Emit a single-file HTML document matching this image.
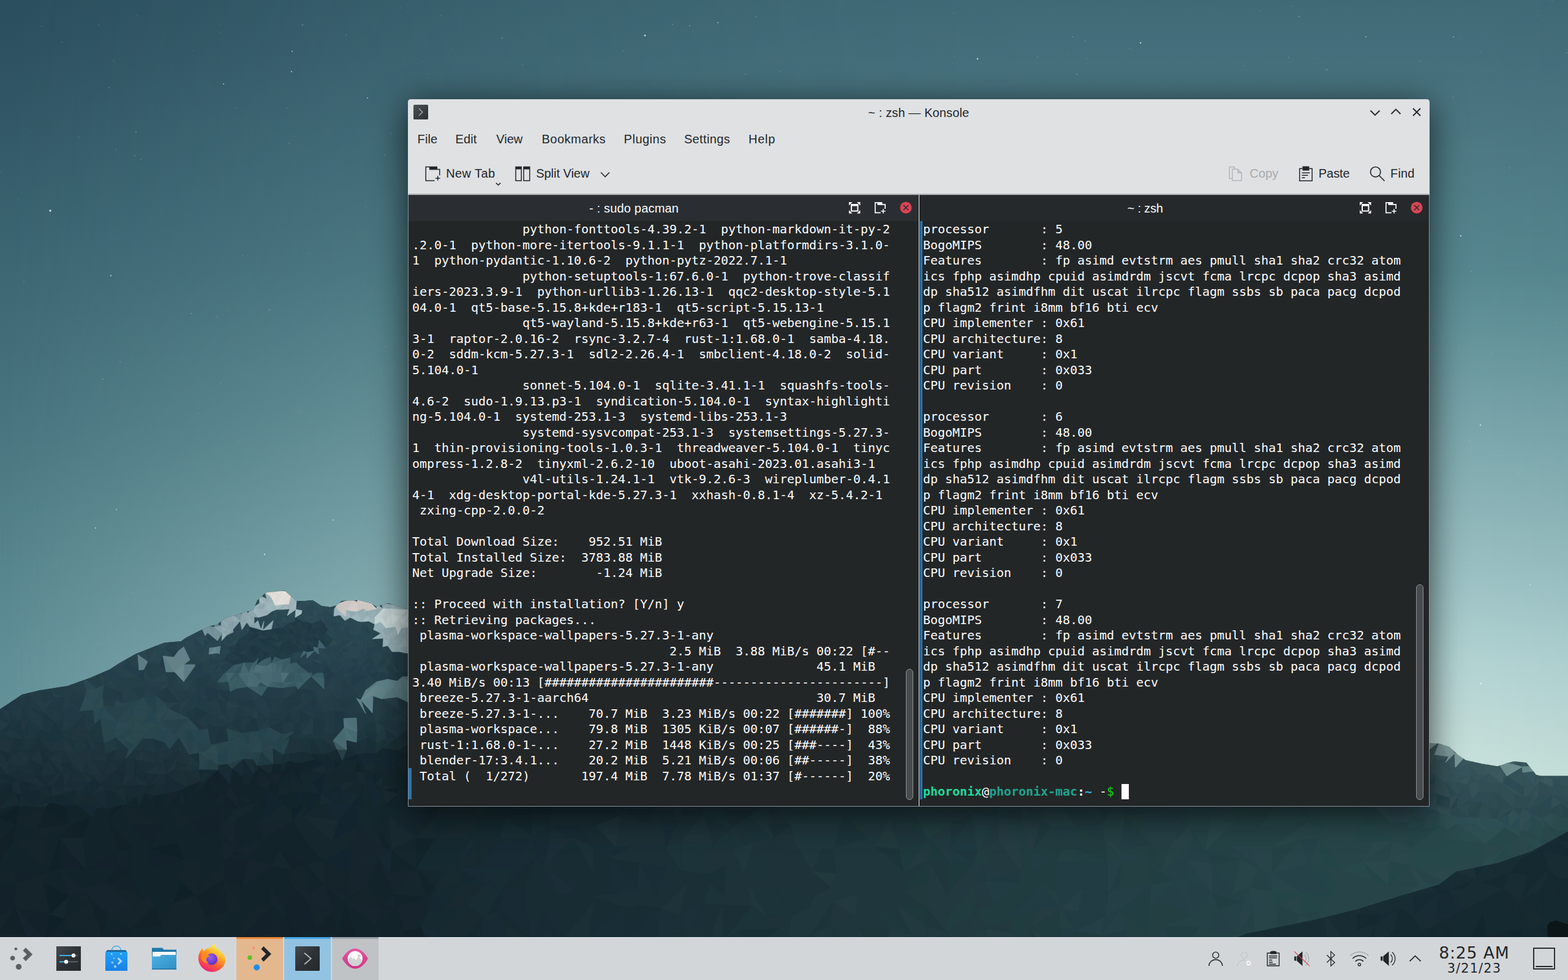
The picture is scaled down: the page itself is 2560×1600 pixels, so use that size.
<!DOCTYPE html>
<html lang="en"><head><meta charset="utf-8"><title>~ : zsh — Konsole</title>
<style>
html,body{margin:0;padding:0}
body{width:2560px;height:1600px;overflow:hidden;position:relative;background:#2f5563;font-family:"Liberation Sans","DejaVu Sans",sans-serif;color:#232629}
.abs{position:absolute}
.t{position:absolute;font-size:20px;line-height:24px;white-space:pre;color:#232629}
#wall{position:absolute;left:0;top:0}
#win{position:absolute;left:666px;top:162px;width:1668px;height:1155px;box-sizing:border-box;background:#dfe1e3;border-radius:4.500px 4.500px 0 0;box-shadow:0 10px 56px rgba(0,0,0,.7)}
#term{position:absolute;left:666px;top:318px;width:1668px;height:999px;box-sizing:border-box;background:#232627;border:1px solid #87949a;border-top:0}
.hdr{position:absolute;top:318px;height:43px}
pre.tt{position:absolute;margin:0;top:362px;font-family:"DejaVu Sans Mono","Liberation Mono",monospace;font-size:20px;line-height:25.5px;letter-spacing:-0.04px;color:#fcfcfc;white-space:pre}
pre.tt b{font-weight:bold}
.g1{color:#1cdc9a}.g2{color:#1ea48f}.bl{color:#3daee9}.g3{color:#11d116}
.pt{color:#fcfcfc}.dis{color:#a7aaad}
.clk{font:26.600px/30px 'DejaVu Sans','Liberation Sans',sans-serif}
.dat{font:20.800px/22px 'DejaVu Sans','Liberation Sans',sans-serif}
</style></head><body>
<svg id="wall" width="2560" height="1600" viewBox="0 0 2560 1600">
<defs>
<linearGradient id="skyv" x1="0" y1="0" x2="0" y2="1300" gradientUnits="userSpaceOnUse">
<stop offset="0" stop-color="#2a4e5d"/><stop offset=".0615" stop-color="#2d5160"/><stop offset=".338" stop-color="#3d6773"/><stop offset=".538" stop-color="#48757f"/><stop offset=".708" stop-color="#57858d"/><stop offset=".831" stop-color="#608e96"/><stop offset="1" stop-color="#68969d"/></linearGradient>
<linearGradient id="skyo" x1="0" y1="0" x2="0" y2="1300" gradientUnits="userSpaceOnUse">
<stop offset="0" stop-color="#aaeeec" stop-opacity=".18"/><stop offset=".0615" stop-color="#aaeeec" stop-opacity=".19"/><stop offset=".338" stop-color="#aceeec" stop-opacity=".23"/><stop offset=".538" stop-color="#c5eeec" stop-opacity=".40"/><stop offset=".708" stop-color="#d0eeec" stop-opacity=".54"/><stop offset=".831" stop-color="#d2eeea" stop-opacity=".71"/><stop offset=".923" stop-color="#d8eee7" stop-opacity=".80"/><stop offset="1" stop-color="#def0e8" stop-opacity=".86"/></linearGradient>
<linearGradient id="mk" x1="0" y1="0" x2="2560" y2="0" gradientUnits="userSpaceOnUse">
<stop offset="0" stop-color="#fff" stop-opacity="0"/><stop offset=".117" stop-color="#fff" stop-opacity=".27"/><stop offset=".215" stop-color="#fff" stop-opacity=".5"/><stop offset=".35" stop-color="#fff" stop-opacity=".72"/><stop offset=".5" stop-color="#fff" stop-opacity=".9"/><stop offset=".664" stop-color="#fff" stop-opacity="1"/><stop offset=".945" stop-color="#fff" stop-opacity="1"/><stop offset="1" stop-color="#fff" stop-opacity=".95"/></linearGradient>
<mask id="skym" maskUnits="userSpaceOnUse" x="0" y="0" width="2560" height="1600"><rect width="2560" height="1600" fill="url(#mk)"/></mask>
<clipPath id="cl"><path d="M0.0 1158.0 L36.0 1134.0 L65.0 1127.0 L110.0 1120.0 L149.0 1106.0 L180.0 1092.6 L192.4 1084.3 L221.3 1067.8 L252.3 1055.4 L268.8 1049.2 L295.7 1047.1 L304.0 1040.9 L324.6 1030.6 L343.2 1022.3 L355.6 1019.2 L366.0 1009.9 L386.6 1003.7 L403.1 998.6 L413.5 996.5 L419.7 981.0 L434.1 967.6 L465.1 964.5 L477.5 975.8 L483.7 981.0 L498.2 981.0 L510.6 980.0 L525.0 989.3 L539.5 991.3 L549.8 988.2 L558.1 981.0 L585.0 980.0 L605.6 985.1 L613.9 990.3 L634.5 985.1 L665.5 994.4 L700.0 1000.0 L700 1600 L0 1600z"/></clipPath>
<clipPath id="c3"><path d="M1990.0 1545.0 L2023.0 1529.0 L2036.0 1524.0 L2091.0 1513.0 L2145.0 1502.0 L2214.0 1485.0 L2282.0 1464.0 L2350.0 1444.0 L2377.0 1423.0 L2445.0 1409.0 L2500.0 1390.0 L2570.0 1352.0 L2570 1600 L1990 1600z"/></clipPath>
<clipPath id="cr"><path d="M2300.0 1205.0 L2333.0 1213.0 L2350.0 1214.0 L2366.0 1219.0 L2380.0 1232.0 L2393.0 1241.0 L2420.0 1247.0 L2445.0 1251.0 L2460.0 1246.0 L2472.0 1243.0 L2492.0 1245.0 L2500.0 1255.0 L2508.0 1265.0 L2535.0 1272.0 L2560.0 1275.0 L2560 1600 L2300 1600z"/></clipPath>
</defs>
<rect width="2560" height="1600" fill="url(#skyv)"/>
<rect width="2560" height="1600" fill="url(#skyo)" mask="url(#skym)"/>
<g fill="#e4f3f0">
<circle cx="82" cy="344" r="1.7" opacity="0.85"/>
<circle cx="1053" cy="58" r="1.4" opacity="0.80"/>
<circle cx="365" cy="137" r="1.1" opacity="0.60"/>
<circle cx="477" cy="84" r="1.1" opacity="0.60"/>
<circle cx="181" cy="450" r="1.2" opacity="0.60"/>
<circle cx="1862" cy="70" r="1.3" opacity="0.70"/>
<circle cx="2385" cy="385" r="1.3" opacity="0.70"/>
<circle cx="2417" cy="694" r="1.2" opacity="0.70"/>
<circle cx="2418" cy="1116" r="1.4" opacity="0.80"/>
<circle cx="2498" cy="954" r="1.1" opacity="0.60"/>
<circle cx="432" cy="905" r="1.2" opacity="0.70"/>
<circle cx="156" cy="862" r="1.1" opacity="0.60"/>
<circle cx="544" cy="849" r="1.1" opacity="0.60"/>
<circle cx="190" cy="832" r="1.0" opacity="0.60"/>
<circle cx="1172" cy="37" r="1.0" opacity="0.60"/>
<circle cx="1596" cy="96" r="1.3" opacity="0.80"/>
<circle cx="2230" cy="60" r="1.0" opacity="0.50"/>
<circle cx="476" cy="117" r="1.1" opacity="0.70"/>
<circle cx="600" cy="160" r="1.0" opacity="0.60"/>
<circle cx="2365" cy="535" r="0.7" opacity="0.17"/>
<circle cx="2030" cy="108" r="0.8" opacity="0.23"/>
<circle cx="161" cy="41" r="0.7" opacity="0.37"/>
<circle cx="598" cy="338" r="0.6" opacity="0.31"/>
<circle cx="2553" cy="1145" r="0.6" opacity="0.12"/>
<circle cx="739" cy="80" r="0.6" opacity="0.30"/>
<circle cx="2452" cy="974" r="0.6" opacity="0.10"/>
<circle cx="2373" cy="60" r="0.9" opacity="0.48"/>
<circle cx="1017" cy="83" r="0.7" opacity="0.41"/>
<circle cx="690" cy="100" r="0.8" opacity="0.19"/>
<circle cx="344" cy="813" r="0.6" opacity="0.11"/>
<circle cx="488" cy="841" r="0.7" opacity="0.15"/>
<circle cx="2534" cy="0" r="0.8" opacity="0.50"/>
<circle cx="50" cy="215" r="0.6" opacity="0.18"/>
<circle cx="374" cy="507" r="0.6" opacity="0.29"/>
<circle cx="187" cy="103" r="0.7" opacity="0.19"/>
<circle cx="325" cy="675" r="0.7" opacity="0.27"/>
<circle cx="468" cy="177" r="0.7" opacity="0.40"/>
<circle cx="638" cy="218" r="0.7" opacity="0.35"/>
<circle cx="200" cy="54" r="0.6" opacity="0.20"/>
<circle cx="2464" cy="274" r="0.9" opacity="0.23"/>
<circle cx="1844" cy="79" r="0.7" opacity="0.33"/>
<circle cx="189" cy="244" r="0.7" opacity="0.36"/>
<circle cx="177" cy="473" r="0.7" opacity="0.15"/>
<circle cx="451" cy="424" r="0.7" opacity="0.17"/>
<circle cx="354" cy="517" r="0.8" opacity="0.27"/>
<circle cx="359" cy="40" r="0.6" opacity="0.33"/>
<circle cx="85" cy="688" r="0.6" opacity="0.20"/>
<circle cx="2558" cy="86" r="0.8" opacity="0.40"/>
<circle cx="1558" cy="92" r="0.6" opacity="0.47"/>
<circle cx="2146" cy="96" r="0.6" opacity="0.28"/>
<circle cx="224" cy="25" r="0.6" opacity="0.34"/>
<circle cx="654" cy="13" r="0.8" opacity="0.24"/>
<circle cx="2381" cy="573" r="0.7" opacity="0.19"/>
<circle cx="2432" cy="318" r="0.7" opacity="0.19"/>
<circle cx="486" cy="884" r="0.8" opacity="0.12"/>
<circle cx="360" cy="53" r="0.6" opacity="0.32"/>
<circle cx="27" cy="543" r="0.6" opacity="0.17"/>
<circle cx="2319" cy="100" r="0.9" opacity="0.22"/>
<circle cx="524" cy="830" r="0.6" opacity="0.13"/>
<circle cx="2502" cy="617" r="0.8" opacity="0.17"/>
<circle cx="1838" cy="17" r="0.6" opacity="0.21"/>
<circle cx="1098" cy="40" r="0.8" opacity="0.40"/>
<circle cx="2559" cy="1035" r="0.9" opacity="0.17"/>
<circle cx="220" cy="254" r="0.8" opacity="0.38"/>
<circle cx="2444" cy="1000" r="0.7" opacity="0.11"/>
<circle cx="361" cy="626" r="0.8" opacity="0.23"/>
<circle cx="514" cy="616" r="0.6" opacity="0.23"/>
<circle cx="168" cy="619" r="0.9" opacity="0.29"/>
<circle cx="630" cy="566" r="0.8" opacity="0.21"/>
<circle cx="490" cy="710" r="0.8" opacity="0.13"/>
<circle cx="1994" cy="26" r="0.7" opacity="0.24"/>
<circle cx="30" cy="326" r="0.8" opacity="0.22"/>
<circle cx="59" cy="727" r="0.7" opacity="0.20"/>
<circle cx="558" cy="248" r="0.7" opacity="0.23"/>
<circle cx="612" cy="835" r="0.8" opacity="0.15"/>
<circle cx="513" cy="722" r="0.6" opacity="0.13"/>
<circle cx="1234" cy="27" r="0.9" opacity="0.24"/>
<circle cx="472" cy="234" r="0.7" opacity="0.42"/>
<circle cx="2372" cy="109" r="0.6" opacity="0.22"/>
<circle cx="1743" cy="89" r="0.6" opacity="0.28"/>
<circle cx="33" cy="806" r="0.7" opacity="0.13"/>
<circle cx="422" cy="589" r="0.6" opacity="0.19"/>
<circle cx="217" cy="968" r="0.9" opacity="0.15"/>
<circle cx="488" cy="672" r="0.8" opacity="0.26"/>
<circle cx="1849" cy="81" r="0.8" opacity="0.28"/>
<circle cx="258" cy="1021" r="0.6" opacity="0.10"/>
<circle cx="2418" cy="766" r="0.8" opacity="0.14"/>
<circle cx="196" cy="591" r="0.9" opacity="0.25"/>
<circle cx="2509" cy="26" r="0.6" opacity="0.41"/>
<circle cx="129" cy="224" r="0.9" opacity="0.17"/>
<circle cx="2166" cy="114" r="0.9" opacity="0.41"/>
<circle cx="195" cy="687" r="0.6" opacity="0.18"/>
<circle cx="2402" cy="443" r="0.7" opacity="0.33"/>
<circle cx="2379" cy="763" r="0.8" opacity="0.11"/>
<circle cx="1751" cy="60" r="0.8" opacity="0.41"/>
<circle cx="2417" cy="84" r="0.7" opacity="0.31"/>
<circle cx="623" cy="601" r="0.9" opacity="0.15"/>
<circle cx="2457" cy="281" r="0.6" opacity="0.18"/>
<circle cx="1067" cy="135" r="0.6" opacity="0.28"/>
<circle cx="396" cy="417" r="0.7" opacity="0.30"/>
<circle cx="2553" cy="1095" r="0.7" opacity="0.09"/>
<circle cx="291" cy="1026" r="0.8" opacity="0.10"/>
<circle cx="2436" cy="577" r="0.7" opacity="0.30"/>
<circle cx="101" cy="69" r="0.8" opacity="0.27"/>
<circle cx="68" cy="43" r="0.7" opacity="0.35"/>
<circle cx="185" cy="99" r="0.7" opacity="0.34"/>
<circle cx="2146" cy="85" r="0.6" opacity="0.32"/>
<circle cx="385" cy="176" r="0.8" opacity="0.26"/>
<circle cx="470" cy="751" r="0.6" opacity="0.18"/>
<circle cx="2108" cy="10" r="0.8" opacity="0.26"/>
<circle cx="1694" cy="93" r="0.8" opacity="0.33"/>
<circle cx="2540" cy="527" r="0.7" opacity="0.21"/>
<circle cx="2392" cy="1028" r="0.7" opacity="0.08"/>
<circle cx="2121" cy="27" r="0.9" opacity="0.37"/>
<circle cx="396" cy="679" r="0.7" opacity="0.15"/>
<circle cx="720" cy="25" r="0.6" opacity="0.36"/>
<circle cx="163" cy="628" r="0.6" opacity="0.18"/>
<circle cx="700" cy="121" r="0.8" opacity="0.21"/>
<circle cx="628" cy="253" r="0.8" opacity="0.36"/>
<circle cx="2478" cy="773" r="0.9" opacity="0.18"/>
<circle cx="2060" cy="83" r="0.6" opacity="0.31"/>
<circle cx="2451" cy="736" r="0.8" opacity="0.22"/>
<circle cx="523" cy="488" r="0.8" opacity="0.20"/>
<circle cx="43" cy="553" r="0.6" opacity="0.19"/>
<circle cx="505" cy="413" r="0.7" opacity="0.28"/>
<circle cx="2399" cy="720" r="0.9" opacity="0.25"/>
<circle cx="2446" cy="759" r="0.6" opacity="0.18"/>
<circle cx="565" cy="57" r="0.7" opacity="0.42"/>
<circle cx="2535" cy="756" r="0.7" opacity="0.25"/>
<circle cx="1320" cy="60" r="0.7" opacity="0.19"/>
<circle cx="2104" cy="94" r="0.8" opacity="0.36"/>
<circle cx="1775" cy="95" r="0.8" opacity="0.19"/>
<circle cx="480" cy="222" r="0.6" opacity="0.37"/>
<circle cx="1126" cy="42" r="0.9" opacity="0.35"/>
<circle cx="403" cy="956" r="0.8" opacity="0.12"/>
<circle cx="2553" cy="767" r="0.6" opacity="0.16"/>
<circle cx="1758" cy="121" r="0.9" opacity="0.37"/>
<circle cx="312" cy="512" r="0.9" opacity="0.28"/>
<circle cx="290" cy="887" r="0.7" opacity="0.21"/>
<circle cx="389" cy="721" r="0.8" opacity="0.27"/>
<circle cx="222" cy="216" r="0.9" opacity="0.36"/>
<circle cx="236" cy="161" r="0.6" opacity="0.22"/>
<circle cx="494" cy="41" r="0.9" opacity="0.37"/>
<circle cx="230" cy="260" r="0.7" opacity="0.42"/>
<circle cx="2372" cy="159" r="0.7" opacity="0.39"/>
<circle cx="39" cy="460" r="0.8" opacity="0.35"/>
<circle cx="1558" cy="21" r="0.8" opacity="0.25"/>
<circle cx="262" cy="820" r="0.8" opacity="0.21"/>
<circle cx="362" cy="820" r="0.7" opacity="0.18"/>
<circle cx="68" cy="758" r="0.6" opacity="0.13"/>
<circle cx="853" cy="105" r="0.8" opacity="0.26"/>
<circle cx="162" cy="1052" r="0.7" opacity="0.16"/>
<circle cx="2539" cy="940" r="0.7" opacity="0.10"/>
<circle cx="475" cy="630" r="0.6" opacity="0.20"/>
<circle cx="2380" cy="1148" r="0.7" opacity="0.08"/>
<circle cx="2057" cy="18" r="0.7" opacity="0.32"/>
<circle cx="84" cy="607" r="0.6" opacity="0.23"/>
<circle cx="444" cy="597" r="0.8" opacity="0.17"/>
<circle cx="2385" cy="61" r="0.6" opacity="0.40"/>
<circle cx="1273" cy="117" r="0.8" opacity="0.30"/>
<circle cx="820" cy="62" r="0.9" opacity="0.40"/>
<circle cx="178" cy="143" r="0.9" opacity="0.25"/>
<circle cx="1217" cy="121" r="0.7" opacity="0.34"/>
<circle cx="314" cy="82" r="0.7" opacity="0.22"/>
<circle cx="1" cy="280" r="0.8" opacity="0.17"/>
<circle cx="440" cy="506" r="0.9" opacity="0.30"/>
<circle cx="1498" cy="52" r="0.6" opacity="0.33"/>
<circle cx="366" cy="893" r="0.9" opacity="0.20"/>
<circle cx="1772" cy="67" r="0.8" opacity="0.43"/>
</g>
<rect x="680" y="1000" width="1640" height="600" fill="#20383f"/>
<rect x="0" y="1290" width="2560" height="310" fill="#1a2f36"/>
<g stroke-width=".8" stroke-linejoin="round">
<path fill="#0f2127" stroke="#0f2127" d="M31 1315L27 1347L-3 1335zM73 1318L98 1293L114 1346zM97 1369L99 1417L79 1424zM69 1439L113 1463L82 1493zM82 1493L104 1499L75 1535zM114 1346L150 1333L135 1368zM190 1309L202 1314L176 1339zM247 1385L290 1376L300 1403zM296 1439L320 1461L282 1475zM552 1527L577 1514L576 1561z"/>
<path fill="#0f212a" stroke="#0f212a" d="M472 1307L505 1303L478 1340z"/>
<path fill="#122127" stroke="#122127" d="M27 1347L23 1370L-3 1374zM-3 1374L23 1370L-3 1411zM24 1480L42 1528L-3 1523zM-3 1523L47 1561L-3 1561zM73 1318L114 1346L61 1354zM114 1346L135 1368L97 1369zM149 1473L177 1491L166 1530zM176 1339L218 1384L192 1388zM191 1416L214 1427L170 1441zM252 1480L264 1511L213 1516zM320 1461L365 1438L336 1500zM544 1488L552 1527L515 1518zM564 1473L577 1514L552 1527zM552 1527L576 1561L536 1561zM661 1519L688 1513L653 1561zM688 1513L690 1561L653 1561z"/>
<path fill="#12212a" stroke="#12212a" d="M-3 1446L26 1443L24 1480zM-3 1446L24 1480L-3 1497zM24 1422L79 1424L26 1443zM24 1480L82 1493L75 1535zM104 1499L106 1519L75 1535zM97 1369L140 1420L99 1417zM106 1519L142 1530L101 1561zM192 1388L191 1416L140 1420zM142 1530L188 1561L146 1561zM218 1384L214 1427L191 1416zM214 1427L228 1462L170 1441zM166 1530L213 1516L227 1561zM214 1347L265 1347L247 1385zM295 1267L278 1313L260 1315zM247 1385L300 1403L245 1417zM298 1520L322 1524L294 1561zM322 1524L332 1561L294 1561zM359 1316L357 1354L313 1342zM313 1342L357 1354L330 1370zM365 1438L373 1487L336 1500zM367 1404L407 1401L395 1449zM367 1404L395 1449L365 1438zM393 1267L441 1296L389 1315zM443 1478L443 1525L392 1534zM467 1495L481 1534L443 1525zM481 1534L459 1561L445 1561zM457 1389L498 1410L476 1419zM475 1443L506 1477L467 1495zM467 1495L506 1477L481 1534zM506 1477L515 1518L481 1534zM552 1527L536 1561L517 1561zM577 1514L610 1561L576 1561z"/>
<path fill="#12242a" stroke="#12242a" d="M-3 1314L31 1315L-3 1335zM-3 1335L27 1347L-3 1374zM23 1370L24 1422L-3 1411zM-3 1411L26 1443L-3 1446zM31 1315L73 1318L27 1347zM27 1347L61 1354L23 1370zM61 1354L70 1370L23 1370zM23 1370L79 1424L24 1422zM42 1528L75 1535L59 1561zM114 1346L97 1369L70 1370zM70 1370L97 1369L79 1424zM79 1424L99 1417L113 1463zM79 1424L113 1463L69 1439zM75 1535L106 1519L101 1561zM75 1535L101 1561L59 1561zM98 1293L150 1333L114 1346zM99 1417L140 1420L132 1451zM113 1463L149 1473L104 1499zM104 1499L142 1530L106 1519zM157 1320L190 1309L150 1333zM190 1309L176 1339L150 1333zM150 1333L176 1339L135 1368zM176 1339L192 1388L135 1368zM135 1368L192 1388L140 1420zM140 1420L191 1416L170 1441zM140 1420L170 1441L132 1451zM132 1451L177 1491L149 1473zM202 1314L214 1347L176 1339zM176 1339L214 1347L218 1384zM192 1388L218 1384L191 1416zM177 1491L213 1516L166 1530zM166 1530L227 1561L188 1561zM202 1314L260 1315L265 1347zM214 1347L247 1385L218 1384zM218 1384L247 1385L214 1427zM247 1385L245 1417L214 1427zM214 1427L245 1417L228 1462zM245 1417L243 1460L228 1462zM228 1462L243 1460L219 1481zM213 1516L264 1511L227 1561zM264 1511L264 1561L227 1561zM260 1315L278 1313L290 1353zM260 1315L290 1353L265 1347zM265 1347L290 1353L290 1376zM265 1347L290 1376L247 1385zM245 1417L300 1403L243 1460zM300 1403L296 1439L243 1460zM243 1460L296 1439L282 1475zM243 1460L282 1475L252 1480zM252 1480L282 1475L264 1511zM264 1511L294 1561L264 1561zM295 1267L317 1267L330 1310zM278 1313L330 1310L313 1342zM290 1353L313 1342L330 1370zM290 1353L330 1370L290 1376zM290 1376L330 1370L300 1403zM330 1370L328 1408L300 1403zM330 1310L359 1316L313 1342zM357 1354L359 1368L330 1370zM330 1370L359 1368L367 1404zM330 1370L367 1404L328 1408zM328 1408L367 1404L320 1461zM336 1500L367 1512L322 1524zM322 1524L367 1512L332 1561zM367 1267L393 1267L359 1316zM393 1267L389 1315L359 1316zM359 1316L389 1315L357 1354zM357 1354L385 1388L359 1368zM385 1388L407 1401L367 1404zM365 1438L395 1449L402 1492zM373 1487L402 1492L367 1512zM402 1492L392 1534L367 1512zM367 1512L392 1534L364 1561zM393 1267L422 1267L441 1296zM441 1296L423 1342L383 1341zM383 1341L423 1342L385 1388zM423 1342L428 1369L385 1388zM428 1369L444 1413L407 1401zM444 1413L440 1443L395 1449zM395 1449L440 1443L402 1492zM440 1443L443 1478L402 1492zM392 1534L445 1561L387 1561zM422 1267L475 1267L472 1307zM422 1267L472 1307L441 1296zM478 1340L457 1389L428 1369zM428 1369L457 1389L444 1413zM444 1413L476 1419L440 1443zM476 1419L475 1443L440 1443zM440 1443L475 1443L467 1495zM443 1478L467 1495L443 1525zM443 1525L481 1534L445 1561zM475 1267L509 1267L472 1307zM478 1340L503 1378L457 1389zM457 1389L503 1378L498 1410zM481 1534L515 1518L517 1561zM503 1378L527 1406L498 1410zM498 1410L530 1444L505 1457zM515 1518L552 1527L517 1561zM530 1444L564 1473L544 1488zM544 1488L564 1473L552 1527zM569 1463L600 1448L564 1473zM564 1473L614 1509L577 1514zM577 1514L614 1509L610 1561zM617 1354L639 1387L625 1383zM618 1400L642 1460L600 1448zM600 1448L642 1460L625 1481zM648 1481L661 1519L614 1509zM614 1509L661 1519L653 1561zM639 1387L680 1418L637 1426zM642 1460L696 1464L648 1481zM678 1368L711 1368L680 1418zM680 1418L711 1450L696 1464zM688 1513L707 1561L690 1561z"/>
<path fill="#12242d" stroke="#12242d" d="M441 1296L472 1307L423 1342zM505 1303L530 1308L495 1332zM580 1307L586 1347L553 1339zM553 1339L586 1347L541 1373zM572 1381L571 1427L527 1406zM588 1267L621 1311L580 1307z"/>
<path fill="#12272d" stroke="#12272d" d="M621 1311L650 1315L617 1354z"/>
<path fill="#15242a" stroke="#15242a" d="M-3 1411L24 1422L26 1443zM-3 1497L24 1480L-3 1523zM-3 1523L42 1528L47 1561zM73 1318L61 1354L27 1347zM23 1370L70 1370L79 1424zM79 1424L69 1439L26 1443zM26 1443L69 1439L24 1480zM69 1439L82 1493L24 1480zM42 1528L59 1561L47 1561zM61 1354L114 1346L70 1370zM113 1463L132 1451L149 1473zM104 1499L149 1473L142 1530zM142 1530L146 1561L101 1561zM149 1473L166 1530L142 1530zM170 1441L228 1462L219 1481zM177 1491L219 1481L213 1516zM202 1314L265 1347L214 1347zM219 1481L252 1480L213 1516zM282 1475L298 1520L264 1511zM264 1511L298 1520L294 1561zM278 1313L313 1342L290 1353zM300 1403L328 1408L296 1439zM328 1408L320 1461L296 1439zM320 1461L336 1500L282 1475zM282 1475L336 1500L322 1524zM282 1475L322 1524L298 1520zM367 1404L365 1438L320 1461zM336 1500L373 1487L367 1512zM367 1512L364 1561L332 1561zM365 1438L402 1492L373 1487zM392 1534L387 1561L364 1561zM402 1492L443 1478L392 1534zM392 1534L443 1525L445 1561zM476 1419L498 1410L475 1443zM498 1410L505 1457L475 1443zM506 1477L544 1488L515 1518zM527 1406L571 1427L530 1444zM571 1427L569 1463L530 1444zM600 1448L625 1481L564 1473zM625 1481L648 1481L614 1509zM614 1509L653 1561L610 1561z"/>
<path fill="#15242d" stroke="#15242d" d="M24 1480L75 1535L42 1528zM99 1417L132 1451L113 1463zM132 1451L170 1441L177 1491zM170 1441L219 1481L177 1491zM243 1460L252 1480L219 1481zM295 1267L330 1310L278 1313zM317 1267L367 1267L330 1310zM367 1267L359 1316L330 1310zM357 1354L383 1341L385 1388zM359 1368L385 1388L367 1404zM385 1388L428 1369L407 1401zM407 1401L444 1413L395 1449zM423 1342L478 1340L428 1369zM440 1443L467 1495L443 1478zM509 1267L505 1303L472 1307zM475 1443L505 1457L506 1477zM505 1457L530 1444L506 1477zM530 1444L544 1488L506 1477zM530 1444L569 1463L564 1473zM586 1347L625 1383L572 1381zM572 1381L625 1383L571 1427zM571 1427L618 1400L569 1463zM618 1400L600 1448L569 1463zM564 1473L625 1481L614 1509zM625 1383L639 1387L618 1400zM618 1400L637 1426L642 1460zM642 1460L648 1481L625 1481zM637 1426L680 1418L642 1460zM696 1464L698 1489L648 1481zM648 1481L698 1489L688 1513zM648 1481L688 1513L661 1519z"/>
<path fill="#15272d" stroke="#15272d" d="M113 1463L104 1499L82 1493zM97 1369L135 1368L140 1420zM142 1530L166 1530L188 1561zM389 1315L383 1341L357 1354zM389 1315L441 1296L383 1341zM472 1307L478 1340L423 1342zM457 1389L476 1419L444 1413zM505 1303L495 1332L478 1340zM478 1340L495 1332L503 1378zM481 1534L517 1561L459 1561zM509 1267L553 1267L505 1303zM553 1267L530 1308L505 1303zM530 1308L553 1339L495 1332zM495 1332L541 1373L503 1378zM503 1378L541 1373L527 1406zM498 1410L527 1406L530 1444zM553 1267L588 1267L580 1307zM553 1267L580 1307L530 1308zM586 1347L572 1381L541 1373zM541 1373L572 1381L527 1406zM580 1307L621 1311L586 1347zM621 1311L617 1354L586 1347zM586 1347L617 1354L625 1383zM625 1383L618 1400L571 1427zM602 1267L650 1315L621 1311zM617 1354L635 1334L639 1387zM650 1315L673 1349L635 1334zM639 1387L678 1368L680 1418zM680 1418L696 1464L642 1460zM673 1349L713 1332L678 1368zM680 1418L722 1422L711 1450zM696 1464L711 1450L698 1489z"/>
<path fill="#152730" stroke="#152730" d="M30 1267L31 1315L-3 1314zM98 1293L157 1320L150 1333zM530 1308L580 1307L553 1339zM588 1267L602 1267L621 1311zM602 1267L659 1267L650 1315zM650 1315L635 1334L617 1354zM639 1387L637 1426L618 1400zM650 1315L693 1319L673 1349zM635 1334L673 1349L678 1368zM693 1319L716 1317L713 1332zM693 1319L713 1332L673 1349zM711 1450L722 1488L698 1489zM761 1531L785 1513L755 1561z"/>
<path fill="#152a30" stroke="#152a30" d="M-3 1267L30 1267L-3 1314zM30 1267L73 1318L31 1315zM216 1267L260 1315L202 1314zM659 1267L693 1319L650 1315zM672 1267L721 1267L693 1319zM711 1368L722 1422L680 1418zM698 1489L722 1488L688 1513zM722 1488L718 1523L688 1513zM713 1332L763 1335L711 1368zM711 1368L765 1371L745 1413zM711 1368L745 1413L722 1422zM722 1422L745 1413L711 1450zM711 1450L753 1445L722 1488zM722 1488L763 1478L718 1523zM718 1523L761 1531L707 1561zM744 1267L792 1267L754 1299zM783 1330L781 1373L765 1371zM745 1413L790 1445L753 1445zM792 1498L785 1513L761 1531zM804 1309L839 1312L826 1333zM804 1309L826 1333L783 1330zM783 1330L826 1333L816 1368zM783 1330L816 1368L781 1373zM819 1453L816 1486L792 1498zM864 1297L869 1340L826 1333zM826 1333L869 1340L868 1367zM864 1297L905 1298L897 1347zM936 1267L967 1294L944 1300z"/>
<path fill="#182a30" stroke="#182a30" d="M495 1332L553 1339L541 1373zM659 1267L672 1267L693 1319zM635 1334L678 1368L639 1387zM721 1267L716 1317L693 1319zM713 1332L711 1368L678 1368zM721 1267L744 1267L754 1299zM721 1267L754 1299L716 1317zM716 1317L754 1299L713 1332zM763 1335L765 1371L711 1368zM745 1413L753 1445L711 1450zM753 1445L763 1478L722 1488zM763 1478L761 1531L718 1523zM761 1531L755 1561L707 1561zM754 1299L783 1330L763 1335zM763 1335L783 1330L765 1371zM781 1373L781 1418L745 1413zM753 1445L790 1445L763 1478zM763 1478L792 1498L761 1531zM785 1513L787 1561L755 1561zM781 1373L816 1368L781 1418zM875 1400L856 1447L819 1453zM816 1486L869 1536L823 1511z"/>
<path fill="#182a33" stroke="#182a33" d="M30 1267L84 1267L73 1318zM137 1267L157 1320L98 1293zM216 1267L202 1314L190 1309zM260 1267L295 1267L260 1315zM688 1513L718 1523L707 1561zM754 1299L763 1335L713 1332zM792 1267L804 1309L754 1299zM765 1371L781 1373L745 1413zM745 1413L781 1418L790 1445zM792 1267L823 1267L804 1309zM823 1267L839 1312L804 1309zM816 1368L838 1418L781 1418zM781 1418L819 1453L790 1445zM816 1486L823 1511L785 1513zM785 1513L823 1511L835 1561zM785 1513L835 1561L787 1561zM816 1368L868 1367L838 1418zM838 1418L875 1400L819 1453zM819 1453L856 1447L856 1475zM819 1453L856 1475L816 1486zM816 1486L856 1475L869 1536zM870 1267L894 1267L864 1297zM894 1267L905 1298L864 1297zM864 1297L897 1347L869 1340zM897 1347L898 1369L868 1367zM868 1367L898 1369L888 1415zM868 1367L888 1415L875 1400zM889 1486L900 1514L869 1536zM894 1267L936 1267L944 1300zM894 1267L944 1300L905 1298zM897 1347L948 1351L935 1368zM900 1514L924 1528L905 1561zM948 1351L968 1383L935 1368z"/>
<path fill="#182d33" stroke="#182d33" d="M179 1267L216 1267L190 1309zM754 1299L804 1309L783 1330zM790 1445L792 1498L763 1478zM781 1418L838 1418L819 1453zM790 1445L819 1453L792 1498zM792 1498L816 1486L785 1513zM823 1267L870 1267L839 1312zM839 1312L864 1297L826 1333zM826 1333L868 1367L816 1368zM868 1367L875 1400L838 1418zM823 1511L869 1536L859 1561zM823 1511L859 1561L835 1561zM869 1340L897 1347L868 1367zM875 1400L888 1415L913 1461zM875 1400L913 1461L856 1447zM856 1447L913 1461L889 1486zM856 1447L889 1486L856 1475zM856 1475L889 1486L869 1536zM869 1536L900 1514L905 1561zM869 1536L905 1561L859 1561zM905 1298L944 1300L897 1347zM944 1300L948 1351L897 1347zM897 1347L935 1368L898 1369zM935 1368L936 1404L888 1415zM888 1415L936 1404L941 1455zM913 1461L941 1455L938 1499zM913 1461L938 1499L889 1486zM889 1486L938 1499L900 1514zM938 1499L924 1528L900 1514zM924 1528L944 1561L905 1561zM944 1300L967 1294L974 1348zM944 1300L974 1348L948 1351zM948 1351L974 1348L968 1383zM935 1368L968 1420L936 1404zM936 1404L968 1420L966 1463zM936 1404L966 1463L941 1455zM941 1455L966 1463L938 1499zM966 1463L970 1472L938 1499zM938 1499L970 1472L924 1528zM924 1528L961 1528L944 1561zM961 1267L1012 1267L967 1294zM967 1294L999 1316L974 1348zM999 1316L1014 1331L974 1348zM974 1348L1005 1383L968 1383zM968 1383L994 1401L968 1420zM968 1420L994 1401L1004 1460zM968 1420L1004 1460L966 1463zM966 1463L1022 1481L970 1472zM970 1472L1022 1481L961 1528zM961 1528L1019 1530L1018 1561zM1005 1383L1036 1379L994 1401zM994 1401L1044 1410L1041 1450zM1022 1481L1046 1478L1019 1530zM1046 1478L1038 1522L1019 1530zM1057 1310L1084 1297L1056 1344zM1046 1478L1080 1483L1038 1522z"/>
<path fill="#182d36" stroke="#182d36" d="M1012 1267L999 1316L967 1294zM968 1383L1005 1383L994 1401zM1022 1481L1019 1530L961 1528zM961 1528L1018 1561L982 1561zM999 1316L1057 1310L1056 1344zM994 1401L1041 1450L1004 1460zM1019 1530L1038 1522L1018 1561zM1044 1410L1088 1414L1073 1462zM1080 1483L1074 1519L1038 1522zM1038 1522L1074 1519L1044 1561zM1074 1519L1086 1561L1044 1561zM1081 1336L1108 1341L1087 1384z"/>
<path fill="#183036" stroke="#183036" d="M1046 1267L1078 1267L1084 1297zM1078 1267L1116 1312L1084 1297zM1088 1414L1112 1421L1122 1442zM1157 1427L1160 1443L1122 1442zM1157 1427L1186 1412L1160 1443zM1211 1519L1271 1515L1221 1561z"/>
<path fill="#1b2d33" stroke="#1b2d33" d="M137 1267L190 1309L157 1320zM870 1267L864 1297L839 1312z"/>
<path fill="#1b2d36" stroke="#1b2d36" d="M137 1267L179 1267L190 1309zM216 1267L260 1267L260 1315zM898 1369L935 1368L888 1415zM888 1415L941 1455L913 1461z"/>
<path fill="#1b3036" stroke="#1b3036" d="M84 1267L96 1267L98 1293zM84 1267L98 1293L73 1318zM96 1267L137 1267L98 1293zM936 1267L961 1267L967 1294zM935 1368L968 1383L968 1420zM970 1472L961 1528L924 1528zM961 1528L982 1561L944 1561zM966 1463L1004 1460L1022 1481zM1012 1267L1046 1267L1057 1310zM1012 1267L1057 1310L999 1316zM999 1316L1056 1344L1014 1331zM1014 1331L1056 1344L1005 1383zM1056 1344L1036 1379L1005 1383zM1036 1379L1044 1410L994 1401zM1004 1460L1041 1450L1046 1478zM1004 1460L1046 1478L1022 1481zM1038 1522L1044 1561L1018 1561zM1046 1267L1084 1297L1057 1310zM1084 1297L1081 1336L1056 1344zM1056 1344L1081 1336L1036 1379zM1081 1336L1087 1384L1036 1379zM1036 1379L1087 1384L1088 1414zM1036 1379L1088 1414L1044 1410zM1044 1410L1073 1462L1041 1450zM1041 1450L1073 1462L1080 1483zM1041 1450L1080 1483L1046 1478zM1078 1267L1125 1267L1116 1312zM1084 1297L1108 1341L1081 1336zM1108 1341L1112 1373L1087 1384zM1087 1384L1112 1421L1088 1414zM1088 1414L1122 1442L1073 1462zM1073 1462L1122 1442L1080 1483zM1080 1483L1109 1494L1074 1519zM1109 1494L1120 1527L1074 1519zM1074 1519L1120 1527L1120 1561zM1074 1519L1120 1561L1086 1561zM1125 1267L1157 1267L1146 1294zM1116 1312L1146 1294L1108 1341zM1146 1294L1148 1329L1108 1341zM1108 1341L1148 1329L1112 1373zM1112 1421L1157 1427L1122 1442zM1122 1442L1160 1443L1148 1475zM1122 1442L1148 1475L1109 1494zM1148 1475L1160 1528L1120 1527zM1120 1527L1152 1561L1120 1561zM1157 1267L1182 1306L1146 1294zM1148 1329L1194 1353L1165 1379zM1186 1412L1183 1463L1160 1443zM1148 1475L1179 1477L1160 1528zM1219 1267L1234 1317L1182 1306zM1182 1306L1234 1317L1194 1353zM1234 1317L1222 1334L1194 1353zM1179 1477L1227 1479L1182 1534zM1219 1267L1256 1313L1234 1317zM1255 1347L1291 1346L1263 1369z"/>
<path fill="#1b3039" stroke="#1b3039" d="M1109 1494L1148 1475L1120 1527zM1160 1528L1182 1534L1198 1561zM1182 1534L1211 1519L1198 1561z"/>
<path fill="#1b3339" stroke="#1b3339" d="M1087 1384L1112 1373L1112 1421zM1125 1267L1146 1294L1116 1312zM1112 1373L1165 1379L1112 1421zM1165 1379L1157 1427L1112 1421zM1120 1527L1160 1528L1152 1561zM1146 1294L1182 1306L1194 1353zM1146 1294L1194 1353L1148 1329zM1194 1353L1198 1388L1165 1379zM1160 1443L1183 1463L1179 1477zM1160 1443L1179 1477L1148 1475zM1179 1477L1182 1534L1160 1528zM1184 1267L1219 1267L1182 1306zM1222 1334L1231 1375L1198 1388zM1186 1412L1214 1425L1183 1463zM1227 1479L1211 1519L1182 1534zM1211 1519L1221 1561L1198 1561zM1219 1267L1247 1267L1256 1313zM1234 1317L1256 1313L1222 1334zM1222 1334L1263 1369L1231 1375zM1263 1369L1247 1419L1214 1425zM1214 1425L1247 1419L1263 1444zM1222 1447L1263 1444L1252 1496zM1227 1479L1271 1515L1211 1519zM1271 1515L1262 1561L1221 1561zM1298 1267L1291 1293L1256 1313zM1263 1444L1291 1448L1292 1497zM1263 1444L1292 1497L1252 1496zM1292 1497L1285 1535L1271 1515zM1285 1535L1289 1561L1262 1561zM1291 1448L1331 1463L1292 1497zM1285 1535L1325 1525L1340 1561zM1377 1267L1369 1303L1325 1308zM1340 1386L1361 1385L1366 1427zM1340 1386L1366 1427L1326 1422zM1360 1472L1357 1511L1325 1525zM1376 1331L1417 1369L1361 1385zM1429 1382L1469 1386L1475 1423z"/>
<path fill="#1e3339" stroke="#1e3339" d="M974 1348L1014 1331L1005 1383zM1084 1297L1116 1312L1108 1341zM1122 1442L1109 1494L1080 1483zM1148 1329L1165 1379L1112 1373zM1157 1267L1184 1267L1182 1306zM1165 1379L1198 1388L1157 1427zM1198 1388L1186 1412L1157 1427zM1160 1528L1198 1561L1152 1561zM1194 1353L1222 1334L1198 1388zM1198 1388L1214 1425L1186 1412zM1214 1425L1222 1447L1183 1463zM1183 1463L1222 1447L1227 1479zM1183 1463L1227 1479L1179 1477zM1231 1375L1263 1369L1214 1425zM1214 1425L1263 1444L1222 1447zM1227 1479L1252 1496L1271 1515zM1256 1313L1291 1346L1255 1347zM1291 1346L1299 1378L1263 1369zM1263 1369L1299 1378L1286 1406zM1263 1369L1286 1406L1247 1419zM1247 1419L1286 1406L1291 1448zM1247 1419L1291 1448L1263 1444zM1252 1496L1292 1497L1271 1515zM1271 1515L1285 1535L1262 1561zM1342 1267L1325 1308L1291 1293zM1299 1378L1326 1422L1286 1406zM1286 1406L1326 1422L1331 1463zM1286 1406L1331 1463L1291 1448zM1331 1463L1320 1483L1292 1497zM1326 1422L1357 1449L1331 1463z"/>
<path fill="#1e3639" stroke="#1e3639" d="M1247 1267L1298 1267L1256 1313zM1291 1293L1325 1308L1291 1346zM1325 1308L1329 1329L1291 1346zM1285 1535L1340 1561L1289 1561zM1376 1331L1410 1342L1417 1369zM1357 1511L1407 1561L1364 1561zM1400 1517L1453 1518L1437 1561z"/>
<path fill="#1e363c" stroke="#1e363c" d="M1198 1388L1231 1375L1214 1425zM1256 1313L1255 1347L1222 1334zM1222 1334L1255 1347L1263 1369zM1222 1447L1252 1496L1227 1479zM1256 1313L1291 1293L1291 1346zM1298 1267L1342 1267L1291 1293zM1291 1346L1329 1329L1340 1386zM1291 1346L1340 1386L1299 1378zM1299 1378L1340 1386L1326 1422zM1292 1497L1320 1483L1285 1535zM1320 1483L1325 1525L1285 1535zM1342 1267L1377 1267L1325 1308zM1325 1308L1369 1303L1376 1331zM1325 1308L1376 1331L1329 1329zM1329 1329L1376 1331L1361 1385zM1329 1329L1361 1385L1340 1386zM1331 1463L1357 1449L1320 1483zM1357 1449L1360 1472L1320 1483zM1320 1483L1360 1472L1325 1525zM1325 1525L1357 1511L1340 1561zM1357 1511L1364 1561L1340 1561zM1377 1267L1402 1267L1404 1300zM1377 1267L1404 1300L1369 1303zM1369 1303L1404 1300L1410 1342zM1369 1303L1410 1342L1376 1331zM1361 1385L1417 1369L1404 1414zM1361 1385L1404 1414L1366 1427zM1366 1427L1404 1414L1400 1460zM1366 1427L1400 1460L1357 1449zM1357 1449L1400 1460L1360 1472zM1396 1496L1400 1517L1357 1511zM1357 1511L1400 1517L1407 1561zM1402 1267L1442 1267L1434 1295zM1402 1267L1434 1295L1404 1300zM1404 1300L1434 1295L1452 1338zM1404 1300L1452 1338L1410 1342zM1410 1342L1452 1338L1429 1382zM1410 1342L1429 1382L1417 1369zM1417 1369L1429 1382L1404 1414zM1429 1382L1441 1409L1404 1414zM1404 1414L1441 1409L1400 1460zM1441 1409L1435 1459L1400 1460zM1400 1460L1435 1459L1436 1484zM1400 1460L1436 1484L1396 1496zM1396 1496L1436 1484L1400 1517zM1436 1484L1453 1518L1400 1517zM1442 1267L1467 1267L1434 1295zM1467 1267L1480 1311L1434 1295zM1434 1295L1480 1311L1452 1338zM1480 1311L1475 1339L1452 1338zM1452 1338L1475 1339L1469 1386zM1429 1382L1475 1423L1441 1409zM1441 1409L1475 1423L1435 1459zM1475 1423L1473 1456L1435 1459zM1435 1459L1473 1456L1436 1484zM1473 1456L1463 1478L1436 1484zM1436 1484L1463 1478L1489 1527zM1467 1267L1512 1267L1480 1311zM1480 1311L1503 1346L1475 1339zM1475 1339L1517 1371L1469 1386zM1475 1423L1516 1404L1473 1456zM1473 1456L1512 1481L1463 1478zM1489 1527L1512 1561L1481 1561zM1516 1404L1550 1406L1546 1459zM1512 1481L1544 1521L1513 1512zM1553 1343L1587 1329L1551 1386zM1551 1386L1596 1391L1590 1408z"/>
<path fill="#1e393c" stroke="#1e393c" d="M1436 1484L1489 1527L1453 1518zM1489 1527L1481 1561L1437 1561zM1475 1339L1503 1346L1517 1371zM1469 1386L1517 1371L1475 1423zM1516 1404L1515 1441L1473 1456zM1463 1478L1512 1481L1513 1512zM1512 1267L1538 1301L1511 1298zM1517 1371L1550 1406L1516 1404zM1550 1406L1590 1408L1546 1459z"/>
<path fill="#1e393f" stroke="#1e393f" d="M1587 1329L1596 1391L1551 1386zM1551 1386L1590 1408L1550 1406zM1588 1295L1625 1307L1630 1334zM1607 1410L1608 1438L1593 1441zM1571 1533L1614 1561L1582 1561zM1668 1423L1662 1443L1608 1438zM1700 1341L1715 1349L1684 1390z"/>
<path fill="#21363c" stroke="#21363c" d="M1360 1472L1396 1496L1357 1511z"/>
<path fill="#21393c" stroke="#21393c" d="M1326 1422L1366 1427L1357 1449zM1452 1338L1469 1386L1429 1382zM1473 1456L1515 1441L1512 1481z"/>
<path fill="#21393f" stroke="#21393f" d="M1400 1460L1396 1496L1360 1472zM1400 1517L1437 1561L1407 1561zM1453 1518L1489 1527L1437 1561zM1512 1267L1511 1298L1480 1311zM1480 1311L1511 1298L1503 1346zM1517 1371L1516 1404L1475 1423zM1463 1478L1513 1512L1489 1527zM1489 1527L1513 1512L1512 1561zM1512 1267L1551 1267L1538 1301zM1511 1298L1538 1301L1503 1346zM1538 1301L1553 1343L1503 1346zM1553 1343L1551 1386L1517 1371zM1517 1371L1551 1386L1550 1406zM1516 1404L1546 1459L1515 1441zM1515 1441L1546 1459L1550 1493zM1515 1441L1550 1493L1512 1481zM1512 1481L1550 1493L1544 1521zM1513 1512L1544 1521L1561 1561zM1513 1512L1561 1561L1512 1561zM1551 1267L1593 1267L1538 1301zM1538 1301L1587 1329L1553 1343zM1590 1408L1593 1441L1546 1459zM1546 1459L1593 1441L1550 1493zM1593 1487L1571 1533L1544 1521zM1544 1521L1582 1561L1561 1561zM1588 1295L1630 1334L1587 1329zM1630 1334L1631 1374L1596 1391zM1590 1408L1607 1410L1593 1441zM1593 1441L1608 1438L1593 1487zM1608 1438L1623 1476L1593 1487zM1593 1487L1611 1516L1571 1533zM1667 1316L1669 1340L1630 1334zM1631 1374L1668 1423L1607 1410zM1607 1410L1668 1423L1608 1438zM1645 1498L1657 1525L1611 1516zM1684 1514L1704 1561L1666 1561z"/>
<path fill="#213c3f" stroke="#213c3f" d="M1503 1346L1553 1343L1517 1371zM1593 1267L1588 1295L1538 1301zM1538 1301L1588 1295L1587 1329zM1593 1441L1593 1487L1550 1493zM1550 1493L1593 1487L1544 1521zM1544 1521L1571 1533L1582 1561zM1593 1267L1629 1267L1588 1295zM1596 1391L1631 1374L1590 1408zM1631 1374L1607 1410L1590 1408zM1593 1487L1623 1476L1611 1516zM1571 1533L1611 1516L1614 1561zM1629 1267L1667 1267L1667 1316zM1629 1267L1667 1316L1625 1307zM1662 1443L1645 1498L1623 1476zM1623 1476L1645 1498L1611 1516zM1667 1267L1682 1267L1697 1305zM1667 1267L1697 1305L1667 1316zM1669 1340L1684 1390L1664 1372zM1664 1372L1684 1390L1668 1423zM1684 1390L1686 1421L1668 1423zM1668 1423L1686 1421L1701 1443zM1668 1423L1701 1443L1662 1443zM1662 1443L1701 1443L1645 1498zM1645 1498L1697 1483L1657 1525zM1697 1483L1684 1514L1657 1525zM1657 1525L1684 1514L1666 1561zM1724 1267L1728 1306L1697 1305zM1715 1349L1735 1388L1684 1390zM1684 1390L1735 1388L1724 1406zM1686 1421L1724 1406L1701 1443zM1724 1406L1724 1456L1701 1443zM1732 1483L1729 1513L1684 1514zM1684 1514L1729 1513L1739 1561zM1763 1267L1764 1314L1728 1306zM1715 1349L1760 1387L1735 1388zM1763 1267L1808 1267L1764 1314zM1756 1348L1803 1368L1760 1387zM1760 1387L1803 1368L1808 1408zM1756 1520L1798 1527L1750 1561z"/>
<path fill="#213c42" stroke="#213c42" d="M1629 1267L1625 1307L1588 1295zM1587 1329L1630 1334L1596 1391zM1625 1307L1667 1316L1630 1334zM1630 1334L1669 1340L1664 1372zM1608 1438L1662 1443L1623 1476zM1697 1305L1700 1341L1669 1340zM1701 1443L1697 1483L1645 1498zM1684 1390L1724 1406L1686 1421zM1701 1443L1732 1483L1697 1483zM1724 1267L1763 1267L1728 1306zM1728 1306L1764 1314L1756 1348zM1715 1349L1756 1348L1760 1387zM1724 1406L1753 1408L1724 1456zM1753 1408L1768 1450L1724 1456zM1724 1456L1768 1450L1732 1483zM1732 1483L1761 1488L1756 1520zM1729 1513L1756 1520L1750 1561zM1729 1513L1750 1561L1739 1561zM1764 1314L1801 1345L1756 1348zM1756 1348L1801 1345L1803 1368zM1753 1408L1808 1408L1810 1458zM1753 1408L1810 1458L1768 1450zM1768 1450L1810 1458L1761 1488zM1810 1458L1805 1495L1761 1488zM1761 1488L1805 1495L1756 1520zM1798 1527L1812 1561L1750 1561zM1808 1267L1825 1304L1793 1315zM1793 1315L1825 1304L1801 1345zM1833 1404L1827 1452L1810 1458zM1798 1527L1837 1520L1836 1561zM1798 1527L1836 1561L1812 1561zM1825 1304L1864 1329L1836 1332zM1836 1332L1879 1380L1828 1388zM1907 1267L1937 1267L1896 1310z"/>
<path fill="#213f42" stroke="#213f42" d="M1764 1314L1793 1315L1801 1345zM1760 1387L1808 1408L1753 1408zM1808 1267L1827 1267L1825 1304zM1805 1495L1828 1485L1798 1527zM1827 1267L1859 1318L1825 1304zM1880 1445L1878 1479L1828 1485zM1828 1485L1878 1479L1874 1526zM1881 1267L1907 1267L1896 1310zM1859 1318L1896 1310L1864 1329zM1879 1380L1897 1423L1873 1406zM1873 1406L1918 1438L1880 1445zM1896 1310L1940 1350L1913 1333zM1901 1511L1958 1514L1908 1561zM1937 1267L1978 1318L1939 1305zM1940 1350L1968 1390L1950 1367zM1968 1390L2026 1403L1980 1412zM1978 1457L2029 1473L1989 1485z"/>
<path fill="#213f45" stroke="#213f45" d="M2051 1267L2082 1267L2096 1301z"/>
<path fill="#243c42" stroke="#243c42" d="M1630 1334L1664 1372L1631 1374zM1631 1374L1664 1372L1668 1423zM1611 1516L1657 1525L1666 1561zM1611 1516L1666 1561L1614 1561zM1667 1316L1697 1305L1669 1340zM1669 1340L1700 1341L1684 1390zM1697 1305L1715 1349L1700 1341zM1697 1483L1732 1483L1684 1514z"/>
<path fill="#243f42" stroke="#243f42" d="M1682 1267L1724 1267L1697 1305zM1697 1305L1728 1306L1715 1349zM1701 1443L1724 1456L1732 1483zM1684 1514L1739 1561L1704 1561zM1728 1306L1756 1348L1715 1349zM1735 1388L1760 1387L1724 1406zM1760 1387L1753 1408L1724 1406zM1732 1483L1756 1520L1729 1513zM1808 1267L1793 1315L1764 1314zM1825 1304L1836 1332L1801 1345zM1801 1345L1836 1332L1803 1368zM1836 1332L1828 1388L1803 1368zM1803 1368L1833 1404L1808 1408zM1827 1267L1881 1267L1859 1318zM1836 1332L1864 1329L1879 1380zM1828 1388L1879 1380L1873 1406zM1833 1404L1873 1406L1827 1452zM1873 1406L1880 1445L1827 1452zM1828 1485L1874 1526L1837 1520zM1837 1520L1874 1526L1836 1561zM1874 1526L1868 1561L1836 1561zM1896 1310L1913 1333L1864 1329zM1879 1380L1909 1384L1897 1423zM1878 1479L1901 1475L1901 1511zM1878 1479L1901 1511L1874 1526zM1874 1526L1901 1511L1868 1561zM1901 1475L1949 1494L1901 1511zM1958 1514L1931 1561L1908 1561z"/>
<path fill="#243f45" stroke="#243f45" d="M1768 1450L1761 1488L1732 1483zM1805 1495L1798 1527L1756 1520zM1808 1408L1833 1404L1810 1458zM1810 1458L1827 1452L1805 1495zM1827 1452L1828 1485L1805 1495zM1828 1485L1837 1520L1798 1527zM1825 1304L1859 1318L1864 1329zM1828 1388L1873 1406L1833 1404zM1827 1452L1880 1445L1828 1485zM1864 1329L1913 1333L1909 1384zM1864 1329L1909 1384L1879 1380zM1918 1438L1901 1475L1878 1479zM1901 1511L1908 1561L1868 1561zM1937 1267L1939 1305L1896 1310zM1896 1310L1939 1305L1940 1350zM1913 1333L1940 1350L1909 1384zM1897 1423L1936 1401L1918 1438zM1936 1401L1939 1439L1918 1438zM1918 1438L1949 1494L1901 1475zM1950 1367L1980 1412L1936 1401zM1939 1439L1978 1457L1949 1494zM1987 1267L2013 1267L2020 1308zM1980 1412L2012 1460L1978 1457zM1989 1485L2019 1526L1971 1519z"/>
<path fill="#244245" stroke="#244245" d="M1881 1267L1896 1310L1859 1318zM1880 1445L1918 1438L1878 1479zM1950 1367L1936 1401L1897 1423zM1918 1438L1939 1439L1949 1494zM1949 1494L1958 1514L1901 1511zM1939 1305L1978 1318L1977 1337zM1939 1305L1977 1337L1940 1350zM1940 1350L1977 1337L1968 1390zM1950 1367L1968 1390L1980 1412zM1936 1401L1978 1457L1939 1439zM1978 1457L1989 1485L1949 1494zM1949 1494L1989 1485L1971 1519zM1949 1494L1971 1519L1958 1514zM1958 1514L1971 1519L1931 1561zM1971 1519L1991 1561L1931 1561zM1987 1267L2020 1308L1978 1318zM2015 1344L2009 1380L1968 1390zM1968 1390L2009 1380L2026 1403zM1980 1412L2026 1403L2012 1460zM1978 1457L2012 1460L2029 1473zM1989 1485L2029 1473L2019 1526zM1971 1519L2019 1526L2025 1561zM1971 1519L2025 1561L1991 1561zM2013 1267L2051 1267L2042 1301zM2020 1308L2042 1301L2058 1348zM2020 1308L2058 1348L2015 1344zM2015 1344L2058 1348L2009 1380zM2058 1348L2044 1382L2009 1380zM2009 1380L2056 1418L2026 1403zM2012 1460L2039 1448L2029 1473zM2047 1489L2048 1512L2019 1526zM2019 1526L2048 1512L2025 1561zM2048 1512L2057 1561L2025 1561zM2042 1301L2096 1301L2058 1348zM2058 1348L2089 1350L2044 1382zM2089 1350L2077 1384L2044 1382zM2056 1418L2075 1456L2039 1448zM2096 1301L2125 1301L2137 1339zM2089 1350L2137 1339L2077 1384zM2077 1384L2122 1371L2076 1426zM2084 1477L2121 1493L2118 1511zM2084 1477L2118 1511L2085 1522zM2121 1493L2153 1488L2158 1509zM2158 1509L2158 1561L2111 1561zM2239 1475L2244 1519L2183 1512z"/>
<path fill="#244248" stroke="#244248" d="M2056 1418L2076 1426L2075 1456zM2076 1426L2137 1409L2128 1459zM2085 1522L2118 1511L2086 1561zM2118 1511L2111 1561L2086 1561zM2122 1371L2154 1368L2137 1409zM2137 1409L2172 1461L2128 1459z"/>
<path fill="#244548" stroke="#244548" d="M2075 1456L2128 1459L2084 1477zM2114 1267L2159 1267L2125 1301zM2159 1267L2170 1298L2125 1301zM2125 1301L2158 1349L2137 1339zM2137 1339L2158 1349L2154 1368zM2137 1409L2161 1412L2172 1461zM2128 1459L2172 1461L2121 1493zM2172 1461L2153 1488L2121 1493zM2118 1511L2158 1509L2111 1561zM2154 1368L2191 1420L2161 1412zM2161 1412L2183 1447L2172 1461zM2158 1509L2183 1512L2188 1561zM2158 1509L2188 1561L2158 1561zM2221 1267L2221 1298L2191 1308zM2191 1308L2221 1298L2232 1332zM2232 1332L2241 1376L2208 1367zM2232 1332L2274 1372L2241 1376zM2225 1407L2266 1444L2241 1438zM2268 1405L2301 1412L2266 1444zM2293 1342L2354 1346L2304 1384z"/>
<path fill="#274245" stroke="#274245" d="M1803 1368L1828 1388L1833 1404zM1873 1406L1897 1423L1918 1438zM1909 1384L1950 1367L1897 1423zM1937 1267L1987 1267L1978 1318zM1978 1318L2020 1308L2015 1344z"/>
<path fill="#274248" stroke="#274248" d="M1940 1350L1950 1367L1909 1384zM1936 1401L1980 1412L1978 1457zM1978 1318L2015 1344L1977 1337zM2009 1380L2044 1382L2056 1418zM2039 1448L2047 1489L2029 1473zM2029 1473L2047 1489L2019 1526z"/>
<path fill="#274548" stroke="#274548" d="M1977 1337L2015 1344L1968 1390zM2013 1267L2042 1301L2020 1308zM2026 1403L2056 1418L2039 1448zM2026 1403L2039 1448L2012 1460zM2051 1267L2096 1301L2042 1301zM2096 1301L2089 1350L2058 1348zM2044 1382L2077 1384L2056 1418zM2077 1384L2076 1426L2056 1418zM2039 1448L2075 1456L2084 1477zM2039 1448L2084 1477L2047 1489zM2047 1489L2084 1477L2085 1522zM2047 1489L2085 1522L2048 1512zM2048 1512L2085 1522L2057 1561zM2085 1522L2086 1561L2057 1561zM2082 1267L2114 1267L2096 1301zM2114 1267L2125 1301L2096 1301zM2096 1301L2137 1339L2089 1350zM2137 1339L2122 1371L2077 1384zM2122 1371L2137 1409L2076 1426zM2076 1426L2128 1459L2075 1456zM2128 1459L2121 1493L2084 1477zM2125 1301L2170 1298L2158 1349zM2137 1339L2154 1368L2122 1371zM2154 1368L2161 1412L2137 1409zM2121 1493L2158 1509L2118 1511zM2159 1267L2207 1267L2191 1308zM2159 1267L2191 1308L2170 1298zM2170 1298L2191 1308L2158 1349zM2191 1308L2202 1330L2158 1349zM2158 1349L2202 1330L2208 1367zM2158 1349L2208 1367L2154 1368zM2154 1368L2208 1367L2191 1420zM2161 1412L2191 1420L2183 1447zM2172 1461L2183 1447L2186 1485zM2172 1461L2186 1485L2153 1488zM2153 1488L2186 1485L2158 1509zM2186 1485L2183 1512L2158 1509zM2207 1267L2221 1267L2191 1308zM2191 1308L2232 1332L2202 1330zM2202 1330L2232 1332L2208 1367zM2208 1367L2241 1376L2191 1420zM2241 1376L2225 1407L2191 1420zM2191 1420L2241 1438L2183 1447zM2183 1447L2241 1438L2239 1475zM2183 1447L2239 1475L2186 1485zM2186 1485L2239 1475L2183 1512zM2183 1512L2244 1519L2235 1561zM2183 1512L2235 1561L2188 1561zM2221 1267L2278 1267L2221 1298zM2221 1298L2273 1344L2232 1332zM2232 1332L2273 1344L2274 1372zM2274 1372L2268 1405L2225 1407zM2241 1438L2266 1444L2239 1475zM2266 1444L2270 1481L2239 1475zM2244 1519L2257 1561L2235 1561zM2273 1344L2293 1342L2304 1384zM2273 1344L2304 1384L2274 1372zM2301 1412L2315 1444L2266 1444zM2266 1444L2315 1444L2270 1481zM2270 1481L2317 1497L2262 1526zM2301 1412L2328 1424L2331 1443zM2339 1528L2329 1561L2297 1561zM2328 1424L2374 1447L2331 1443z"/>
<path fill="#27454b" stroke="#27454b" d="M2317 1534L2339 1528L2297 1561zM2380 1519L2378 1561L2329 1561zM2374 1447L2424 1495L2381 1493zM2479 1316L2479 1336L2456 1351z"/>
<path fill="#27454e" stroke="#27454e" d="M2479 1316L2509 1312L2479 1336z"/>
<path fill="#27484b" stroke="#27484b" d="M2191 1420L2225 1407L2241 1438zM2244 1519L2262 1526L2257 1561zM2262 1526L2317 1534L2297 1561zM2354 1346L2348 1380L2304 1384zM2304 1384L2348 1380L2301 1412zM2348 1380L2328 1424L2301 1412zM2315 1444L2331 1443L2317 1497zM2317 1497L2343 1478L2339 1528zM2317 1497L2339 1528L2317 1534zM2354 1346L2363 1370L2348 1380zM2348 1380L2363 1370L2328 1424zM2363 1370L2389 1411L2328 1424zM2331 1443L2374 1447L2343 1478zM2339 1528L2380 1519L2329 1561zM2363 1370L2425 1377L2389 1411zM2425 1377L2421 1407L2389 1411zM2421 1407L2419 1456L2374 1447zM2374 1447L2419 1456L2424 1495zM2424 1495L2422 1516L2380 1519zM2380 1519L2422 1516L2378 1561zM2422 1516L2420 1561L2378 1561zM2456 1351L2457 1383L2425 1377zM2422 1516L2439 1528L2440 1561zM2422 1516L2440 1561L2420 1561zM2456 1351L2481 1365L2457 1383zM2457 1383L2482 1411L2439 1405zM2450 1442L2481 1472L2444 1475zM2444 1475L2481 1472L2497 1515zM2439 1528L2497 1515L2477 1561zM2439 1528L2477 1561L2440 1561zM2522 1342L2547 1343L2550 1375zM2513 1372L2550 1375L2548 1420zM2510 1496L2568 1531L2507 1528zM2568 1531L2558 1561L2528 1561zM2547 1343L2595 1374L2550 1375z"/>
<path fill="#2a454e" stroke="#2a454e" d="M2365 1305L2380 1347L2354 1346zM2509 1312L2557 1315L2522 1342z"/>
<path fill="#2a484b" stroke="#2a484b" d="M2241 1376L2274 1372L2225 1407zM2225 1407L2268 1405L2266 1444zM2239 1475L2270 1481L2244 1519zM2270 1481L2262 1526L2244 1519zM2274 1372L2304 1384L2268 1405zM2304 1384L2301 1412L2268 1405zM2315 1444L2317 1497L2270 1481zM2317 1497L2317 1534L2262 1526zM2262 1526L2297 1561L2257 1561zM2301 1412L2331 1443L2315 1444zM2331 1443L2343 1478L2317 1497zM2354 1346L2380 1347L2363 1370zM2328 1424L2389 1411L2374 1447zM2374 1447L2381 1493L2343 1478zM2343 1478L2381 1493L2380 1519zM2389 1411L2421 1407L2374 1447zM2425 1377L2457 1383L2421 1407zM2439 1405L2450 1442L2419 1456zM2419 1456L2450 1442L2444 1475zM2424 1495L2444 1475L2422 1516zM2457 1383L2481 1365L2482 1411zM2439 1405L2482 1411L2450 1442zM2479 1336L2513 1372L2481 1365zM2481 1365L2533 1411L2482 1411zM2533 1411L2533 1461L2471 1460zM2497 1515L2507 1528L2528 1561zM2522 1342L2550 1375L2513 1372zM2533 1411L2548 1420L2558 1458zM2533 1461L2558 1458L2510 1496zM2558 1458L2560 1489L2510 1496zM2510 1496L2560 1489L2568 1531zM2548 1420L2595 1445L2558 1458z"/>
<path fill="#2a484e" stroke="#2a484e" d="M2365 1305L2425 1350L2380 1347zM2443 1302L2479 1316L2456 1351z"/>
<path fill="#2a4851" stroke="#2a4851" d="M2507 1267L2557 1315L2509 1312z"/>
<path fill="#2a4b4b" stroke="#2a4b4b" d="M2381 1493L2424 1495L2380 1519z"/>
<path fill="#2a4b4e" stroke="#2a4b4e" d="M2343 1478L2380 1519L2339 1528zM2380 1347L2425 1377L2363 1370zM2457 1383L2439 1405L2421 1407zM2421 1407L2439 1405L2419 1456zM2419 1456L2444 1475L2424 1495zM2444 1475L2439 1528L2422 1516zM2444 1475L2497 1515L2439 1528zM2479 1336L2522 1342L2513 1372zM2481 1365L2513 1372L2533 1411zM2482 1411L2533 1411L2471 1460zM2471 1460L2533 1461L2481 1472zM2533 1461L2510 1496L2481 1472zM2481 1472L2510 1496L2497 1515zM2510 1496L2507 1528L2497 1515zM2497 1515L2528 1561L2477 1561zM2513 1372L2548 1420L2533 1411zM2533 1411L2558 1458L2533 1461zM2507 1528L2568 1531L2528 1561zM2550 1375L2595 1374L2548 1420z"/>
<path fill="#2d4851" stroke="#2d4851" d="M2257 1294L2304 1299L2273 1344zM2304 1299L2293 1342L2273 1344zM2365 1305L2403 1318L2425 1350zM2403 1318L2443 1302L2456 1351zM2557 1315L2547 1343L2522 1342zM2595 1301L2595 1354L2547 1343z"/>
<path fill="#2d4b4e" stroke="#2d4b4e" d="M2482 1411L2471 1460L2450 1442zM2450 1442L2471 1460L2481 1472z"/>
<path fill="#2d4b51" stroke="#2d4b51" d="M2221 1298L2257 1294L2273 1344zM2304 1299L2354 1346L2293 1342zM2380 1267L2403 1318L2365 1305zM2507 1267L2509 1312L2479 1316zM2509 1312L2522 1342L2479 1336z"/>
<path fill="#2d4e51" stroke="#2d4e51" d="M2380 1347L2425 1350L2425 1377zM2425 1350L2456 1351L2425 1377zM2456 1351L2479 1336L2481 1365z"/>
<path fill="#2d4e54" stroke="#2d4e54" d="M2403 1318L2456 1351L2425 1350zM2548 1420L2595 1403L2595 1445zM2558 1458L2595 1445L2595 1492zM2558 1458L2595 1492L2560 1489zM2560 1489L2595 1492L2595 1534zM2568 1531L2595 1534L2558 1561zM2595 1534L2595 1561L2558 1561z"/>
<path fill="#304b54" stroke="#304b54" d="M2380 1267L2412 1267L2403 1318zM2557 1315L2595 1301L2547 1343z"/>
<path fill="#304e54" stroke="#304e54" d="M2312 1267L2304 1299L2257 1294zM2312 1267L2349 1267L2304 1299zM2349 1267L2343 1298L2304 1299zM2304 1299L2343 1298L2354 1346zM2343 1298L2365 1305L2354 1346zM2447 1267L2443 1302L2403 1318zM2494 1267L2479 1316L2443 1302z"/>
<path fill="#304e57" stroke="#304e57" d="M2278 1267L2257 1294L2221 1298zM2278 1267L2312 1267L2257 1294zM2561 1267L2595 1267L2557 1315zM2595 1267L2595 1301L2557 1315z"/>
<path fill="#305154" stroke="#305154" d="M2560 1489L2595 1534L2568 1531z"/>
<path fill="#305157" stroke="#305157" d="M2547 1343L2595 1354L2595 1374zM2595 1374L2595 1403L2548 1420z"/>
<path fill="#335157" stroke="#335157" d="M2349 1267L2365 1305L2343 1298zM2494 1267L2507 1267L2479 1316zM2507 1267L2561 1267L2557 1315z"/>
<path fill="#36515a" stroke="#36515a" d="M2349 1267L2380 1267L2365 1305zM2412 1267L2447 1267L2403 1318zM2447 1267L2494 1267L2443 1302z"/>
<g clip-path="url(#cr)">
<path fill="#274548" stroke="#274548" d="M2308 1334L2325 1333L2326 1355z"/>
<path fill="#27454b" stroke="#27454b" d="M2381 1298L2379 1318L2367 1321zM2471 1319L2463 1330L2444 1337zM2549 1311L2571 1330L2554 1336z"/>
<path fill="#27454e" stroke="#27454e" d="M2344 1295L2368 1302L2346 1315zM2449 1321L2444 1337L2437 1337z"/>
<path fill="#27484b" stroke="#27484b" d="M2293 1329L2308 1334L2293 1355zM2308 1334L2316 1349L2293 1355zM2308 1334L2326 1355L2316 1349zM2350 1326L2350 1348L2326 1355z"/>
<path fill="#2a454e" stroke="#2a454e" d="M2334 1319L2350 1326L2325 1333zM2368 1302L2367 1321L2346 1315zM2421 1309L2412 1335L2397 1334z"/>
<path fill="#2a484e" stroke="#2a484e" d="M2308 1311L2308 1334L2293 1329zM2308 1311L2325 1333L2308 1334zM2325 1333L2350 1326L2326 1355zM2404 1304L2400 1310L2379 1318zM2379 1318L2397 1334L2381 1336zM2400 1310L2421 1309L2397 1334zM2429 1318L2449 1321L2437 1337zM2471 1319L2486 1319L2480 1334zM2513 1315L2516 1336L2501 1331zM2513 1315L2533 1320L2516 1336zM2533 1320L2536 1328L2516 1336zM2516 1336L2532 1350L2523 1350zM2533 1320L2549 1311L2554 1336zM2533 1320L2554 1336L2536 1328z"/>
<path fill="#2a4851" stroke="#2a4851" d="M2308 1311L2334 1319L2325 1333zM2494 1320L2513 1315L2501 1331zM2534 1298L2533 1320L2513 1315z"/>
<path fill="#2a4b4e" stroke="#2a4b4e" d="M2350 1326L2362 1355L2350 1348zM2501 1331L2523 1350L2498 1356zM2536 1328L2554 1336L2547 1357zM2554 1336L2571 1330L2547 1357zM2571 1330L2571 1355L2547 1357z"/>
<path fill="#2a4b51" stroke="#2a4b51" d="M2444 1337L2463 1330L2464 1350zM2480 1334L2481 1356L2464 1350z"/>
<path fill="#2d4851" stroke="#2d4851" d="M2367 1321L2379 1318L2381 1336zM2367 1321L2381 1336L2368 1330zM2438 1293L2446 1295L2449 1321zM2446 1295L2471 1319L2449 1321zM2486 1319L2494 1320L2501 1331z"/>
<path fill="#2d4b4e" stroke="#2d4b4e" d="M2536 1328L2547 1357L2532 1350z"/>
<path fill="#2d4b51" stroke="#2d4b51" d="M2379 1318L2400 1310L2397 1334zM2414 1293L2438 1293L2429 1318zM2421 1309L2429 1318L2437 1337zM2421 1309L2437 1337L2412 1335zM2438 1293L2449 1321L2429 1318zM2449 1321L2471 1319L2444 1337zM2472 1296L2489 1301L2486 1319zM2472 1296L2486 1319L2471 1319zM2489 1301L2502 1300L2486 1319zM2502 1300L2494 1320L2486 1319zM2501 1331L2498 1356L2481 1356zM2511 1301L2513 1315L2494 1320zM2511 1301L2534 1298L2513 1315zM2534 1298L2555 1302L2549 1311zM2555 1302L2571 1312L2549 1311zM2549 1311L2571 1312L2571 1330z"/>
<path fill="#2d4b54" stroke="#2d4b54" d="M2343 1265L2342 1283L2332 1280zM2333 1295L2344 1295L2334 1319zM2360 1277L2381 1298L2368 1302zM2414 1293L2421 1309L2400 1310zM2460 1267L2467 1286L2453 1279zM2460 1267L2488 1285L2467 1286zM2467 1286L2488 1285L2489 1301z"/>
<path fill="#2d4e51" stroke="#2d4e51" d="M2350 1326L2368 1330L2362 1355zM2368 1330L2381 1336L2362 1355zM2501 1331L2516 1336L2523 1350zM2516 1336L2536 1328L2532 1350z"/>
<path fill="#2d4e54" stroke="#2d4e54" d="M2381 1336L2376 1346L2362 1355zM2381 1336L2397 1334L2376 1346zM2397 1334L2395 1346L2376 1346zM2397 1334L2412 1335L2410 1347zM2397 1334L2410 1347L2395 1346zM2412 1335L2437 1337L2432 1358zM2437 1337L2447 1348L2432 1358zM2444 1337L2464 1350L2447 1348z"/>
<path fill="#304b54" stroke="#304b54" d="M2293 1292L2310 1292L2293 1312zM2293 1312L2308 1311L2293 1329zM2334 1319L2346 1315L2350 1326zM2396 1280L2404 1304L2381 1298zM2381 1298L2404 1304L2379 1318zM2404 1304L2414 1293L2400 1310zM2414 1293L2429 1318L2421 1309zM2513 1275L2534 1298L2511 1301z"/>
<path fill="#304e54" stroke="#304e54" d="M2293 1260L2312 1281L2293 1284zM2333 1295L2334 1319L2308 1311zM2344 1295L2346 1315L2334 1319zM2346 1315L2367 1321L2368 1330zM2377 1276L2396 1280L2381 1298zM2401 1267L2414 1276L2396 1280zM2414 1276L2438 1293L2414 1293zM2427 1278L2453 1279L2446 1295zM2427 1278L2446 1295L2438 1293zM2453 1279L2472 1296L2446 1295zM2446 1295L2472 1296L2471 1319zM2471 1319L2480 1334L2463 1330zM2506 1284L2502 1300L2489 1301zM2486 1319L2501 1331L2480 1334zM2480 1334L2501 1331L2481 1356zM2506 1284L2513 1275L2502 1300zM2513 1275L2535 1285L2534 1298zM2535 1285L2546 1281L2555 1302zM2546 1281L2571 1287L2571 1294zM2546 1281L2571 1294L2555 1302zM2555 1302L2571 1294L2571 1312z"/>
<path fill="#304e57" stroke="#304e57" d="M2431 1262L2427 1278L2414 1276zM2504 1251L2511 1268L2505 1259zM2502 1300L2511 1301L2494 1320zM2535 1259L2554 1263L2546 1281zM2535 1259L2546 1281L2535 1285zM2535 1285L2555 1302L2534 1298z"/>
<path fill="#305154" stroke="#305154" d="M2412 1335L2432 1358L2410 1347zM2437 1337L2444 1337L2447 1348zM2463 1330L2480 1334L2464 1350z"/>
<path fill="#334e57" stroke="#334e57" d="M2312 1281L2310 1292L2293 1292zM2310 1292L2308 1311L2293 1312zM2324 1260L2332 1280L2312 1281zM2310 1292L2333 1295L2308 1311zM2342 1283L2344 1295L2333 1295zM2368 1302L2381 1298L2367 1321zM2414 1276L2427 1278L2438 1293zM2534 1298L2549 1311L2533 1320z"/>
<path fill="#335157" stroke="#335157" d="M2293 1260L2313 1262L2312 1281zM2312 1281L2332 1280L2333 1295zM2324 1260L2343 1265L2332 1280zM2332 1280L2342 1283L2333 1295zM2342 1283L2360 1277L2368 1302zM2346 1315L2368 1330L2350 1326zM2360 1277L2377 1276L2381 1298zM2396 1247L2418 1267L2401 1267zM2401 1267L2418 1267L2414 1276zM2396 1280L2414 1276L2414 1293zM2396 1280L2414 1293L2404 1304zM2418 1267L2431 1262L2414 1276zM2431 1262L2453 1279L2427 1278zM2455 1259L2460 1267L2453 1279zM2453 1279L2467 1286L2472 1296zM2488 1229L2485 1252L2471 1248zM2460 1267L2486 1261L2488 1285zM2467 1286L2489 1301L2472 1296zM2486 1261L2506 1284L2488 1285zM2488 1285L2506 1284L2489 1301zM2505 1259L2511 1268L2506 1284zM2513 1275L2511 1301L2502 1300zM2571 1267L2571 1287L2546 1281z"/>
<path fill="#33515a" stroke="#33515a" d="M2308 1245L2313 1262L2293 1260zM2343 1265L2360 1277L2342 1283zM2386 1264L2401 1267L2377 1276zM2444 1243L2460 1267L2455 1259zM2485 1252L2486 1261L2460 1267zM2511 1268L2535 1259L2513 1275z"/>
<path fill="#36515a" stroke="#36515a" d="M2312 1281L2333 1295L2310 1292zM2342 1283L2368 1302L2344 1295zM2554 1263L2571 1267L2546 1281z"/>
<path fill="#36545a" stroke="#36545a" d="M2293 1241L2308 1245L2293 1260zM2313 1262L2324 1260L2312 1281zM2365 1235L2360 1245L2348 1242zM2348 1242L2360 1245L2366 1261zM2360 1245L2376 1253L2366 1261zM2366 1261L2386 1264L2377 1276zM2366 1261L2377 1276L2360 1277zM2401 1267L2396 1280L2377 1276zM2396 1247L2412 1241L2418 1267zM2412 1241L2431 1262L2418 1267zM2428 1250L2444 1243L2455 1259zM2504 1228L2504 1251L2485 1252z"/>
<path fill="#36545d" stroke="#36545d" d="M2376 1253L2386 1264L2366 1261zM2376 1253L2396 1247L2386 1264zM2396 1247L2401 1267L2386 1264zM2486 1261L2505 1259L2506 1284z"/>
<path fill="#39575a" stroke="#39575a" d="M2342 1232L2348 1242L2336 1248zM2436 1226L2428 1250L2412 1241zM2436 1226L2444 1243L2428 1250z"/>
<path fill="#39575d" stroke="#39575d" d="M2293 1284L2312 1281L2293 1292zM2308 1245L2336 1248L2313 1262zM2336 1248L2324 1260L2313 1262zM2336 1248L2348 1242L2324 1260zM2348 1242L2343 1265L2324 1260zM2348 1242L2366 1261L2343 1265zM2343 1265L2366 1261L2360 1277zM2375 1230L2376 1253L2360 1245zM2400 1226L2396 1247L2376 1253zM2415 1232L2412 1241L2396 1247zM2412 1241L2428 1250L2431 1262zM2428 1250L2455 1259L2431 1262zM2504 1251L2512 1245L2511 1268zM2511 1268L2513 1275L2506 1284zM2532 1252L2535 1259L2511 1268zM2535 1259L2535 1285L2513 1275z"/>
<path fill="#395760" stroke="#395760" d="M2512 1245L2532 1252L2511 1268z"/>
<path fill="#3c5760" stroke="#3c5760" d="M2431 1262L2455 1259L2453 1279z"/>
<path fill="#3c5a5d" stroke="#3c5a5d" d="M2319 1236L2330 1226L2308 1245zM2351 1210L2342 1232L2330 1226zM2400 1226L2415 1232L2396 1247zM2488 1229L2504 1228L2485 1252z"/>
<path fill="#3c5a60" stroke="#3c5a60" d="M2465 1234L2471 1248L2444 1243z"/>
<path fill="#3f5d5d" stroke="#3f5d5d" d="M2382 1208L2400 1226L2375 1230z"/>
<path fill="#3f5d60" stroke="#3f5d60" d="M2293 1224L2319 1236L2293 1241zM2319 1236L2308 1245L2293 1241zM2333 1211L2330 1226L2319 1236zM2330 1226L2336 1248L2308 1245zM2330 1226L2342 1232L2336 1248zM2342 1232L2365 1235L2348 1242zM2465 1234L2488 1229L2471 1248z"/>
<path fill="#426060" stroke="#426060" d="M2293 1193L2319 1193L2307 1208zM2293 1210L2307 1208L2293 1224zM2307 1208L2319 1236L2293 1224zM2307 1208L2333 1211L2319 1236zM2361 1193L2366 1215L2351 1210zM2366 1215L2382 1208L2375 1230z"/>
<path fill="#426063" stroke="#426063" d="M2452 1233L2465 1234L2444 1243z"/>
<path fill="#486663" stroke="#486663" d="M2319 1193L2334 1193L2333 1211z"/>
<path fill="#486666" stroke="#486666" d="M2293 1193L2307 1208L2293 1210zM2319 1193L2333 1211L2307 1208z"/>
<path fill="#638484" stroke="#638484" d="M2485 1252L2504 1251L2486 1261z"/>
<path fill="#668787" stroke="#668787" d="M2504 1251L2505 1259L2486 1261z"/>
<path fill="#698a8a" stroke="#698a8a" d="M2444 1243L2471 1248L2460 1267z"/>
<path fill="#6c8d8d" stroke="#6c8d8d" d="M2471 1248L2485 1252L2460 1267z"/>
<path fill="#789699" stroke="#789699" d="M2375 1230L2400 1226L2376 1253z"/>
<path fill="#7b9699" stroke="#7b9699" d="M2351 1210L2365 1235L2342 1232z"/>
<path fill="#7b9999" stroke="#7b9999" d="M2365 1235L2375 1230L2360 1245z"/>
<path fill="#7e999c" stroke="#7e999c" d="M2333 1211L2351 1210L2330 1226zM2366 1215L2375 1230L2365 1235z"/>
<path fill="#819f9f" stroke="#819f9f" d="M2351 1210L2366 1215L2365 1235z"/>
</g>
<g clip-path="url(#cl)">
<rect x="0" y="950" width="704" height="330" fill="#25414b" stroke="none"/>
<path fill="#12212a" stroke="#12212a" d="M295 1290L312 1294L303 1314zM356 1257L351 1279L336 1275zM336 1275L359 1300L341 1297zM341 1297L359 1300L336 1309zM356 1257L375 1281L351 1279zM375 1281L394 1282L387 1301zM368 1299L391 1321L369 1316zM430 1299L436 1313L424 1312zM475 1255L488 1265L496 1282z"/>
<path fill="#12242a" stroke="#12242a" d="M223 1300L227 1316L207 1312zM237 1294L238 1313L227 1316zM237 1294L252 1320L238 1313zM249 1299L275 1295L268 1321zM249 1299L268 1321L252 1320zM295 1290L295 1311L268 1321zM306 1284L312 1294L295 1290zM306 1284L327 1275L312 1294zM312 1294L324 1293L303 1314zM324 1293L326 1311L303 1314zM336 1275L341 1297L324 1293zM324 1293L341 1297L336 1309zM324 1293L336 1309L326 1311zM336 1275L351 1279L359 1300zM359 1300L352 1317L336 1309zM351 1279L375 1281L368 1299zM351 1279L368 1299L359 1300zM368 1299L369 1316L352 1317zM379 1255L396 1267L394 1282zM379 1255L394 1282L375 1281zM394 1282L407 1282L405 1301zM394 1282L405 1301L387 1301zM387 1301L409 1313L391 1321zM414 1263L422 1256L407 1282zM422 1256L420 1280L407 1282zM407 1282L420 1280L430 1299zM407 1282L430 1299L405 1301zM405 1301L430 1299L424 1312zM405 1301L424 1312L409 1313zM420 1250L442 1264L422 1256zM422 1256L442 1264L441 1274zM420 1280L437 1292L430 1299zM430 1299L437 1292L436 1313zM446 1247L458 1247L442 1264zM458 1247L460 1259L442 1264zM441 1274L455 1280L454 1300zM441 1274L454 1300L437 1292zM460 1259L475 1255L455 1280zM454 1300L479 1293L474 1321zM472 1242L488 1246L488 1265zM472 1242L488 1265L475 1255zM479 1293L492 1314L474 1321zM488 1246L514 1240L488 1265zM495 1293L506 1293L492 1314zM506 1293L506 1321L492 1314zM546 1243L559 1241L547 1256zM583 1231L582 1240L559 1241zM582 1240L593 1261L580 1261z"/>
<path fill="#12242d" stroke="#12242d" d="M22 1293L34 1296L31 1309zM437 1292L454 1309L436 1313zM472 1242L475 1255L460 1259zM475 1255L473 1275L455 1280zM454 1300L474 1321L454 1309zM479 1293L495 1293L492 1314zM514 1240L506 1258L488 1265zM514 1240L531 1247L506 1258zM532 1263L529 1277L508 1278zM508 1278L529 1277L525 1297zM506 1293L525 1297L506 1321zM555 1281L558 1292L538 1292zM583 1231L593 1249L582 1240zM595 1281L591 1294L583 1296zM591 1294L594 1316L575 1312zM608 1263L624 1267L611 1281zM650 1284L650 1296L624 1289zM650 1296L643 1309L632 1312z"/>
<path fill="#12272d" stroke="#12272d" d="M507 1230L531 1247L514 1240zM686 1283L701 1272L680 1296z"/>
<path fill="#15242d" stroke="#15242d" d="M237 1294L249 1299L252 1320zM275 1295L295 1290L268 1321zM327 1275L324 1293L312 1294zM359 1300L368 1299L352 1317zM375 1281L387 1301L368 1299zM368 1299L387 1301L391 1321zM396 1267L407 1282L394 1282zM387 1301L405 1301L409 1313zM422 1256L441 1274L420 1280zM442 1264L460 1259L441 1274zM460 1259L455 1280L441 1274zM437 1292L454 1300L454 1309zM455 1280L473 1275L479 1293zM475 1255L496 1282L473 1275z"/>
<path fill="#15272d" stroke="#15272d" d="M-3 1294L22 1293L-3 1321zM84 1300L101 1296L102 1315zM295 1290L303 1314L295 1311zM327 1275L336 1275L324 1293zM396 1267L414 1263L407 1282zM420 1280L441 1274L437 1292zM455 1280L479 1293L454 1300zM473 1275L496 1282L495 1293zM473 1275L495 1293L479 1293zM488 1265L506 1258L496 1282zM506 1258L508 1278L496 1282zM496 1282L508 1278L506 1293zM496 1282L506 1293L495 1293zM506 1258L532 1263L508 1278zM525 1297L522 1314L506 1321zM530 1232L546 1243L531 1247zM531 1247L546 1243L532 1263zM532 1263L547 1256L529 1277zM547 1256L550 1276L529 1277zM529 1277L550 1276L538 1292zM525 1297L538 1292L543 1309zM559 1241L560 1257L547 1256zM547 1256L560 1257L550 1276zM560 1257L555 1281L550 1276zM550 1276L555 1281L538 1292zM558 1292L558 1315L543 1309zM559 1241L582 1240L580 1261zM560 1257L580 1261L555 1281zM580 1261L581 1277L555 1281zM581 1277L583 1296L558 1292zM582 1240L593 1249L593 1261zM581 1277L595 1281L583 1296zM583 1296L591 1294L575 1312zM593 1249L608 1263L593 1261zM593 1261L608 1263L595 1281zM595 1281L607 1291L591 1294zM591 1294L607 1291L606 1319zM591 1294L606 1319L594 1316zM614 1230L625 1221L623 1246zM613 1246L623 1246L624 1267zM613 1246L624 1267L608 1263zM611 1281L624 1283L624 1289zM611 1281L624 1289L607 1291zM624 1267L645 1260L624 1283zM645 1260L650 1284L624 1283zM650 1225L665 1232L648 1246zM648 1246L664 1265L645 1260zM645 1260L664 1265L650 1284zM661 1239L678 1244L674 1255zM664 1265L674 1255L659 1281zM659 1281L686 1283L669 1292zM674 1255L702 1266L686 1283zM702 1266L701 1272L686 1283zM696 1080L717 1075L717 1094zM693 1221L717 1246L694 1242z"/>
<path fill="#152730" stroke="#152730" d="M20 1279L22 1293L-3 1294zM31 1275L51 1278L46 1290zM34 1296L46 1290L49 1312zM46 1290L66 1291L49 1312zM66 1291L64 1311L49 1312zM84 1300L89 1311L64 1311zM101 1296L120 1314L102 1315zM172 1289L187 1293L174 1320zM204 1300L223 1300L207 1312zM397 1239L414 1263L396 1267zM508 1278L525 1297L506 1293zM546 1243L547 1256L532 1263zM529 1277L538 1292L525 1297zM550 1223L559 1241L546 1243zM538 1292L558 1292L543 1309zM559 1241L580 1261L560 1257zM558 1292L583 1296L558 1315zM583 1231L598 1229L593 1249zM580 1261L595 1281L581 1277zM598 1229L614 1230L613 1246zM598 1229L613 1246L593 1249zM608 1263L611 1281L595 1281zM595 1281L611 1281L607 1291zM614 1230L623 1246L613 1246zM607 1291L624 1289L606 1319zM624 1289L632 1312L606 1319zM625 1221L650 1225L648 1246zM625 1221L648 1246L623 1246zM623 1246L648 1246L645 1260zM623 1246L645 1260L624 1267zM650 1284L659 1281L669 1292zM650 1296L669 1292L643 1309zM669 1292L664 1317L643 1309zM665 1232L678 1244L661 1239zM674 1255L686 1283L659 1281zM669 1292L677 1319L664 1317zM676 1228L694 1242L678 1244zM678 1244L694 1242L674 1255zM680 1296L701 1298L699 1321zM702 1085L717 1094L698 1107zM717 1094L717 1103L698 1107zM717 1103L717 1123L692 1131zM692 1131L717 1139L694 1143zM694 1143L717 1154L699 1165zM699 1175L717 1176L696 1189zM717 1189L717 1207L703 1216zM703 1216L717 1207L717 1222zM694 1242L717 1246L717 1255zM701 1272L717 1281L701 1298z"/>
<path fill="#152a30" stroke="#152a30" d="M-3 1279L20 1279L-3 1294zM22 1293L20 1316L-3 1321zM31 1275L46 1290L34 1296zM34 1296L49 1312L31 1309zM74 1284L85 1284L84 1300zM84 1300L102 1315L89 1311zM101 1296L122 1289L120 1314zM187 1293L187 1317L174 1320zM187 1293L207 1312L187 1317zM223 1300L237 1294L227 1316zM243 1281L254 1279L237 1294zM325 1256L338 1256L327 1275zM338 1256L356 1257L336 1275zM458 1247L472 1242L460 1259zM507 1230L530 1232L531 1247zM530 1232L550 1223L546 1243zM583 1296L575 1312L558 1315zM665 1232L661 1239L648 1246zM664 1265L659 1281L650 1284zM668 1214L676 1228L665 1232zM669 1292L680 1296L677 1319zM701 1272L701 1298L680 1296zM696 1080L717 1094L702 1085zM694 1143L717 1139L717 1154zM699 1165L717 1154L717 1176zM699 1165L717 1176L699 1175zM696 1189L717 1189L703 1216zM717 1281L717 1291L701 1298zM701 1298L717 1309L699 1321z"/>
<path fill="#152a33" stroke="#152a33" d="M-3 1267L11 1263L20 1279zM11 1263L31 1275L20 1279zM150 1274L148 1299L131 1295zM150 1274L165 1281L148 1299z"/>
<path fill="#182a30" stroke="#182a30" d="M22 1293L31 1309L20 1316zM66 1291L84 1300L64 1311zM122 1289L133 1310L120 1314zM131 1295L148 1299L133 1310zM148 1299L158 1317L133 1310zM148 1299L174 1320L158 1317zM226 1282L223 1300L204 1300zM254 1279L249 1299L237 1294zM420 1250L446 1247L442 1264zM531 1247L532 1263L506 1258zM525 1297L543 1309L522 1314zM555 1281L581 1277L558 1292zM580 1261L593 1261L595 1281zM593 1249L613 1246L608 1263zM624 1267L624 1283L611 1281zM624 1283L650 1284L624 1289zM624 1289L650 1296L632 1312zM648 1246L661 1239L664 1265zM650 1284L669 1292L650 1296zM661 1239L674 1255L664 1265zM686 1283L680 1296L669 1292zM676 1228L693 1221L694 1242zM680 1296L699 1321L677 1319zM698 1107L717 1103L692 1131zM692 1131L717 1123L717 1139zM717 1176L717 1189L696 1189zM703 1216L717 1222L693 1221zM693 1221L717 1222L717 1246zM694 1242L717 1255L702 1266zM702 1266L717 1255L717 1281zM702 1266L717 1281L701 1272zM701 1298L717 1291L717 1309z"/>
<path fill="#182a33" stroke="#182a33" d="M56 1267L67 1267L74 1284zM51 1278L66 1291L46 1290zM102 1262L105 1283L85 1284zM147 1264L165 1281L150 1274zM148 1299L172 1289L174 1320zM190 1257L204 1267L199 1282zM190 1284L199 1282L187 1293zM199 1282L226 1282L204 1300zM226 1282L243 1281L237 1294zM226 1282L237 1294L223 1300zM268 1282L275 1295L249 1299zM271 1263L286 1276L268 1282zM268 1282L286 1276L275 1295zM286 1276L295 1290L275 1295zM286 1276L306 1284L295 1290zM356 1249L371 1247L379 1255zM356 1257L379 1255L375 1281zM397 1239L396 1267L379 1255zM420 1250L422 1256L414 1263zM566 1224L583 1231L559 1241zM668 1214L665 1232L650 1225zM665 1232L676 1228L678 1244z"/>
<path fill="#182d33" stroke="#182d33" d="M-3 1267L20 1279L-3 1279zM51 1278L74 1284L66 1291zM67 1267L91 1263L74 1284zM74 1284L84 1300L66 1291zM85 1284L105 1283L101 1296zM105 1283L115 1276L122 1289zM122 1289L131 1295L133 1310zM190 1257L190 1284L165 1281zM165 1281L190 1284L187 1293zM165 1281L187 1293L172 1289zM187 1293L204 1300L207 1312zM254 1279L268 1282L249 1299zM338 1256L336 1275L327 1275zM356 1249L379 1255L356 1257zM413 1239L420 1250L414 1263zM471 1230L496 1227L488 1246zM471 1230L488 1246L472 1242zM496 1227L507 1230L514 1240zM496 1227L514 1240L488 1246zM682 1214L693 1221L676 1228zM694 1242L702 1266L674 1255z"/>
<path fill="#182d36" stroke="#182d36" d="M-3 1223L16 1230L13 1244zM-3 1246L11 1263L-3 1267zM11 1263L29 1257L31 1275zM29 1257L56 1267L31 1275zM49 1239L70 1250L56 1267zM70 1250L67 1267L56 1267zM65 1224L80 1238L70 1250zM80 1238L102 1262L91 1263zM99 1248L115 1243L119 1259zM115 1276L142 1275L131 1295zM142 1275L150 1274L131 1295zM205 1239L204 1267L190 1257zM190 1257L199 1282L190 1284zM221 1240L235 1262L219 1267zM219 1267L235 1262L243 1281zM235 1262L257 1264L243 1281zM462 1232L471 1230L458 1247zM565 1208L583 1231L566 1224zM668 1214L682 1214L676 1228z"/>
<path fill="#183036" stroke="#183036" d="M600 1204L613 1212L598 1229z"/>
<path fill="#1b2d33" stroke="#1b2d33" d="M20 1279L34 1296L22 1293zM199 1282L204 1300L187 1293zM300 1258L327 1275L306 1284z"/>
<path fill="#1b2d36" stroke="#1b2d36" d="M20 1279L31 1275L34 1296zM56 1267L51 1278L31 1275zM91 1263L85 1284L74 1284zM85 1284L101 1296L84 1300zM119 1259L115 1276L105 1283zM105 1283L122 1289L101 1296zM119 1259L134 1262L142 1275zM115 1276L131 1295L122 1289zM165 1281L172 1289L148 1299zM168 1267L190 1257L165 1281zM219 1267L226 1282L199 1282zM257 1264L254 1279L243 1281zM271 1263L268 1282L254 1279zM271 1263L285 1255L286 1276zM613 1212L614 1230L598 1229z"/>
<path fill="#1b3036" stroke="#1b3036" d="M13 1244L29 1257L11 1263zM49 1239L56 1267L29 1257zM56 1267L74 1284L51 1278zM91 1263L102 1262L85 1284zM99 1248L119 1259L102 1262zM119 1259L142 1275L115 1276zM134 1262L147 1264L150 1274zM147 1264L168 1267L165 1281zM257 1264L271 1263L254 1279zM287 1242L308 1250L285 1255zM285 1255L300 1258L306 1284zM285 1255L306 1284L286 1276zM300 1258L325 1256L327 1275zM397 1239L413 1239L414 1263zM445 1221L458 1247L446 1247zM471 1230L472 1242L458 1247zM507 1206L530 1232L507 1230zM582 1212L598 1229L583 1231zM631 1206L625 1221L614 1230zM648 1205L650 1225L625 1221zM682 1214L703 1216L693 1221z"/>
<path fill="#1b3039" stroke="#1b3039" d="M-3 1223L13 1244L-3 1246zM23 1205L39 1207L16 1230zM39 1207L33 1225L16 1230zM16 1230L33 1225L13 1244zM13 1244L39 1250L29 1257zM33 1225L48 1225L49 1239zM39 1250L49 1239L29 1257zM62 1204L65 1224L48 1225zM48 1225L65 1224L49 1239zM62 1204L83 1228L65 1224zM65 1224L83 1228L80 1238zM70 1250L80 1238L91 1263zM70 1250L91 1263L67 1267zM83 1228L103 1224L80 1238zM103 1224L115 1243L99 1248zM102 1262L119 1259L105 1283zM115 1243L134 1262L119 1259zM141 1243L147 1264L134 1262zM147 1239L175 1243L168 1267zM172 1230L190 1224L175 1243zM190 1224L182 1241L175 1243zM175 1243L182 1241L168 1267zM182 1241L205 1239L190 1257zM205 1239L221 1240L204 1267zM221 1240L219 1267L204 1267zM221 1240L233 1241L235 1262zM219 1267L243 1281L226 1282zM233 1241L261 1247L235 1262zM261 1247L266 1242L257 1264zM291 1225L287 1242L266 1242zM266 1242L287 1242L271 1263zM309 1232L325 1229L326 1248zM445 1221L462 1232L458 1247zM526 1206L550 1223L530 1232zM565 1208L582 1212L583 1231zM582 1212L600 1204L598 1229zM664 1190L668 1214L648 1205zM678 1188L682 1214L668 1214z"/>
<path fill="#1b3339" stroke="#1b3339" d="M218 1224L221 1240L205 1239zM233 1225L255 1229L261 1247zM507 1206L507 1230L496 1227zM613 1212L631 1206L614 1230z"/>
<path fill="#1b333c" stroke="#1b333c" d="M17 1181L20 1190L-3 1197zM-3 1197L23 1205L-3 1205zM33 1177L39 1197L20 1190zM20 1190L39 1197L39 1207zM39 1197L45 1198L52 1205zM39 1207L48 1225L33 1225zM52 1205L62 1204L48 1225zM68 1191L80 1197L62 1204zM80 1197L91 1212L62 1204zM90 1180L102 1194L80 1197zM80 1197L102 1194L91 1212zM102 1194L106 1205L91 1212zM106 1205L118 1210L125 1231zM140 1205L152 1225L141 1221zM156 1212L170 1213L172 1230zM152 1225L172 1230L147 1239zM250 1206L269 1212L255 1229zM490 1206L507 1206L496 1227zM507 1206L526 1206L530 1232zM595 1193L616 1198L613 1212zM595 1193L613 1212L600 1204zM628 1188L648 1205L631 1206z"/>
<path fill="#1b333f" stroke="#1b333f" d="M72 1163L90 1180L71 1172z"/>
<path fill="#1b363f" stroke="#1b363f" d="M-3 1136L14 1160L-3 1154z"/>
<path fill="#1e3039" stroke="#1e3039" d="M182 1241L190 1257L168 1267zM204 1267L219 1267L199 1282z"/>
<path fill="#1e3339" stroke="#1e3339" d="M-3 1246L13 1244L11 1263zM33 1225L39 1250L13 1244zM65 1224L70 1250L49 1239zM80 1238L99 1248L102 1262zM134 1262L150 1274L142 1275zM147 1239L168 1267L147 1264zM266 1242L271 1263L257 1264zM291 1225L308 1250L287 1242zM308 1250L300 1258L285 1255zM648 1205L668 1214L650 1225z"/>
<path fill="#1e333c" stroke="#1e333c" d="M-3 1205L23 1205L-3 1223zM23 1205L16 1230L-3 1223zM39 1207L52 1205L48 1225zM33 1225L49 1239L39 1250zM68 1191L62 1204L52 1205zM62 1204L91 1212L83 1228zM106 1205L103 1224L83 1228zM103 1224L99 1248L80 1238zM115 1199L118 1210L106 1205zM103 1224L125 1231L115 1243zM125 1231L141 1221L115 1243zM141 1221L141 1243L115 1243zM115 1243L141 1243L134 1262zM141 1221L152 1225L141 1243zM141 1243L147 1239L147 1264zM156 1212L172 1230L152 1225zM172 1230L175 1243L147 1239zM190 1224L210 1223L205 1239zM190 1224L205 1239L182 1241zM218 1224L233 1225L221 1240zM233 1225L261 1247L233 1241zM261 1247L257 1264L235 1262zM255 1229L277 1223L266 1242zM255 1229L266 1242L261 1247zM292 1204L291 1225L277 1223zM277 1223L291 1225L266 1242zM291 1225L309 1232L308 1250zM308 1250L326 1248L325 1256zM308 1250L325 1256L300 1258zM360 1189L373 1210L351 1215zM473 1205L490 1206L496 1227zM473 1205L496 1227L471 1230z"/>
<path fill="#1e333f" stroke="#1e333f" d="M46 1174L45 1198L39 1197z"/>
<path fill="#1e363c" stroke="#1e363c" d="M20 1190L39 1207L23 1205zM39 1197L52 1205L39 1207zM118 1210L140 1205L125 1231zM140 1205L141 1221L125 1231zM152 1225L147 1239L141 1243zM233 1206L233 1225L218 1224zM292 1204L309 1232L291 1225zM309 1232L326 1248L308 1250zM631 1206L648 1205L625 1221z"/>
<path fill="#1e363f" stroke="#1e363f" d="M-3 1154L17 1181L-3 1175zM-3 1197L20 1190L23 1205zM14 1160L33 1177L17 1181zM17 1181L33 1177L20 1190zM39 1154L46 1174L33 1177zM46 1174L68 1191L45 1198zM45 1198L68 1191L52 1205zM71 1172L90 1180L80 1197zM71 1172L80 1197L68 1191zM90 1180L103 1174L102 1194zM91 1212L106 1205L83 1228zM124 1182L115 1199L102 1194zM102 1194L115 1199L106 1205zM124 1182L135 1170L115 1199zM130 1161L155 1182L135 1170zM155 1182L151 1197L142 1195zM142 1195L151 1197L156 1212zM155 1182L164 1173L167 1194zM155 1182L167 1194L151 1197zM151 1197L167 1194L156 1212zM167 1194L170 1213L156 1212zM189 1204L210 1223L190 1224zM233 1206L250 1206L233 1225zM250 1206L255 1229L233 1225zM269 1212L277 1223L255 1229zM308 1173L318 1176L326 1192zM320 1154L341 1165L318 1176zM338 1181L360 1189L339 1190zM339 1190L360 1189L351 1215zM339 1190L351 1215L344 1216zM378 1180L370 1189L360 1189zM360 1189L370 1189L373 1210zM378 1180L393 1171L394 1197zM412 1171L408 1195L394 1197zM412 1171L420 1174L421 1194zM412 1171L421 1194L408 1195zM461 1178L461 1199L439 1187zM470 1163L480 1178L461 1178zM480 1195L473 1205L459 1214zM473 1205L471 1230L462 1232zM480 1178L491 1180L480 1195zM491 1180L490 1199L480 1195zM480 1195L490 1199L490 1206zM480 1195L490 1206L473 1205zM489 1159L511 1171L491 1180zM510 1198L507 1206L490 1206zM511 1171L532 1175L528 1196zM511 1171L528 1196L510 1198zM510 1198L528 1196L526 1206zM528 1196L546 1197L544 1209zM528 1196L544 1209L526 1206zM547 1176L561 1173L562 1188zM547 1176L562 1188L546 1197zM546 1197L562 1188L544 1209zM583 1194L600 1204L582 1212zM593 1182L613 1178L616 1198zM593 1182L616 1198L595 1193zM613 1178L635 1176L628 1188zM640 1174L647 1192L628 1188zM657 1163L674 1182L667 1181zM674 1182L678 1188L664 1190zM678 1188L696 1189L703 1216zM678 1188L703 1216L682 1214z"/>
<path fill="#1e3642" stroke="#1e3642" d="M45 1154L72 1163L71 1172zM545 1160L565 1163L547 1176zM565 1163L561 1173L547 1176zM574 1164L593 1182L582 1172z"/>
<path fill="#1e393f" stroke="#1e393f" d="M427 1227L446 1247L420 1250z"/>
<path fill="#1e3942" stroke="#1e3942" d="M-3 1136L21 1145L14 1160zM16 1122L37 1120L31 1141zM31 1141L39 1154L14 1160zM39 1154L45 1154L46 1174zM106 1138L102 1162L80 1154zM303 1165L320 1154L318 1176zM355 1126L376 1129L370 1146zM355 1141L370 1158L362 1165zM391 1153L393 1171L378 1180zM472 1137L493 1146L470 1163zM509 1163L526 1162L532 1175zM630 1165L651 1159L635 1176z"/>
<path fill="#21333c" stroke="#21333c" d="M287 1242L285 1255L271 1263z"/>
<path fill="#21363f" stroke="#21363f" d="M33 1177L46 1174L39 1197zM106 1205L125 1231L103 1224zM135 1170L142 1195L115 1199zM115 1199L142 1195L140 1205zM115 1199L140 1205L118 1210zM142 1195L156 1212L140 1205zM140 1205L156 1212L152 1225zM233 1225L233 1241L221 1240zM510 1198L526 1206L507 1206zM526 1206L544 1209L550 1223zM583 1194L595 1193L600 1204z"/>
<path fill="#213642" stroke="#213642" d="M318 1176L339 1190L326 1192zM674 1182L699 1175L678 1188z"/>
<path fill="#21393f" stroke="#21393f" d="M189 1204L190 1224L172 1230zM616 1198L631 1206L613 1212z"/>
<path fill="#213942" stroke="#213942" d="M-3 1154L14 1160L17 1181zM-3 1175L17 1181L-3 1197zM21 1145L31 1141L14 1160zM14 1160L39 1154L33 1177zM31 1141L49 1136L39 1154zM49 1136L45 1154L39 1154zM49 1136L72 1163L45 1154zM45 1154L71 1172L46 1174zM46 1174L71 1172L68 1191zM64 1129L84 1131L88 1138zM88 1138L80 1154L72 1163zM72 1163L80 1154L90 1180zM80 1154L102 1162L90 1180zM102 1162L103 1174L90 1180zM102 1162L124 1182L103 1174zM103 1174L124 1182L102 1194zM121 1154L130 1161L124 1182zM130 1161L135 1170L124 1182zM130 1161L152 1159L155 1182zM135 1170L155 1182L142 1195zM170 1213L189 1204L172 1230zM272 1122L294 1147L269 1148zM294 1147L292 1165L275 1157zM303 1165L318 1176L308 1173zM341 1165L338 1181L318 1176zM355 1126L355 1141L336 1148zM341 1165L362 1165L338 1181zM338 1181L355 1172L360 1189zM355 1141L370 1146L370 1158zM362 1165L370 1158L378 1180zM355 1172L378 1180L360 1189zM378 1180L394 1197L370 1189zM386 1141L414 1144L391 1153zM414 1144L413 1155L391 1153zM391 1153L412 1171L393 1171zM393 1171L412 1171L394 1197zM414 1144L419 1157L413 1155zM419 1157L438 1174L420 1174zM420 1174L438 1174L421 1194zM444 1163L456 1164L461 1178zM444 1163L461 1178L438 1174zM438 1174L461 1178L439 1187zM464 1140L470 1163L456 1164zM456 1164L470 1163L461 1178zM461 1178L480 1178L480 1195zM461 1178L480 1195L461 1199zM487 1125L493 1146L472 1137zM470 1163L489 1159L480 1178zM489 1159L491 1180L480 1178zM513 1138L509 1163L489 1159zM491 1180L511 1171L490 1199zM490 1199L510 1198L490 1206zM509 1163L532 1175L511 1171zM526 1162L545 1160L532 1175zM545 1160L547 1176L532 1175zM532 1175L547 1176L546 1197zM532 1175L546 1197L528 1196zM544 1137L559 1144L565 1163zM559 1144L582 1140L565 1163zM565 1163L582 1172L561 1173zM574 1164L597 1165L593 1182zM582 1172L593 1182L583 1194zM593 1182L595 1193L583 1194zM589 1143L608 1164L597 1165zM597 1165L608 1164L593 1182zM608 1164L613 1178L593 1182zM630 1165L635 1176L613 1178zM616 1198L628 1188L631 1206zM623 1141L651 1159L630 1165zM651 1159L640 1174L635 1176zM635 1176L640 1174L628 1188zM649 1138L667 1147L651 1159zM651 1159L657 1163L640 1174zM640 1174L667 1181L647 1192zM667 1181L664 1190L647 1192zM647 1192L664 1190L648 1205zM664 1190L678 1188L668 1214zM680 1154L699 1165L674 1182zM699 1165L699 1175L674 1182zM699 1175L696 1189L678 1188z"/>
<path fill="#213945" stroke="#213945" d="M64 1129L88 1138L74 1147zM88 1138L106 1138L80 1154zM102 1162L121 1154L124 1182zM115 1145L139 1137L130 1161zM188 1127L199 1130L200 1148zM272 1122L269 1148L256 1136zM328 1148L320 1154L303 1165zM321 1131L336 1148L328 1148zM337 1120L355 1126L336 1148zM427 1136L443 1142L444 1163zM464 1140L472 1137L470 1163zM487 1125L514 1127L513 1138zM513 1138L526 1162L509 1163zM667 1147L681 1141L657 1163zM692 1131L694 1143L681 1141z"/>
<path fill="#213c45" stroke="#213c45" d="M16 1122L21 1145L-3 1136zM16 1122L31 1141L21 1145zM37 1120L47 1121L49 1136zM37 1120L49 1136L31 1141zM45 1102L72 1106L64 1129zM64 1129L74 1147L49 1136zM72 1106L91 1107L64 1129zM91 1107L84 1131L64 1129zM96 1107L98 1119L84 1131zM84 1131L98 1119L106 1138zM123 1130L115 1145L106 1138zM115 1145L121 1154L102 1162zM123 1130L139 1137L115 1145zM170 1119L188 1127L189 1144zM170 1119L189 1144L167 1137zM219 1124L237 1121L234 1138zM219 1124L234 1138L227 1143zM260 1125L272 1122L256 1136zM303 1128L311 1140L294 1147zM292 1165L303 1165L308 1173zM321 1131L328 1148L311 1140zM311 1140L328 1148L303 1165zM317 1109L345 1102L337 1120zM317 1109L337 1120L321 1131zM336 1148L341 1165L320 1154zM336 1148L362 1165L341 1165zM376 1129L386 1141L370 1146zM394 1078L413 1070L405 1091zM391 1153L413 1155L412 1171zM413 1070L419 1069L426 1090zM437 1121L443 1142L427 1136zM443 1142L464 1140L456 1164zM493 1146L489 1159L470 1163zM487 1125L513 1138L493 1146zM489 1159L509 1163L511 1171zM514 1127L522 1143L513 1138zM548 1131L544 1137L522 1143zM544 1137L565 1163L545 1160zM557 1131L582 1140L559 1144zM582 1140L574 1164L565 1163zM565 1163L574 1164L582 1172zM573 1122L589 1143L582 1140zM667 1147L657 1163L651 1159zM683 1123L681 1141L667 1147zM683 1123L692 1131L681 1141z"/>
<path fill="#213c48" stroke="#213c48" d="M96 1107L113 1110L98 1119zM235 1093L235 1109L226 1105zM266 1071L271 1097L260 1085zM550 1085L545 1104L529 1108zM575 1103L601 1103L573 1122zM593 1090L616 1085L615 1113z"/>
<path fill="#243942" stroke="#243942" d="M318 1176L338 1181L339 1190zM628 1188L647 1192L648 1205z"/>
<path fill="#243c45" stroke="#243c45" d="M47 1121L64 1129L49 1136zM49 1136L74 1147L72 1163zM74 1147L88 1138L72 1163zM98 1119L123 1130L106 1138zM106 1138L115 1145L102 1162zM123 1130L141 1126L139 1137zM115 1145L130 1161L121 1154zM167 1137L187 1153L169 1153zM311 1140L303 1165L292 1165zM303 1128L321 1131L311 1140zM328 1148L336 1148L320 1154zM336 1148L355 1141L362 1165zM362 1165L355 1172L338 1181zM355 1126L370 1146L355 1141zM362 1165L378 1180L355 1172zM370 1146L386 1141L391 1153zM370 1158L391 1153L378 1180zM371 1247L397 1239L379 1255zM414 1144L427 1136L419 1157zM413 1155L419 1157L412 1171zM419 1157L444 1163L438 1174zM438 1174L439 1187L421 1194zM462 1123L464 1140L443 1142zM443 1142L456 1164L444 1163zM493 1146L513 1138L489 1159zM511 1171L510 1198L490 1199zM513 1138L522 1143L526 1162zM522 1143L544 1137L526 1162zM544 1137L545 1160L526 1162zM582 1140L597 1165L574 1164zM609 1136L623 1141L630 1165zM609 1136L630 1165L608 1164zM608 1164L630 1165L613 1178zM613 1178L628 1188L616 1198zM657 1163L667 1181L640 1174zM681 1141L680 1154L657 1163zM657 1163L680 1154L674 1182zM667 1181L674 1182L664 1190zM681 1141L694 1143L680 1154z"/>
<path fill="#243c48" stroke="#243c48" d="M113 1110L123 1130L98 1119zM167 1137L189 1144L187 1153zM188 1127L200 1148L189 1144zM237 1121L260 1125L256 1136zM284 1102L283 1124L272 1122zM283 1124L303 1128L294 1147zM321 1131L337 1120L336 1148zM355 1114L355 1126L337 1120zM380 1074L394 1078L390 1087zM376 1129L386 1124L386 1141zM394 1078L405 1091L390 1087zM386 1124L404 1121L386 1141zM404 1121L414 1144L386 1141zM427 1136L444 1163L419 1157zM437 1121L462 1123L443 1142zM529 1108L545 1104L529 1125zM548 1131L557 1131L559 1144zM561 1109L573 1122L557 1131zM557 1131L573 1122L582 1140z"/>
<path fill="#243f45" stroke="#243f45" d="M342 1240L356 1257L338 1256zM427 1227L420 1250L413 1239z"/>
<path fill="#243f48" stroke="#243f48" d="M91 1107L96 1107L84 1131zM84 1131L106 1138L88 1138zM141 1095L133 1103L113 1110zM113 1110L133 1103L123 1130zM133 1103L141 1126L123 1130zM149 1091L159 1103L133 1103zM133 1103L159 1103L157 1124zM149 1091L168 1091L159 1103zM168 1091L170 1104L159 1103zM159 1103L170 1119L157 1124zM168 1068L182 1089L168 1091zM170 1104L188 1127L170 1119zM182 1112L204 1108L188 1127zM204 1108L199 1130L188 1127zM204 1108L226 1105L199 1130zM226 1105L219 1124L199 1130zM199 1130L219 1124L200 1148zM219 1124L227 1143L200 1148zM226 1105L235 1109L219 1124zM235 1109L237 1121L219 1124zM241 1080L260 1085L235 1093zM235 1093L260 1085L249 1111zM235 1109L260 1125L237 1121zM237 1121L256 1136L234 1138zM260 1085L271 1097L249 1111zM249 1111L274 1113L260 1125zM271 1097L285 1097L274 1113zM285 1097L284 1102L274 1113zM274 1113L284 1102L272 1122zM272 1122L283 1124L294 1147zM285 1097L300 1113L284 1102zM284 1102L303 1128L283 1124zM294 1147L311 1140L292 1165zM320 1085L317 1109L300 1113zM317 1109L321 1131L303 1128zM320 1085L344 1095L345 1102zM345 1102L355 1114L337 1120zM342 1240L356 1249L356 1257zM353 1077L380 1074L368 1097zM355 1114L376 1129L355 1126zM380 1074L390 1087L368 1097zM404 1121L427 1136L414 1144zM419 1157L420 1174L412 1171zM482 1120L487 1125L472 1137zM508 1104L514 1127L487 1125zM508 1104L529 1125L514 1127zM514 1127L529 1125L522 1143zM526 1095L550 1085L529 1108zM529 1125L548 1131L522 1143zM545 1104L561 1109L548 1131zM561 1109L557 1131L548 1131zM548 1131L559 1144L544 1137zM561 1109L575 1103L573 1122zM597 1078L593 1090L584 1093zM601 1103L597 1127L573 1122zM573 1122L597 1127L589 1143zM640 1085L657 1105L648 1112zM667 1088L681 1087L657 1105zM681 1087L676 1104L657 1105zM681 1087L698 1107L676 1104zM698 1107L692 1131L683 1123z"/>
<path fill="#243f4b" stroke="#243f4b" d="M113 1088L141 1095L113 1110zM168 1091L182 1089L182 1112zM189 1059L206 1076L184 1068zM182 1089L204 1108L182 1112zM206 1076L227 1094L201 1091zM201 1091L227 1094L226 1105zM227 1094L235 1093L226 1105zM268 1058L291 1063L284 1073zM320 1085L345 1102L317 1109zM353 1077L356 1088L344 1095zM344 1095L356 1088L355 1114zM464 1068L480 1078L481 1085zM497 1070L487 1087L481 1085zM497 1070L513 1077L512 1089zM526 1068L550 1085L526 1095zM550 1085L565 1093L561 1109zM550 1085L561 1109L545 1104zM584 1093L575 1103L561 1109zM584 1093L593 1090L575 1103zM593 1090L601 1103L575 1103zM593 1090L615 1113L601 1103zM613 1076L623 1086L616 1085zM616 1085L623 1086L633 1109zM616 1085L633 1109L615 1113zM640 1085L648 1112L633 1109zM652 1077L664 1079L667 1088zM640 1085L667 1088L657 1105zM664 1079L680 1074L681 1087zM681 1087L702 1085L698 1107z"/>
<path fill="#24424b" stroke="#24424b" d="M189 1059L201 1059L206 1076zM201 1206L218 1216L210 1223zM234 1138L256 1136L254 1165zM310 1077L319 1077L320 1085zM309 1191L320 1209L303 1204zM356 1231L372 1222L371 1247zM356 1231L371 1247L356 1249zM394 1197L408 1195L406 1215zM409 1228L427 1227L413 1239zM421 1194L439 1187L426 1206zM447 1214L459 1214L462 1232zM480 1078L497 1070L481 1085zM512 1089L526 1095L508 1104zM556 1078L584 1093L565 1093zM613 1076L616 1085L593 1090zM623 1075L652 1077L623 1086zM680 1074L702 1085L681 1087z"/>
<path fill="#273f45" stroke="#273f45" d="M550 1223L566 1224L559 1241z"/>
<path fill="#273f48" stroke="#273f48" d="M269 1148L294 1147L275 1157zM370 1146L391 1153L370 1158zM462 1123L482 1120L472 1137zM462 1123L472 1137L464 1140zM623 1141L649 1138L651 1159zM694 1143L699 1165L680 1154z"/>
<path fill="#273f4b" stroke="#273f4b" d="M45 1102L64 1129L47 1121zM168 1091L182 1112L170 1104zM235 1109L249 1111L260 1125zM545 1104L548 1131L529 1125z"/>
<path fill="#27424b" stroke="#27424b" d="M159 1103L170 1104L170 1119zM168 1068L184 1068L182 1089zM170 1104L182 1112L188 1127zM169 1153L187 1153L191 1179zM182 1089L201 1091L204 1108zM187 1153L210 1153L191 1179zM206 1076L225 1069L227 1094zM201 1091L226 1105L204 1108zM236 1054L254 1056L241 1080zM235 1093L249 1111L235 1109zM268 1058L266 1071L261 1079zM271 1097L274 1113L249 1111zM274 1113L272 1122L260 1125zM275 1157L266 1176L259 1181zM285 1039L291 1063L268 1058zM266 1176L295 1174L285 1199zM284 1102L300 1113L303 1128zM295 1174L308 1173L285 1199zM327 1052L319 1077L310 1077zM310 1077L320 1085L300 1085zM300 1113L317 1109L303 1128zM303 1204L320 1209L309 1232zM342 1063L335 1074L319 1077zM320 1209L344 1216L335 1228zM320 1209L335 1228L325 1229zM342 1240L338 1256L325 1256zM344 1095L355 1114L345 1102zM356 1088L368 1097L355 1114zM355 1114L373 1113L376 1129zM394 1197L391 1204L373 1210zM391 1225L409 1228L397 1239zM409 1228L413 1239L397 1239zM426 1206L447 1214L427 1227zM427 1227L445 1221L446 1247zM461 1199L459 1214L447 1214zM447 1214L462 1232L445 1221zM513 1077L526 1068L526 1095zM513 1077L526 1095L512 1089zM526 1068L543 1074L550 1085zM543 1074L565 1093L550 1085zM565 1093L584 1093L561 1109zM601 1103L615 1113L597 1127zM613 1076L623 1075L623 1086zM652 1077L640 1085L623 1086zM623 1086L640 1085L633 1109zM664 1079L681 1087L667 1088zM680 1074L696 1080L702 1085zM676 1104L698 1107L683 1123z"/>
<path fill="#27424e" stroke="#27424e" d="M206 1076L201 1091L182 1089zM215 1060L225 1069L206 1076zM219 1044L236 1054L215 1060zM233 1040L252 1037L236 1054zM241 1080L261 1079L260 1085zM261 1079L266 1071L260 1085zM321 1038L337 1044L342 1063zM319 1077L335 1074L344 1095zM319 1077L344 1095L320 1085zM335 1074L353 1077L344 1095zM353 1077L368 1097L356 1088zM497 1070L512 1089L487 1087zM543 1074L556 1078L565 1093zM572 1068L597 1078L584 1093zM597 1078L613 1076L593 1090zM652 1077L667 1088L640 1085z"/>
<path fill="#27454b" stroke="#27454b" d="M164 1173L187 1193L167 1194zM167 1194L187 1193L170 1213zM266 1176L285 1199L274 1192zM351 1215L372 1222L356 1231zM370 1189L394 1197L373 1210zM391 1225L397 1239L371 1247zM391 1204L406 1215L391 1225zM461 1199L480 1195L459 1214zM459 1214L473 1205L462 1232z"/>
<path fill="#27454e" stroke="#27454e" d="M169 1153L164 1173L155 1182zM164 1173L191 1179L187 1193zM187 1193L189 1204L170 1213zM210 1192L201 1206L189 1204zM201 1059L215 1060L206 1076zM200 1148L227 1143L219 1158zM210 1153L219 1158L218 1170zM218 1216L218 1224L210 1223zM234 1138L254 1165L243 1159zM243 1159L254 1165L234 1181zM254 1165L259 1181L234 1181zM254 1056L268 1058L261 1079zM261 1190L274 1192L269 1212zM261 1190L269 1212L250 1206zM269 1212L292 1204L277 1223zM285 1039L304 1045L300 1056zM309 1191L303 1204L292 1204zM309 1191L326 1192L320 1209zM326 1192L344 1216L320 1209zM326 1248L342 1240L325 1256zM373 1210L391 1225L372 1222zM394 1197L406 1215L391 1204zM406 1215L409 1228L391 1225zM408 1195L421 1194L426 1206zM439 1187L447 1214L426 1206zM556 1078L572 1068L584 1093z"/>
<path fill="#2a454e" stroke="#2a454e" d="M184 1068L206 1076L182 1089zM189 1144L200 1148L210 1153zM189 1144L210 1153L187 1153zM210 1153L203 1180L191 1179zM189 1204L201 1206L210 1223zM200 1148L219 1158L210 1153zM210 1153L218 1170L203 1180zM203 1180L216 1197L210 1192zM210 1192L216 1197L201 1206zM210 1223L218 1224L205 1239zM215 1060L236 1054L225 1069zM236 1054L241 1080L225 1069zM218 1170L234 1181L244 1192zM244 1192L233 1206L218 1216zM218 1216L233 1206L218 1224zM252 1037L254 1056L236 1054zM254 1056L261 1079L241 1080zM259 1181L261 1190L244 1192zM244 1192L261 1190L250 1206zM244 1192L250 1206L233 1206zM256 1136L269 1148L254 1165zM259 1181L266 1176L274 1192zM268 1058L284 1073L266 1071zM274 1192L285 1199L292 1204zM274 1192L292 1204L269 1212zM285 1039L300 1056L291 1063zM308 1173L309 1191L285 1199zM285 1199L309 1191L292 1204zM292 1204L303 1204L309 1232zM304 1045L327 1052L300 1056zM300 1056L327 1052L310 1077zM320 1209L325 1229L309 1232zM327 1052L342 1063L319 1077zM326 1192L339 1190L344 1216zM325 1229L342 1240L326 1248zM344 1216L351 1215L335 1228zM335 1228L356 1249L342 1240zM351 1215L373 1210L372 1222zM373 1210L391 1204L391 1225zM372 1222L391 1225L371 1247zM408 1195L426 1206L406 1215zM406 1215L426 1206L409 1228zM447 1214L445 1221L427 1227zM439 1187L461 1199L447 1214z"/>
<path fill="#2a4551" stroke="#2a4551" d="M273 1039L285 1039L268 1058zM289 1019L311 1019L304 1045zM289 1019L304 1045L285 1039zM311 1019L324 1021L321 1038zM311 1019L321 1038L304 1045zM304 1045L321 1038L327 1052zM327 1010L338 1005L346 1023zM346 1023L337 1044L321 1038zM321 1038L342 1063L327 1052z"/>
<path fill="#2a484e" stroke="#2a484e" d="M187 1193L210 1192L189 1204zM203 1180L218 1170L216 1197zM216 1197L218 1216L201 1206zM234 1138L243 1159L219 1158zM243 1159L234 1181L218 1170zM218 1170L244 1192L216 1197zM216 1197L244 1192L218 1216zM234 1181L259 1181L244 1192zM269 1148L275 1157L254 1165zM292 1165L295 1174L266 1176zM335 1228L356 1231L356 1249zM426 1206L427 1227L409 1228z"/>
<path fill="#2a4851" stroke="#2a4851" d="M133 1103L157 1124L141 1126zM153 1146L167 1137L152 1159zM152 1159L169 1153L155 1182zM169 1153L191 1179L164 1173zM191 1179L210 1192L187 1193zM227 1143L234 1138L219 1158zM219 1158L243 1159L218 1170zM252 1037L268 1058L254 1056zM259 1181L274 1192L261 1190zM308 1173L326 1192L309 1191zM327 1010L346 1023L324 1021zM324 1021L346 1023L321 1038z"/>
<path fill="#2d4851" stroke="#2d4851" d="M141 1126L153 1146L139 1137zM170 1119L167 1137L153 1146zM191 1179L203 1180L210 1192zM252 1037L273 1039L268 1058zM254 1165L275 1157L259 1181zM275 1157L292 1165L266 1176zM292 1165L308 1173L295 1174z"/>
<path fill="#2d4b51" stroke="#2d4b51" d="M141 1126L157 1124L153 1146zM153 1146L152 1159L130 1161zM167 1137L169 1153L152 1159zM325 1229L335 1228L342 1240zM351 1215L356 1231L335 1228z"/>
<path fill="#2d4b54" stroke="#2d4b54" d="M139 1137L153 1146L130 1161zM157 1124L170 1119L153 1146z"/>
<path fill="#30515a" stroke="#30515a" d="M425 1113L437 1121L420 1121z"/>
<path fill="#30545d" stroke="#30545d" d="M481 1113L487 1125L482 1120z"/>
<path fill="#335760" stroke="#335760" d="M419 1069L446 1085L426 1090z"/>
<path fill="#365760" stroke="#365760" d="M390 1087L391 1103L373 1113zM481 1085L481 1113L462 1114zM481 1113L482 1120L462 1123z"/>
<path fill="#365a60" stroke="#365a60" d="M368 1097L373 1113L355 1114zM413 1070L426 1090L405 1091zM464 1068L481 1085L456 1088z"/>
<path fill="#365a63" stroke="#365a63" d="M487 1087L496 1114L481 1113zM526 1095L529 1108L508 1104z"/>
<path fill="#395a63" stroke="#395a63" d="M391 1103L386 1124L376 1129zM420 1121L437 1121L427 1136zM443 1114L462 1114L462 1123zM487 1087L512 1089L508 1104z"/>
<path fill="#395d63" stroke="#395d63" d="M373 1113L391 1103L376 1129zM391 1103L404 1121L386 1124zM481 1085L487 1087L481 1113zM496 1114L508 1104L487 1125z"/>
<path fill="#3c5a60" stroke="#3c5a60" d="M544 1209L566 1224L550 1223z"/>
<path fill="#3c5d66" stroke="#3c5d66" d="M404 1121L420 1121L427 1136z"/>
<path fill="#3c6066" stroke="#3c6066" d="M462 1114L481 1113L462 1123zM481 1113L496 1114L487 1125zM487 1087L508 1104L496 1114zM508 1104L529 1108L529 1125z"/>
<path fill="#3f6069" stroke="#3f6069" d="M443 1114L462 1123L437 1121z"/>
<path fill="#426369" stroke="#426369" d="M464 1068L456 1088L446 1085z"/>
<path fill="#42636c" stroke="#42636c" d="M368 1097L390 1087L373 1113zM405 1091L426 1090L425 1113z"/>
<path fill="#45666f" stroke="#45666f" d="M446 1085L456 1088L462 1114zM446 1085L462 1114L443 1114z"/>
<path fill="#45696f" stroke="#45696f" d="M391 1103L406 1102L404 1121zM562 1188L565 1208L544 1209z"/>
<path fill="#486972" stroke="#486972" d="M390 1087L405 1091L391 1103zM406 1102L425 1113L420 1121zM426 1090L446 1085L425 1113zM446 1085L443 1114L425 1113zM425 1113L443 1114L437 1121zM562 1188L583 1194L582 1212z"/>
<path fill="#486c72" stroke="#486c72" d="M405 1091L406 1102L391 1103zM405 1091L425 1113L406 1102z"/>
<path fill="#4b6972" stroke="#4b6972" d="M544 1209L565 1208L566 1224z"/>
<path fill="#4b6c75" stroke="#4b6c75" d="M406 1102L420 1121L404 1121z"/>
<path fill="#4b6f75" stroke="#4b6f75" d="M562 1188L582 1212L565 1208z"/>
<path fill="#4e6f75" stroke="#4e6f75" d="M456 1088L481 1085L462 1114z"/>
<path fill="#4e6f78" stroke="#4e6f78" d="M561 1173L582 1172L583 1194z"/>
<path fill="#51727b" stroke="#51727b" d="M561 1173L583 1194L562 1188z"/>
<path fill="#5a7b81" stroke="#5a7b81" d="M641 1123L649 1138L623 1141z"/>
<path fill="#5a7b84" stroke="#5a7b84" d="M615 1113L613 1119L597 1127zM648 1112L657 1105L641 1123zM657 1105L676 1104L683 1123z"/>
<path fill="#5d7b84" stroke="#5d7b84" d="M225 1069L241 1080L235 1093zM266 1071L285 1097L271 1097zM300 1085L320 1085L300 1113z"/>
<path fill="#5d7e84" stroke="#5d7e84" d="M225 1069L235 1093L227 1094z"/>
<path fill="#5d7e87" stroke="#5d7e87" d="M641 1123L667 1147L649 1138z"/>
<path fill="#5d8187" stroke="#5d8187" d="M582 1140L589 1143L597 1165zM597 1127L613 1119L589 1143zM634 1124L641 1123L623 1141zM641 1123L662 1126L667 1147z"/>
<path fill="#607e87" stroke="#607e87" d="M310 1077L300 1085L285 1097z"/>
<path fill="#608187" stroke="#608187" d="M657 1105L662 1126L641 1123z"/>
<path fill="#60818a" stroke="#60818a" d="M589 1143L609 1136L608 1164zM615 1113L633 1109L613 1119z"/>
<path fill="#60848a" stroke="#60848a" d="M633 1109L634 1124L613 1119zM634 1124L623 1141L609 1136zM633 1109L648 1112L634 1124z"/>
<path fill="#638187" stroke="#638187" d="M266 1071L284 1073L285 1097zM284 1073L310 1077L285 1097z"/>
<path fill="#63818a" stroke="#63818a" d="M300 1056L310 1077L284 1073z"/>
<path fill="#63848a" stroke="#63848a" d="M613 1119L634 1124L609 1136zM648 1112L641 1123L634 1124z"/>
<path fill="#66848d" stroke="#66848d" d="M291 1063L300 1056L284 1073z"/>
<path fill="#66878d" stroke="#66878d" d="M613 1119L609 1136L589 1143zM657 1105L683 1123L662 1126zM662 1126L683 1123L667 1147z"/>
<path fill="#69878d" stroke="#69878d" d="M285 1097L300 1085L300 1113z"/>
<path fill="#15272d" stroke="#15272d" d="M704 1049L704 1058L695 1059zM715 1029L715 1034L700 1035z"/>
<path fill="#152730" stroke="#152730" d="M704 1058L705 1067L694 1069zM700 993L715 1002L704 1005zM715 1016L715 1029L704 1023zM704 1049L715 1042L704 1058zM715 1042L715 1053L704 1058zM705 1067L715 1064L715 1078z"/>
<path fill="#152a30" stroke="#152a30" d="M700 993L715 994L715 1002zM715 1034L715 1042L704 1049zM704 1058L715 1053L715 1064zM704 1058L715 1064L705 1067zM705 1067L715 1078L704 1072zM704 1072L715 1078L700 1081zM700 1081L715 1087L705 1098zM715 1087L715 1098L705 1098z"/>
<path fill="#182a30" stroke="#182a30" d="M704 1005L715 1002L702 1013zM715 1002L715 1016L702 1013zM702 1013L715 1016L704 1023zM704 1023L715 1029L700 1035zM700 1035L715 1034L704 1049zM715 1078L715 1087L700 1081z"/>
<path fill="#1b3642" stroke="#1b3642" d="M502 1052L513 1063L501 1065zM510 1038L521 1045L512 1047z"/>
<path fill="#1e3642" stroke="#1e3642" d="M414 1036L424 1033L408 1045zM410 1054L422 1064L409 1061zM409 1061L422 1064L416 1074zM420 1043L435 1043L433 1054zM430 1063L441 1066L429 1078zM470 1024L482 1035L473 1037z"/>
<path fill="#1e3942" stroke="#1e3942" d="M376 1065L370 1075L362 1079zM370 1075L380 1079L382 1086zM390 1043L391 1053L385 1052zM385 1052L391 1053L390 1067zM380 1079L396 1083L382 1086zM390 1067L406 1073L393 1073zM393 1073L406 1073L396 1083zM405 1044L408 1045L410 1054zM424 1033L420 1043L408 1045zM410 1054L419 1052L422 1064zM419 1052L430 1063L422 1064zM422 1074L429 1078L418 1086zM429 1029L443 1027L428 1036zM435 1043L441 1045L433 1054zM443 1056L449 1054L455 1067zM453 1037L461 1044L455 1048zM455 1048L461 1044L449 1054zM458 1053L463 1062L455 1067zM455 1067L460 1077L449 1072zM471 1044L473 1058L458 1053zM471 1044L484 1054L473 1058zM473 1058L484 1054L479 1066zM482 1008L493 1014L481 1015zM482 1035L494 1038L484 1046zM492 1051L501 1065L496 1063zM501 1015L509 1026L502 1026zM502 1026L509 1026L501 1037zM521 1045L531 1047L532 1058z"/>
<path fill="#1e3945" stroke="#1e3945" d="M378 1067L390 1067L393 1073zM408 1023L426 1028L414 1036zM443 1027L454 1025L453 1037zM441 1037L455 1048L441 1045zM455 1067L449 1072L442 1073zM454 1025L460 1034L453 1037zM494 1038L489 1044L484 1046zM501 1015L509 1018L509 1026zM509 1026L525 1023L510 1038z"/>
<path fill="#213945" stroke="#213945" d="M385 1052L390 1067L378 1067zM380 1079L393 1073L396 1083zM391 1053L404 1058L390 1067zM405 1033L414 1036L408 1045zM405 1033L408 1045L405 1044zM404 1058L410 1054L409 1061zM409 1061L416 1074L406 1073zM406 1073L415 1082L398 1082zM426 1028L429 1029L424 1033zM441 1037L441 1045L435 1043zM441 1045L443 1056L433 1054zM442 1073L449 1072L443 1083zM454 1025L461 1025L460 1034zM461 1025L473 1037L460 1034zM458 1053L473 1058L470 1069zM471 1017L481 1015L485 1025zM473 1058L479 1066L470 1069zM485 1025L494 1038L482 1035zM484 1046L492 1051L484 1054zM484 1054L496 1063L479 1066zM493 1014L502 1026L493 1029zM501 1037L512 1047L500 1048zM521 1045L519 1058L512 1056zM523 1012L529 1018L536 1028zM523 1012L536 1028L525 1023zM525 1023L536 1028L532 1033zM525 1023L532 1033L520 1036z"/>
<path fill="#213c45" stroke="#213c45" d="M362 1079L370 1075L375 1082zM405 1033L405 1044L390 1043zM390 1043L405 1044L391 1053zM405 1044L404 1058L391 1053zM390 1067L400 1068L406 1073zM406 1073L398 1082L396 1083zM408 1023L414 1036L405 1033zM404 1058L409 1061L400 1068zM400 1068L409 1061L406 1073zM406 1073L416 1074L415 1082zM408 1045L420 1043L419 1052zM422 1064L422 1074L416 1074zM429 1029L428 1036L424 1033zM424 1033L428 1036L435 1043zM420 1043L433 1054L419 1052zM419 1052L433 1054L430 1063zM422 1064L430 1063L422 1074zM430 1063L429 1078L422 1074zM428 1036L441 1037L435 1043zM433 1054L443 1056L441 1066zM443 1027L453 1037L441 1037zM441 1045L449 1054L443 1056zM443 1056L455 1067L441 1066zM441 1066L455 1067L442 1073zM453 1037L460 1034L461 1044zM449 1054L458 1053L455 1067zM460 1034L473 1037L461 1044zM473 1037L471 1044L461 1044zM461 1044L471 1044L458 1053zM458 1053L470 1069L463 1062zM463 1062L470 1069L460 1077zM470 1069L474 1074L460 1077zM482 1035L484 1046L471 1044zM470 1069L479 1066L474 1074zM481 1015L493 1014L493 1029zM481 1015L493 1029L485 1025zM485 1025L493 1029L494 1038zM484 1046L489 1044L492 1051zM493 1014L501 1015L502 1026zM494 1038L501 1037L500 1048zM489 1044L500 1048L502 1052zM492 1051L502 1052L501 1065zM509 1026L510 1038L501 1037zM502 1052L512 1056L513 1063zM509 1018L523 1012L525 1023zM525 1023L520 1036L510 1038zM512 1047L521 1045L512 1056zM520 1036L532 1033L521 1045zM532 1033L531 1047L521 1045zM531 1047L544 1043L532 1058z"/>
<path fill="#213c48" stroke="#213c48" d="M355 1084L359 1086L349 1098zM532 1082L542 1098L529 1098zM576 1089L582 1087L574 1098z"/>
<path fill="#243c45" stroke="#243c45" d="M378 1067L393 1073L380 1079zM441 1066L442 1073L429 1078zM470 1024L485 1025L482 1035z"/>
<path fill="#243c48" stroke="#243c48" d="M371 1057L385 1052L376 1065zM376 1065L378 1067L380 1079zM376 1065L380 1079L370 1075zM370 1075L382 1086L375 1082zM405 1044L410 1054L404 1058zM408 1045L419 1052L410 1054zM416 1074L422 1074L415 1082zM443 1027L441 1037L428 1036zM433 1054L441 1066L430 1063zM441 1045L455 1048L449 1054zM455 1067L463 1062L460 1077zM471 1017L470 1024L461 1025zM461 1025L470 1024L473 1037zM471 1044L484 1046L484 1054zM493 1029L502 1026L501 1037zM493 1029L501 1037L494 1038zM494 1038L500 1048L489 1044zM501 1037L510 1038L512 1047zM509 1018L525 1023L509 1026zM510 1038L520 1036L521 1045z"/>
<path fill="#243f48" stroke="#243f48" d="M385 1052L378 1067L376 1065zM375 1082L382 1086L368 1098zM404 1058L400 1068L390 1067zM426 1028L424 1033L414 1036zM424 1033L435 1043L420 1043zM441 1037L453 1037L455 1048zM471 1017L485 1025L470 1024zM473 1037L482 1035L471 1044zM484 1054L492 1051L496 1063zM489 1044L502 1052L492 1051zM500 1048L512 1047L502 1052zM512 1047L512 1056L502 1052zM501 1083L509 1088L504 1098zM509 1088L518 1098L510 1098zM532 1033L544 1043L531 1047zM604 1072L603 1082L589 1086zM604 1072L612 1088L603 1082zM612 1088L618 1098L612 1098zM624 1078L633 1073L624 1087zM629 1086L645 1098L634 1098zM655 1073L650 1082L640 1083zM640 1083L650 1082L652 1098z"/>
<path fill="#243f4b" stroke="#243f4b" d="M319 1085L331 1082L319 1098zM331 1082L331 1098L319 1098zM333 1044L341 1047L334 1057zM343 1072L355 1084L340 1086zM349 1077L362 1079L355 1084zM359 1086L375 1082L368 1098zM359 1086L368 1098L364 1098zM490 1074L490 1088L484 1082zM490 1088L501 1083L504 1098zM521 1068L519 1077L510 1078zM510 1078L526 1084L509 1088zM509 1088L526 1084L518 1098zM535 1076L532 1082L526 1084zM526 1084L532 1082L529 1098zM526 1084L529 1098L518 1098zM552 1062L559 1066L560 1076zM564 1087L559 1098L551 1098zM560 1058L569 1063L559 1066zM576 1089L574 1098L559 1098zM570 1074L584 1076L582 1087zM589 1086L595 1098L584 1098zM603 1082L604 1098L595 1098zM603 1082L612 1088L604 1098zM624 1078L624 1087L612 1088zM629 1086L640 1083L645 1098zM640 1064L653 1064L641 1079zM653 1064L655 1073L641 1079zM673 1073L680 1076L681 1084zM684 1062L694 1069L680 1076zM680 1076L691 1079L681 1084zM681 1084L689 1085L689 1098z"/>
<path fill="#24424b" stroke="#24424b" d="M479 1066L482 1077L474 1074zM474 1074L482 1077L473 1084zM509 1088L510 1098L504 1098zM542 1081L551 1083L551 1098zM582 1087L584 1098L574 1098zM593 1068L602 1066L604 1072zM662 1066L665 1072L655 1073zM681 1084L683 1098L674 1098zM700 1081L705 1098L689 1098z"/>
<path fill="#27424b" stroke="#27424b" d="M319 1073L331 1082L319 1085zM343 1072L340 1086L331 1082zM331 1082L340 1086L346 1098zM331 1082L346 1098L331 1098zM343 1072L349 1077L355 1084zM355 1084L349 1098L346 1098zM356 1066L362 1079L349 1077zM362 1079L359 1086L355 1084zM359 1086L364 1098L349 1098zM360 1055L371 1057L358 1068zM362 1079L375 1082L359 1086zM461 1044L458 1053L449 1054zM496 1063L490 1074L482 1077zM482 1077L490 1074L484 1082zM490 1074L501 1075L490 1088zM501 1075L501 1083L490 1088zM513 1063L510 1078L501 1075zM519 1077L535 1076L526 1084zM529 1065L539 1065L544 1076zM532 1082L542 1081L542 1098zM539 1055L552 1052L552 1062zM539 1055L552 1062L539 1065zM539 1065L552 1062L552 1075zM542 1081L551 1098L542 1098zM552 1062L560 1076L552 1075zM560 1076L570 1074L576 1089zM560 1076L576 1089L564 1087zM564 1087L576 1089L559 1098zM594 1057L593 1068L584 1068zM593 1068L594 1074L584 1076zM594 1074L604 1072L589 1086zM589 1086L603 1082L595 1098zM615 1055L614 1063L602 1066zM604 1072L611 1072L612 1088zM612 1088L612 1098L604 1098zM608 1043L625 1056L615 1055zM615 1055L625 1056L622 1065zM615 1055L622 1065L614 1063zM612 1088L624 1087L618 1098zM622 1065L636 1067L624 1078zM636 1067L633 1073L624 1078zM633 1073L629 1086L624 1087zM624 1087L629 1086L618 1098zM641 1079L655 1073L640 1083zM655 1073L665 1072L661 1082zM655 1073L661 1082L650 1082zM665 1072L673 1073L661 1082zM673 1073L669 1086L661 1082zM669 1086L674 1098L661 1098zM675 1052L684 1052L684 1062zM673 1073L681 1084L669 1086zM669 1086L681 1084L674 1098zM694 1069L691 1079L680 1076zM691 1079L689 1085L681 1084zM681 1084L689 1098L683 1098zM694 1069L705 1067L691 1079zM705 1067L704 1072L691 1079zM704 1072L700 1081L689 1085zM689 1085L700 1081L689 1098z"/>
<path fill="#27424e" stroke="#27424e" d="M319 1042L334 1057L319 1056zM334 1057L332 1066L319 1063zM319 1063L332 1066L331 1075zM335 1038L339 1033L341 1047zM334 1057L342 1058L341 1068zM339 1033L355 1046L341 1047zM341 1068L349 1077L343 1072zM340 1086L355 1084L346 1098zM362 1046L371 1057L360 1055zM358 1068L376 1065L362 1079zM482 1077L484 1082L473 1084zM501 1065L501 1075L490 1074zM501 1075L510 1078L509 1088zM501 1075L509 1088L501 1083zM513 1063L521 1068L510 1078zM532 1058L529 1065L521 1068zM544 1043L539 1055L532 1058zM532 1058L539 1055L539 1065zM532 1058L539 1065L529 1065zM539 1014L555 1018L542 1023zM544 1076L552 1075L542 1081zM552 1075L551 1083L542 1081zM561 1045L560 1058L552 1052zM552 1052L560 1058L552 1062zM552 1075L564 1087L551 1083zM551 1083L564 1087L551 1098zM560 1031L569 1033L574 1046zM561 1045L574 1046L560 1058zM560 1058L569 1054L569 1063zM579 1047L585 1058L569 1054zM570 1074L582 1087L576 1089zM584 1076L594 1074L582 1087zM594 1074L589 1086L582 1087zM582 1087L589 1086L584 1098zM590 1025L600 1024L605 1036zM594 1057L600 1057L602 1066zM593 1068L604 1072L594 1074zM600 1057L615 1055L602 1066zM602 1066L614 1063L604 1072zM608 1043L626 1042L625 1056zM636 1067L640 1064L633 1073zM633 1073L641 1079L640 1083zM650 1082L661 1082L661 1098zM650 1082L661 1098L652 1098zM661 1082L669 1086L661 1098zM680 1032L682 1045L674 1046zM674 1046L682 1045L675 1052zM683 1022L691 1035L680 1032zM680 1032L691 1035L693 1043zM682 1045L695 1059L684 1052zM695 1059L694 1069L684 1062zM695 1059L704 1058L694 1069zM691 1079L704 1072L689 1085z"/>
<path fill="#27454e" stroke="#27454e" d="M333 1014L330 1027L319 1029zM319 1056L334 1057L319 1063zM319 1073L331 1075L331 1082zM341 1047L342 1058L334 1057zM350 1017L350 1024L340 1022zM363 1034L362 1046L355 1046zM355 1046L360 1055L350 1057zM370 1037L374 1047L362 1046zM371 1057L376 1065L358 1068zM381 1032L380 1047L374 1047zM374 1047L380 1047L371 1057zM393 1033L405 1033L390 1043zM450 1013L461 1025L454 1025zM479 1066L496 1063L482 1077zM519 1002L529 1018L523 1012zM521 1068L535 1076L519 1077zM535 1076L544 1076L542 1081zM542 1023L552 1022L549 1038zM544 1033L549 1038L549 1045zM544 1033L549 1045L544 1043zM544 1043L549 1045L552 1052zM549 1038L560 1031L561 1045zM560 1058L559 1066L552 1062zM552 1075L560 1076L564 1087zM559 1066L570 1074L560 1076zM569 1033L583 1037L579 1047zM569 1033L579 1047L574 1046zM583 1037L595 1036L579 1047zM595 1036L594 1044L579 1047zM590 1025L605 1036L595 1036zM610 1028L609 1035L605 1036zM614 1063L611 1072L604 1072zM609 1035L622 1034L608 1043zM611 1072L624 1078L612 1088zM640 1064L641 1079L633 1073zM653 1064L662 1066L655 1073zM662 1066L674 1067L665 1072zM674 1067L684 1062L673 1073zM684 1062L680 1076L673 1073zM682 1045L693 1043L695 1059zM700 1035L704 1049L693 1043zM693 1043L704 1049L695 1059z"/>
<path fill="#2a454e" stroke="#2a454e" d="M319 1063L331 1075L319 1073zM334 1057L341 1068L332 1066zM332 1066L341 1068L331 1075zM341 1068L343 1072L331 1075zM331 1075L343 1072L331 1082zM355 1046L350 1057L342 1058zM341 1068L356 1066L349 1077zM356 1066L358 1068L362 1079zM362 1046L374 1047L371 1057zM370 1037L381 1032L374 1047zM380 1047L385 1052L371 1057zM380 1028L395 1028L381 1032zM393 1033L390 1043L380 1047zM403 1016L408 1023L402 1026zM519 1058L532 1058L521 1068zM521 1068L529 1065L535 1076zM536 1028L544 1033L532 1033zM529 1065L544 1076L535 1076zM535 1076L542 1081L532 1082zM539 1065L552 1075L544 1076zM549 1045L561 1045L552 1052zM560 1031L574 1046L561 1045zM559 1066L569 1063L570 1074zM569 1054L585 1058L584 1068zM569 1054L584 1068L569 1063zM569 1063L584 1068L584 1076zM569 1063L584 1076L570 1074zM579 1047L594 1044L594 1057zM585 1058L594 1057L584 1068zM584 1068L593 1068L584 1076zM594 1044L600 1042L600 1057zM594 1044L600 1057L594 1057zM600 1042L608 1043L615 1055zM600 1042L615 1055L600 1057zM614 1063L622 1065L624 1078zM614 1063L624 1078L611 1072zM625 1056L633 1054L636 1067zM629 1086L634 1098L618 1098zM633 1073L640 1083L629 1086zM640 1083L652 1098L645 1098zM675 1052L684 1062L674 1067zM683 1022L694 1026L691 1035zM691 1035L700 1035L693 1043z"/>
<path fill="#2a4551" stroke="#2a4551" d="M330 1027L335 1038L319 1032zM319 1032L335 1038L319 1042zM342 1016L340 1022L330 1027zM341 1047L355 1046L342 1058zM350 1017L361 1012L361 1022zM392 1014L395 1028L380 1028zM381 1032L393 1033L380 1047zM403 1016L402 1026L395 1028zM395 1028L402 1026L405 1033zM395 1028L405 1033L393 1033zM415 1007L421 1013L415 1019zM444 998L452 995L442 1006zM446 1013L450 1013L454 1025zM459 1016L471 1017L461 1025zM531 996L545 1006L529 1007zM529 1007L539 1014L529 1018zM529 1018L539 1014L536 1028zM539 1014L542 1023L536 1028zM545 1006L555 1004L539 1014zM542 1023L549 1038L544 1033zM555 1018L564 1022L552 1022zM552 1022L560 1031L549 1038zM549 1038L561 1045L549 1045zM568 1018L571 1024L564 1022zM564 1022L571 1024L569 1033zM564 1022L569 1033L560 1031zM590 1025L595 1036L583 1037zM579 1047L594 1057L585 1058zM590 1015L600 1024L590 1025zM595 1036L605 1036L600 1042zM595 1036L600 1042L594 1044zM594 1057L602 1066L593 1068zM625 1056L636 1067L622 1065zM674 1067L673 1073L665 1072zM682 1045L684 1052L675 1052zM679 1008L689 1016L681 1011zM684 1052L695 1059L684 1062zM689 1016L704 1023L694 1026z"/>
<path fill="#2a4851" stroke="#2a4851" d="M319 1015L333 1014L319 1029zM319 1029L330 1027L319 1032zM319 1042L333 1044L334 1057zM333 1014L342 1016L330 1027zM342 1016L350 1017L340 1022zM348 1002L361 1006L350 1017zM361 1006L361 1012L350 1017zM355 1046L362 1046L360 1055zM393 994L395 1002L379 1002zM380 1047L390 1043L385 1052zM401 995L409 994L405 1002zM436 1004L431 1014L421 1013zM421 1013L431 1014L426 1028zM444 998L442 1006L436 1004zM442 1006L446 1013L431 1014zM431 1014L446 1013L429 1029zM442 1006L452 1007L450 1013zM452 995L464 1007L452 1007zM452 1007L464 1007L459 1016zM452 1007L459 1016L450 1013zM464 1007L469 1005L471 1017zM482 1008L492 1002L493 1014zM493 997L499 1005L492 1002zM492 1002L501 1015L493 1014zM504 988L515 992L500 993zM500 993L515 992L511 1006zM510 1078L519 1077L526 1084zM532 987L531 996L525 996zM531 996L529 1007L519 1002zM538 986L546 994L531 996zM529 1007L545 1006L539 1014zM536 1028L542 1023L544 1033zM532 1033L544 1033L544 1043zM555 1004L555 1018L539 1014zM555 1018L552 1022L542 1023zM555 1004L563 1013L555 1018zM555 1018L563 1013L564 1022zM572 1008L584 1014L568 1018zM584 1014L579 1029L571 1024zM571 1024L579 1029L583 1037zM571 1024L583 1037L569 1033zM600 1024L610 1028L605 1036zM605 1036L609 1035L600 1042zM609 1035L608 1043L600 1042zM610 1028L622 1034L609 1035zM633 1054L640 1064L636 1067zM679 1008L681 1011L673 1017zM673 1017L681 1011L683 1022zM679 1008L692 1004L689 1016zM681 1011L689 1016L694 1026zM681 1011L694 1026L683 1022zM680 1032L693 1043L682 1045zM694 991L704 1005L692 1004zM692 1004L704 1005L689 1016zM704 1005L702 1013L689 1016zM694 1026L704 1023L700 1035z"/>
<path fill="#2a4854" stroke="#2a4854" d="M484 981L492 982L483 995zM489 977L501 978L492 982z"/>
<path fill="#2d4851" stroke="#2d4851" d="M335 1038L333 1044L319 1042zM335 1038L341 1047L333 1044zM395 1028L393 1033L381 1032zM402 1026L408 1023L405 1033zM450 1013L459 1016L461 1025zM469 1005L481 1015L471 1017zM544 1043L552 1052L539 1055zM552 1022L564 1022L560 1031zM572 1008L568 1018L563 1013zM574 1046L569 1054L560 1058zM574 1046L579 1047L569 1054zM584 1014L590 1025L579 1029zM590 1015L602 1014L600 1024zM602 1014L612 1019L610 1028zM694 1026L700 1035L691 1035z"/>
<path fill="#2d4854" stroke="#2d4854" d="M422 1008L436 1004L421 1013zM436 1004L442 1006L431 1014zM446 1013L454 1025L443 1027zM473 994L469 1005L464 1007zM492 982L504 988L500 993zM493 997L500 993L499 1005zM504 988L515 985L515 992zM500 993L511 1006L499 1005zM511 1006L509 1018L501 1015zM515 992L525 996L519 1002zM511 1006L519 1002L523 1012zM519 1002L529 1007L529 1018zM568 1018L584 1014L571 1024zM579 1029L590 1025L583 1037zM675 997L679 1008L675 1002zM681 997L694 991L692 1004zM681 997L692 1004L679 1008zM689 1016L702 1013L704 1023z"/>
<path fill="#2d4b54" stroke="#2d4b54" d="M364 996L373 1005L361 1006zM371 995L379 991L373 1005zM379 991L379 1002L373 1005zM393 994L401 995L395 1002zM414 972L423 972L424 985zM415 1007L422 1008L421 1013zM452 995L452 1007L442 1006zM442 1006L450 1013L446 1013zM452 995L462 995L464 1007zM462 995L473 994L464 1007zM464 1007L471 1017L459 1016zM469 966L482 978L475 973zM483 995L482 1008L469 1005zM469 1005L482 1008L481 1015zM494 962L489 977L482 978zM492 982L500 993L493 997zM492 1002L499 1005L501 1015zM501 978L515 985L504 988zM499 1005L511 1006L501 1015zM525 974L523 983L515 985zM523 983L525 996L515 992zM511 1006L523 1012L509 1018zM525 974L532 987L523 983zM523 983L532 987L525 996zM525 996L531 996L519 1002zM531 996L546 994L545 1006zM538 986L551 986L546 994zM553 974L565 975L565 981zM565 975L569 976L565 981zM563 1013L568 1018L564 1022zM584 1014L590 1015L590 1025zM602 1014L610 1028L600 1024zM615 986L623 985L625 994zM673 983L681 997L675 997zM675 997L681 997L679 1008zM673 1017L683 1022L672 1028zM672 1028L683 1022L680 1032zM675 1037L680 1032L674 1046zM694 991L700 993L704 1005z"/>
<path fill="#2d4b57" stroke="#2d4b57" d="M409 986L424 985L409 994zM489 977L492 982L484 981zM540 978L553 974L551 986zM553 974L565 981L551 986zM623 972L635 972L633 986zM635 972L639 987L633 986z"/>
<path fill="#2d4e57" stroke="#2d4e57" d="M452 952L454 965L441 966zM464 952L475 952L462 965zM469 966L481 965L482 978zM481 965L494 962L482 978zM482 978L489 977L484 981z"/>
<path fill="#304b57" stroke="#304b57" d="M492 982L493 997L483 995zM515 985L523 983L515 992zM515 992L519 1002L511 1006zM686 987L694 991L681 997z"/>
<path fill="#304e57" stroke="#304e57" d="M379 991L393 994L379 1002zM414 972L424 985L409 986zM421 963L432 966L436 978zM421 963L436 978L423 972zM464 952L462 965L454 965zM475 952L484 952L469 966zM484 952L481 965L469 966zM501 978L504 988L492 982zM501 978L513 975L515 985zM513 975L525 974L515 985zM532 987L538 986L531 996zM540 978L551 986L538 986zM569 976L585 977L583 983zM582 967L590 969L592 978zM582 967L592 978L585 977zM592 978L604 971L602 981zM611 973L615 986L602 981zM602 981L615 986L615 994zM623 972L633 986L623 985zM635 972L642 978L639 987zM642 978L654 974L649 987zM642 978L649 987L639 987zM661 986L673 983L675 997zM673 983L686 987L681 997z"/>
<path fill="#30515a" stroke="#30515a" d="M432 952L443 952L441 966zM443 952L452 952L441 966zM452 952L464 952L454 965zM475 952L469 966L462 965z"/>
<path fill="#33515a" stroke="#33515a" d="M432 952L441 966L432 966z"/>
<path fill="#33545d" stroke="#33545d" d="M396 1083L393 1098L381 1098z"/>
<path fill="#33575d" stroke="#33575d" d="M449 1072L460 1077L450 1082z"/>
<path fill="#365760" stroke="#365760" d="M382 1086L381 1098L368 1098zM398 1082L415 1082L406 1098zM442 1073L443 1083L434 1088zM490 1088L492 1098L480 1098zM490 1088L504 1098L492 1098z"/>
<path fill="#395a63" stroke="#395a63" d="M382 1086L396 1083L381 1098zM396 1083L398 1082L393 1098zM415 1082L418 1086L412 1098zM449 1072L450 1082L443 1083zM474 1074L473 1084L460 1084zM460 1084L473 1084L460 1098zM473 1084L484 1082L480 1098zM484 1082L490 1088L480 1098z"/>
<path fill="#395d63" stroke="#395d63" d="M473 1084L480 1098L469 1098z"/>
<path fill="#3c5d66" stroke="#3c5d66" d="M429 1078L434 1088L418 1086zM429 1078L442 1073L434 1088zM460 1077L474 1074L460 1084z"/>
<path fill="#3c6066" stroke="#3c6066" d="M422 1074L418 1086L415 1082zM473 1084L469 1098L460 1098z"/>
<path fill="#3f6069" stroke="#3f6069" d="M460 1077L460 1084L450 1082zM450 1082L460 1084L451 1098z"/>
<path fill="#3f606c" stroke="#3f606c" d="M521 1045L532 1058L519 1058z"/>
<path fill="#45666f" stroke="#45666f" d="M398 1082L406 1098L393 1098zM443 1083L450 1082L445 1098zM460 1084L460 1098L451 1098zM519 1058L521 1068L513 1063z"/>
<path fill="#456672" stroke="#456672" d="M496 1063L501 1065L490 1074z"/>
<path fill="#486972" stroke="#486972" d="M415 1082L412 1098L406 1098zM450 1082L451 1098L445 1098zM501 1065L513 1063L501 1075zM512 1056L519 1058L513 1063z"/>
<path fill="#486c72" stroke="#486c72" d="M434 1088L445 1098L429 1098z"/>
<path fill="#4b6c75" stroke="#4b6c75" d="M434 1088L429 1098L423 1098zM434 1088L443 1083L445 1098z"/>
<path fill="#4b6f75" stroke="#4b6f75" d="M418 1086L423 1098L412 1098z"/>
<path fill="#4e6f78" stroke="#4e6f78" d="M418 1086L434 1088L423 1098z"/>
<path fill="#607e87" stroke="#607e87" d="M342 1058L350 1057L341 1068z"/>
<path fill="#60818a" stroke="#60818a" d="M350 1057L360 1055L358 1068z"/>
<path fill="#66878d" stroke="#66878d" d="M350 1057L356 1066L341 1068z"/>
<path fill="#668790" stroke="#668790" d="M350 1057L358 1068L356 1066z"/>
<path fill="#698790" stroke="#698790" d="M350 1017L361 1022L350 1024z"/>
<path fill="#6f8d96" stroke="#6f8d96" d="M340 1022L350 1024L350 1036z"/>
<path fill="#729096" stroke="#729096" d="M340 1022L339 1033L335 1038z"/>
<path fill="#759399" stroke="#759399" d="M340 1022L350 1036L339 1033zM339 1033L350 1036L355 1046zM350 1036L363 1034L355 1046z"/>
<path fill="#78939c" stroke="#78939c" d="M330 1027L340 1022L335 1038zM350 1024L363 1034L350 1036z"/>
<path fill="#7e969f" stroke="#7e969f" d="M379 1002L395 1002L392 1014z"/>
<path fill="#849ca5" stroke="#849ca5" d="M380 1028L381 1032L370 1037z"/>
<path fill="#879fa8" stroke="#879fa8" d="M361 1006L373 1016L361 1012zM373 1016L382 1015L380 1028zM373 1016L380 1028L371 1027z"/>
<path fill="#87a2a8" stroke="#87a2a8" d="M350 1024L361 1022L363 1034zM361 1012L371 1027L361 1022zM371 1027L370 1037L363 1034z"/>
<path fill="#87a2ab" stroke="#87a2ab" d="M415 1019L426 1028L408 1023zM431 1014L429 1029L426 1028z"/>
<path fill="#8aa2a8" stroke="#8aa2a8" d="M395 1002L403 1016L392 1014z"/>
<path fill="#8aa2ab" stroke="#8aa2ab" d="M382 1015L392 1014L380 1028zM405 1002L415 1007L415 1019z"/>
<path fill="#8aa5ab" stroke="#8aa5ab" d="M361 1006L373 1005L373 1016zM401 995L405 1002L395 1002zM409 994L422 1008L415 1007z"/>
<path fill="#8aa5ae" stroke="#8aa5ae" d="M403 1016L415 1019L408 1023zM415 1019L421 1013L426 1028z"/>
<path fill="#8da5ab" stroke="#8da5ab" d="M373 1005L382 1015L373 1016zM371 1027L380 1028L370 1037zM392 1014L403 1016L395 1028z"/>
<path fill="#8da5ae" stroke="#8da5ae" d="M395 1002L405 1002L403 1016z"/>
<path fill="#8da8ae" stroke="#8da8ae" d="M361 1012L373 1016L371 1027zM446 1013L443 1027L429 1029z"/>
<path fill="#90a5ae" stroke="#90a5ae" d="M434 984L431 994L419 994z"/>
<path fill="#90a8ae" stroke="#90a8ae" d="M409 994L415 1007L405 1002zM405 1002L415 1019L403 1016z"/>
<path fill="#90a8b1" stroke="#90a8b1" d="M361 1022L371 1027L363 1034zM373 1005L379 1002L382 1015z"/>
<path fill="#90abb1" stroke="#90abb1" d="M571 997L584 1002L572 1008zM599 997L601 1006L595 1003zM623 985L633 986L625 994z"/>
<path fill="#93abb1" stroke="#93abb1" d="M379 1002L392 1014L382 1015zM633 986L639 987L629 994z"/>
<path fill="#93abb4" stroke="#93abb4" d="M623 1028L630 1025L631 1039zM640 1044L642 1052L633 1054z"/>
<path fill="#93aeb4" stroke="#93aeb4" d="M363 1034L370 1037L362 1046zM594 993L595 1003L584 1002zM615 994L625 994L612 1008zM631 1039L633 1047L626 1042zM639 987L639 994L629 994zM630 1025L646 1023L631 1039zM650 1036L650 1047L640 1044zM672 1028L675 1037L661 1037zM665 1055L675 1052L674 1067z"/>
<path fill="#96abb4" stroke="#96abb4" d="M436 978L442 974L434 984zM466 986L471 987L473 994z"/>
<path fill="#96aeb4" stroke="#96aeb4" d="M424 985L419 994L409 994zM424 985L434 984L419 994zM551 986L549 992L546 994zM564 1006L572 1008L563 1013zM583 998L594 993L584 1002zM584 1002L595 1003L590 1015zM595 1003L601 1006L590 1015zM599 997L615 994L601 1006zM639 987L649 987L652 995zM650 1036L661 1037L650 1047zM661 986L675 997L666 996z"/>
<path fill="#96aeb7" stroke="#96aeb7" d="M641 1038L640 1044L633 1047zM655 1025L661 1037L650 1036z"/>
<path fill="#96b1b7" stroke="#96b1b7" d="M565 995L571 997L572 1008zM615 994L612 1008L601 1006zM610 1028L623 1028L622 1034zM622 1034L626 1042L608 1043zM633 1047L640 1044L633 1054zM633 1054L642 1052L640 1064zM650 1047L649 1057L642 1052zM649 1057L653 1064L640 1064zM661 986L666 996L652 995zM650 1047L661 1043L649 1057zM649 1057L665 1055L662 1066zM664 1024L672 1028L661 1037zM665 1055L674 1067L662 1066zM672 1028L680 1032L675 1037z"/>
<path fill="#99aeb7" stroke="#99aeb7" d="M423 972L436 978L434 984zM419 994L431 994L436 1004zM431 994L444 998L436 1004z"/>
<path fill="#99b1b7" stroke="#99b1b7" d="M601 1006L612 1008L612 1019zM661 1043L674 1046L675 1052z"/>
<path fill="#99b4b7" stroke="#99b4b7" d="M622 1034L631 1039L626 1042z"/>
<path fill="#99b4ba" stroke="#99b4ba" d="M546 994L555 1004L545 1006zM555 1004L564 1006L563 1013zM571 997L583 998L584 1002zM612 1019L621 1015L623 1028zM612 1019L623 1028L610 1028zM633 986L629 994L625 994zM621 1015L630 1025L623 1028zM626 1042L633 1054L625 1056zM641 1038L650 1036L640 1044zM640 1044L650 1047L642 1052zM642 1052L649 1057L640 1064zM661 1037L661 1043L650 1047zM661 1037L675 1037L661 1043zM675 1037L674 1046L661 1043z"/>
<path fill="#9cb1b7" stroke="#9cb1b7" d="M419 994L436 1004L422 1008zM442 974L446 981L434 984zM466 986L462 995L452 995z"/>
<path fill="#9cb4ba" stroke="#9cb4ba" d="M409 994L419 994L422 1008zM434 984L446 981L431 994zM446 981L452 995L444 998zM594 993L599 997L595 1003zM623 1028L631 1039L622 1034zM646 1023L641 1038L631 1039zM631 1039L641 1038L633 1047zM649 987L661 986L652 995zM661 1043L675 1052L665 1055z"/>
<path fill="#9cb7bd" stroke="#9cb7bd" d="M546 994L549 992L555 1004zM572 1008L584 1002L584 1014zM584 1002L590 1015L584 1014zM615 986L625 994L615 994zM639 987L652 995L639 994zM646 1023L650 1036L641 1038zM655 1025L664 1024L661 1037z"/>
<path fill="#9fb4ba" stroke="#9fb4ba" d="M432 966L442 974L436 978zM446 981L449 988L452 995zM482 978L484 981L471 987zM471 987L484 981L473 994zM473 994L483 995L469 1005z"/>
<path fill="#9fb7bd" stroke="#9fb7bd" d="M446 981L444 998L431 994zM565 995L572 1008L564 1006z"/>
<path fill="#9fbabd" stroke="#9fbabd" d="M601 1006L612 1019L602 1014z"/>
<path fill="#9fbac0" stroke="#9fbac0" d="M626 1042L633 1047L633 1054z"/>
<path fill="#a2b7bd" stroke="#a2b7bd" d="M423 972L434 984L424 985zM466 986L473 994L462 995zM475 973L482 978L471 987zM484 981L483 995L473 994z"/>
<path fill="#a2bac0" stroke="#a2bac0" d="M483 995L493 997L482 1008zM493 997L492 1002L482 1008zM549 992L564 1006L555 1004z"/>
<path fill="#a2bdc0" stroke="#a2bdc0" d="M661 1043L665 1055L649 1057zM649 1057L662 1066L653 1064z"/>
<path fill="#a2bdc3" stroke="#a2bdc3" d="M601 1006L602 1014L590 1015z"/>
<path fill="#a5bdc0" stroke="#a5bdc0" d="M449 988L466 986L452 995z"/>
<path fill="#c0cccf" stroke="#c0cccf" d="M623 1006L634 1006L630 1017z"/>
<path fill="#c0cfcf" stroke="#c0cfcf" d="M666 996L663 1007L653 1007z"/>
<path fill="#c0cfd2" stroke="#c0cfd2" d="M629 994L634 1006L623 1006z"/>
<path fill="#c3cfd2" stroke="#c3cfd2" d="M629 994L639 994L639 1003z"/>
<path fill="#c3d2d5" stroke="#c3d2d5" d="M629 994L639 1003L634 1006zM650 1014L664 1024L655 1025z"/>
<path fill="#c6d5d5" stroke="#c6d5d5" d="M612 1008L623 1006L621 1015zM612 1008L621 1015L612 1019zM630 1017L641 1019L630 1025zM663 1007L675 1002L661 1018zM661 1018L672 1028L664 1024zM675 1002L679 1008L673 1017z"/>
<path fill="#c9c3c0" stroke="#c9c3c0" d="M551 986L565 995L549 992z"/>
<path fill="#c9d5d8" stroke="#c9d5d8" d="M625 994L623 1006L612 1008zM666 996L675 997L663 1007z"/>
<path fill="#c9d8d8" stroke="#c9d8d8" d="M623 1006L630 1017L621 1015zM621 1015L630 1017L630 1025zM634 1006L639 1003L641 1019zM641 1019L646 1023L630 1025zM639 994L652 995L653 1007zM639 994L653 1007L639 1003zM650 1014L655 1025L646 1023z"/>
<path fill="#ccc6c0" stroke="#ccc6c0" d="M549 992L565 995L564 1006zM585 977L589 989L583 983z"/>
<path fill="#ccc6c3" stroke="#ccc6c3" d="M551 986L565 981L565 995zM565 981L573 987L565 995z"/>
<path fill="#ccd8db" stroke="#ccd8db" d="M634 1006L641 1019L630 1017zM641 1019L650 1014L646 1023zM646 1023L655 1025L650 1036zM652 995L666 996L653 1007zM653 1007L663 1007L650 1014zM650 1014L661 1018L664 1024z"/>
<path fill="#ccdbdb" stroke="#ccdbdb" d="M625 994L629 994L623 1006zM653 1007L650 1014L641 1019zM675 1002L673 1017L661 1018z"/>
<path fill="#cfc6c3" stroke="#cfc6c3" d="M569 976L573 987L565 981zM583 983L589 989L583 998zM589 989L594 993L583 998zM589 989L602 981L599 997z"/>
<path fill="#cfc9c3" stroke="#cfc9c3" d="M569 976L583 983L573 987zM589 989L599 997L594 993zM602 981L615 994L599 997z"/>
<path fill="#cfc9c6" stroke="#cfc9c6" d="M592 978L602 981L589 989z"/>
<path fill="#cfdbde" stroke="#cfdbde" d="M663 1007L661 1018L650 1014z"/>
<path fill="#d2ccc6" stroke="#d2ccc6" d="M585 977L592 978L589 989z"/>
<path fill="#d2ccc9" stroke="#d2ccc9" d="M573 987L571 997L565 995z"/>
<path fill="#d2dede" stroke="#d2dede" d="M661 1018L673 1017L672 1028z"/>
<path fill="#d2e1e1" stroke="#d2e1e1" d="M639 1003L653 1007L641 1019z"/>
<path fill="#d5ccc9" stroke="#d5ccc9" d="M573 987L583 983L583 998zM573 987L583 998L571 997z"/>
<path fill="#d5e1e1" stroke="#d5e1e1" d="M675 997L675 1002L663 1007z"/>
<path fill="#dedbd5" stroke="#dedbd5" d="M441 966L454 965L452 973zM452 973L459 974L449 988zM475 973L471 987L466 986z"/>
<path fill="#e1dbd8" stroke="#e1dbd8" d="M462 965L459 974L452 973z"/>
<path fill="#e1ded8" stroke="#e1ded8" d="M432 966L441 966L442 974zM452 973L449 988L446 981z"/>
<path fill="#e4ded8" stroke="#e4ded8" d="M469 966L475 973L459 974z"/>
<path fill="#e4dedb" stroke="#e4dedb" d="M441 966L452 973L442 974zM459 974L475 973L466 986z"/>
<path fill="#e4e1db" stroke="#e4e1db" d="M442 974L452 973L446 981zM454 965L462 965L452 973zM459 974L466 986L449 988z"/>
<path fill="#e7e4de" stroke="#e7e4de" d="M462 965L469 966L459 974z"/>
</g>
<g clip-path="url(#c3)">
<path fill="#12272d" stroke="#12272d" d="M2421 1493L2427 1529L2401 1527zM2401 1527L2427 1529L2425 1553zM2463 1517L2484 1520L2489 1553zM2583 1486L2583 1530L2541 1517z"/>
<path fill="#15272d" stroke="#15272d" d="M2427 1529L2463 1517L2453 1553zM2463 1517L2489 1553L2453 1553zM2512 1515L2541 1517L2551 1553z"/>
<path fill="#152730" stroke="#152730" d="M2366 1514L2365 1553L2333 1553z"/>
<path fill="#152a30" stroke="#152a30" d="M2189 1529L2200 1553L2168 1553zM2216 1492L2253 1493L2216 1519zM2253 1493L2246 1509L2216 1519zM2246 1509L2241 1553L2227 1553zM2275 1519L2289 1553L2241 1553zM2286 1482L2308 1496L2319 1518zM2286 1482L2319 1518L2275 1519zM2275 1519L2319 1518L2320 1553zM2275 1519L2320 1553L2289 1553zM2319 1518L2341 1513L2320 1553zM2341 1513L2333 1553L2320 1553zM2377 1491L2366 1514L2341 1513zM2341 1513L2366 1514L2333 1553zM2359 1405L2407 1405L2368 1420zM2409 1434L2391 1450L2365 1453zM2377 1491L2392 1484L2366 1514zM2392 1484L2401 1527L2366 1514zM2366 1514L2401 1527L2402 1553zM2366 1514L2402 1553L2365 1553zM2424 1468L2421 1493L2392 1484zM2392 1484L2421 1493L2401 1527zM2401 1527L2425 1553L2402 1553zM2420 1441L2464 1425L2455 1451zM2424 1468L2455 1451L2471 1480zM2424 1468L2471 1480L2421 1493zM2421 1493L2471 1480L2463 1517zM2421 1493L2463 1517L2427 1529zM2482 1403L2494 1430L2464 1425zM2471 1480L2481 1483L2463 1517zM2481 1483L2484 1520L2463 1517zM2525 1379L2519 1390L2482 1403zM2482 1403L2519 1390L2494 1430zM2519 1390L2528 1419L2494 1430zM2494 1430L2528 1419L2483 1469zM2483 1469L2516 1452L2522 1496zM2483 1469L2522 1496L2481 1483zM2481 1483L2512 1515L2484 1520zM2484 1520L2512 1515L2528 1553zM2484 1520L2528 1553L2489 1553zM2528 1419L2542 1434L2516 1452zM2542 1434L2546 1452L2516 1452zM2516 1452L2546 1452L2522 1496zM2546 1452L2542 1488L2522 1496zM2522 1496L2542 1488L2541 1517zM2522 1496L2541 1517L2512 1515zM2512 1515L2551 1553L2528 1553zM2554 1337L2583 1371L2541 1374zM2541 1374L2583 1398L2557 1398zM2542 1434L2583 1437L2546 1452zM2583 1437L2583 1451L2546 1452zM2546 1452L2583 1451L2583 1486zM2546 1452L2583 1486L2542 1488zM2542 1488L2583 1486L2541 1517zM2541 1517L2583 1530L2551 1553zM2583 1530L2583 1553L2551 1553z"/>
<path fill="#152a33" stroke="#152a33" d="M2071 1530L2073 1553L2036 1553zM2253 1493L2286 1482L2246 1509zM2308 1436L2308 1459L2282 1455zM2308 1436L2335 1422L2349 1457zM2308 1459L2349 1457L2308 1496zM2335 1422L2365 1453L2349 1457zM2349 1457L2365 1453L2345 1489zM2365 1453L2377 1491L2345 1489zM2407 1405L2436 1396L2409 1434zM2525 1379L2541 1374L2557 1398zM2525 1379L2557 1398L2519 1390z"/>
<path fill="#152d33" stroke="#152d33" d="M2197 1494L2216 1519L2189 1529zM2335 1422L2368 1420L2365 1453zM2374 1371L2396 1377L2407 1405z"/>
<path fill="#182a30" stroke="#182a30" d="M2427 1529L2453 1553L2425 1553zM2455 1451L2483 1469L2481 1483zM2455 1451L2481 1483L2471 1480zM2481 1483L2522 1496L2512 1515z"/>
<path fill="#182a33" stroke="#182a33" d="M2345 1489L2377 1491L2341 1513zM2365 1453L2392 1484L2377 1491z"/>
<path fill="#182d33" stroke="#182d33" d="M1977 1439L2010 1441L1977 1458zM2001 1518L2046 1512L2036 1553zM2001 1518L2036 1553L1999 1553zM2061 1435L2076 1463L2045 1453zM2045 1453L2076 1490L2041 1492zM2041 1492L2076 1490L2071 1530zM2041 1492L2071 1530L2046 1512zM2046 1512L2071 1530L2036 1553zM2076 1490L2098 1518L2071 1530zM2071 1530L2098 1518L2073 1553zM2098 1518L2097 1553L2073 1553zM2127 1454L2119 1499L2101 1487zM2101 1487L2119 1499L2140 1515zM2101 1487L2140 1515L2098 1518zM2098 1518L2140 1515L2097 1553zM2140 1515L2129 1553L2097 1553zM2154 1435L2167 1459L2127 1454zM2127 1454L2167 1459L2157 1484zM2127 1454L2157 1484L2119 1499zM2119 1499L2157 1484L2167 1528zM2119 1499L2167 1528L2140 1515zM2140 1515L2167 1528L2129 1553zM2167 1528L2168 1553L2129 1553zM2154 1435L2182 1420L2195 1450zM2195 1450L2197 1494L2157 1484zM2157 1484L2197 1494L2189 1529zM2167 1528L2189 1529L2168 1553zM2182 1420L2230 1435L2211 1454zM2182 1420L2211 1454L2195 1450zM2195 1450L2211 1454L2197 1494zM2211 1454L2216 1492L2197 1494zM2197 1494L2216 1492L2216 1519zM2189 1529L2216 1519L2200 1553zM2216 1519L2227 1553L2200 1553zM2211 1372L2260 1410L2218 1394zM2246 1432L2241 1458L2211 1454zM2241 1458L2253 1493L2216 1492zM2216 1519L2246 1509L2227 1553zM2260 1410L2283 1409L2280 1424zM2260 1410L2280 1424L2246 1432zM2246 1432L2280 1424L2241 1458zM2280 1424L2282 1455L2241 1458zM2241 1458L2282 1455L2286 1482zM2241 1458L2286 1482L2253 1493zM2286 1482L2275 1519L2246 1509zM2246 1509L2275 1519L2241 1553zM2280 1424L2308 1436L2282 1455zM2282 1455L2308 1459L2308 1496zM2282 1455L2308 1496L2286 1482zM2334 1337L2351 1371L2303 1362zM2351 1371L2344 1397L2303 1396zM2308 1436L2349 1457L2308 1459zM2349 1457L2345 1489L2308 1496zM2308 1496L2345 1489L2341 1513zM2308 1496L2341 1513L2319 1518zM2351 1371L2374 1371L2344 1397zM2374 1371L2359 1405L2344 1397zM2359 1405L2368 1420L2335 1422zM2368 1420L2409 1434L2365 1453zM2365 1453L2391 1450L2392 1484zM2395 1337L2428 1337L2424 1381zM2395 1337L2424 1381L2396 1377zM2396 1377L2424 1381L2407 1405zM2424 1381L2436 1396L2407 1405zM2436 1396L2420 1441L2409 1434zM2409 1434L2420 1441L2424 1468zM2409 1434L2424 1468L2391 1450zM2391 1450L2424 1468L2392 1484zM2428 1337L2451 1337L2453 1377zM2428 1337L2453 1377L2424 1381zM2424 1381L2453 1377L2471 1403zM2424 1381L2471 1403L2436 1396zM2436 1396L2471 1403L2420 1441zM2471 1403L2464 1425L2420 1441zM2420 1441L2455 1451L2424 1468zM2451 1337L2489 1337L2453 1377zM2489 1337L2500 1364L2453 1377zM2453 1377L2500 1364L2471 1403zM2500 1364L2482 1403L2471 1403zM2471 1403L2482 1403L2464 1425zM2464 1425L2494 1430L2483 1469zM2464 1425L2483 1469L2455 1451zM2489 1337L2521 1337L2500 1364zM2521 1337L2525 1379L2500 1364zM2500 1364L2525 1379L2482 1403zM2528 1419L2516 1452L2483 1469zM2521 1337L2554 1337L2541 1374zM2521 1337L2541 1374L2525 1379zM2519 1390L2557 1398L2528 1419zM2557 1398L2542 1434L2528 1419zM2554 1337L2583 1337L2583 1371zM2541 1374L2583 1371L2583 1398zM2557 1398L2583 1398L2583 1437zM2557 1398L2583 1437L2542 1434z"/>
<path fill="#182d36" stroke="#182d36" d="M2006 1486L2001 1518L1977 1514zM1977 1514L1999 1553L1977 1553zM2041 1492L2046 1512L2001 1518zM2104 1337L2102 1370L2077 1381zM2077 1381L2102 1370L2106 1402zM2061 1435L2098 1458L2076 1463zM2076 1463L2098 1458L2076 1490zM2106 1402L2135 1398L2092 1428zM2098 1458L2127 1454L2101 1487zM2141 1337L2150 1379L2121 1359zM2135 1398L2168 1394L2129 1432zM2167 1459L2195 1450L2157 1484zM2195 1399L2218 1394L2182 1420zM2211 1372L2255 1366L2260 1410zM2255 1366L2273 1366L2283 1409zM2303 1396L2344 1397L2308 1436zM2334 1337L2374 1371L2351 1371zM2374 1371L2407 1405L2359 1405z"/>
<path fill="#183036" stroke="#183036" d="M2013 1372L2019 1400L1977 1392zM2010 1441L2004 1449L1977 1458zM2004 1449L2006 1486L1977 1485zM1977 1485L2006 1486L1977 1514zM2013 1372L2045 1405L2019 1400zM2019 1400L2045 1405L2010 1441zM2006 1486L2041 1492L2001 1518zM2077 1337L2077 1381L2040 1379zM2040 1379L2077 1381L2045 1405zM2077 1381L2061 1393L2045 1405zM2045 1405L2061 1393L2046 1425zM2061 1393L2061 1435L2046 1425zM2045 1453L2076 1463L2076 1490zM2077 1381L2106 1402L2061 1393zM2061 1435L2092 1428L2098 1458zM2098 1458L2101 1487L2076 1490zM2076 1490L2101 1487L2098 1518zM2102 1370L2135 1398L2106 1402zM2135 1398L2129 1432L2092 1428zM2150 1379L2168 1394L2135 1398zM2168 1394L2154 1435L2129 1432zM2129 1432L2154 1435L2127 1454zM2156 1337L2181 1337L2150 1379zM2150 1379L2192 1381L2195 1399zM2168 1394L2195 1399L2182 1420zM2154 1435L2195 1450L2167 1459zM2192 1381L2211 1372L2195 1399zM2223 1337L2255 1366L2211 1372zM2218 1394L2260 1410L2230 1435zM2260 1410L2246 1432L2230 1435zM2230 1435L2246 1432L2211 1454zM2281 1337L2302 1337L2303 1362zM2281 1337L2303 1362L2273 1366zM2273 1366L2303 1362L2283 1409zM2344 1397L2335 1422L2308 1436zM2366 1337L2395 1337L2374 1371zM2395 1337L2396 1377L2374 1371z"/>
<path fill="#1b3036" stroke="#1b3036" d="M1977 1458L2004 1449L1977 1485zM1977 1514L2001 1518L1999 1553zM2045 1405L2046 1425L2010 1441zM2010 1441L2046 1425L2045 1453zM2010 1441L2045 1453L2004 1449zM2004 1449L2045 1453L2041 1492zM2004 1449L2041 1492L2006 1486zM2046 1425L2061 1435L2045 1453zM2104 1337L2121 1359L2102 1370zM2102 1370L2121 1359L2135 1398zM2092 1428L2129 1432L2098 1458zM2129 1432L2127 1454L2098 1458zM2141 1337L2156 1337L2150 1379zM2121 1359L2150 1379L2135 1398zM2181 1337L2192 1381L2150 1379zM2150 1379L2195 1399L2168 1394zM2168 1394L2182 1420L2154 1435zM2157 1484L2189 1529L2167 1528zM2181 1337L2223 1337L2192 1381zM2211 1372L2218 1394L2195 1399zM2218 1394L2230 1435L2182 1420zM2223 1337L2243 1337L2255 1366zM2211 1454L2241 1458L2216 1492zM2243 1337L2281 1337L2273 1366zM2255 1366L2283 1409L2260 1410zM2303 1362L2303 1396L2283 1409zM2283 1409L2303 1396L2280 1424zM2303 1396L2308 1436L2280 1424zM2302 1337L2334 1337L2303 1362zM2303 1362L2351 1371L2303 1396zM2334 1337L2366 1337L2374 1371zM2344 1397L2359 1405L2335 1422zM2407 1405L2409 1434L2368 1420z"/>
<path fill="#1b3039" stroke="#1b3039" d="M1977 1392L2019 1400L1977 1439zM2019 1400L2010 1441L1977 1439zM2009 1337L2050 1337L2040 1379zM2009 1337L2040 1379L2013 1372zM2077 1337L2104 1337L2077 1381zM2061 1393L2106 1402L2092 1428zM2223 1337L2211 1372L2192 1381z"/>
<path fill="#1b3339" stroke="#1b3339" d="M2009 1337L2013 1372L1977 1377zM1977 1377L2013 1372L1977 1392zM2050 1337L2077 1337L2040 1379zM2061 1393L2092 1428L2061 1435zM2104 1337L2141 1337L2121 1359zM2243 1337L2273 1366L2255 1366z"/>
<path fill="#1e3339" stroke="#1e3339" d="M2013 1372L2040 1379L2045 1405z"/>
<path fill="#1e363c" stroke="#1e363c" d="M1977 1337L2009 1337L1977 1377z"/>
</g>
</g>
<path d="M2526 1512 L2530 1506 L2541 1503 L2560 1509 V1600 H2530z" fill="#0c1618"/>
</svg>

<div id="win"></div>
<!-- title bar -->
<svg class="abs" style="left:675px;top:171px" width="24" height="24" viewBox="0 0 24 24"><defs><linearGradient id="kg" x1="0" y1="0" x2="1" y2="1"><stop offset="0" stop-color="#4b5357"/><stop offset="1" stop-color="#2a2f31"/></linearGradient></defs><rect width="24" height="24" rx="1.5" fill="url(#kg)"/><path d="M9 6.2 L14.8 12 L9 17.8" fill="none" stroke="#b9bec1" stroke-width="1.2"/></svg>
<svg class="abs" style="left:2228px;top:166px" width="104" height="34" viewBox="0 0 104 34" fill="none" stroke="#232629" stroke-width="1.9"><path d="M9.5 14.5 L17 22 L24.5 14.5"/><path d="M43.5 20 L51 12.5 L58.5 20"/><path d="M79 11 L91 23 M91 11 L79 23"/></svg>
<!-- tool bar -->
<svg class="abs" style="left:694px;top:271px" width="26" height="26" viewBox="0 0 26 26" fill="#232629"><path d="M0.5 0.75h8v0h11.500v4h4.500v10.500h-1.500v-9h-4.500v0h-11.500v-4h-5v21h13.500v1.500h-15z"/><path d="M20 16.3h1.5v3h3v1.5h-3v3h-1.5v-3h-3v-1.5h3z"/></svg>
<svg class="abs" style="left:808px;top:296px" width="12" height="10" viewBox="0 0 12 10" fill="none" stroke="#232629" stroke-width="1.5"><path d="M1.8 2.6 L5.5 6.3 L9.2 2.6"/></svg>
<svg class="abs" style="left:841px;top:271px" width="26" height="26" viewBox="0 0 26 26" fill="#232629"><path d="M0.3 0.75h10.6v24h-10.6z M1.8 5.5v17.7h7.6v-17.7z"/><path d="M13.2 0.75h11.3v24h-11.3z M14.7 5.5v17.7h8.3v-17.7z"/></svg>
<svg class="abs" style="left:978px;top:277px" width="20" height="16" viewBox="0 0 20 16" fill="none" stroke="#232629" stroke-width="1.6"><path d="M3 4.5 L10 11.5 L17 4.5"/></svg>
<!-- right tools -->
<svg class="abs" style="left:2006px;top:271px" width="24" height="26" viewBox="0 0 24 26" fill="none" stroke="#b3b6b9" stroke-width="1.5"><path d="M1.2 1.5h8.3v3.5M1.2 1.5v19h4.5" /><path d="M6 5.2h9l6 6v12.5h-15z"/><path d="M15 5.2v6h6" fill="#c4c7c9"/></svg>
<svg class="abs" style="left:2120px;top:270px" width="24" height="27" viewBox="0 0 24 27" fill="#232629"><path d="M1 4.5h5.5v1.5h-4v18.5h19v-18.5h-4v-1.5h5.500v21.5h-22z"/><path d="M6.5 1.500h11v7h-11z"/><path d="M5.5 11.500h13v1.500h-13z M5.500 15.500h10v1.500h-10z M5.500 19.500h5v1.500h-5z"/></svg>
<svg class="abs" style="left:2235px;top:270px" width="28" height="28" viewBox="0 0 28 28" fill="none" stroke="#232629" stroke-width="1.7"><circle cx="10.700" cy="10.700" r="8.200"/><path d="M16.500 16.500 L25.500 25.500"/></svg>
<div class="abs" style="left:667px;top:316px;width:1666px;height:2px;background:#babdc0"></div>
<!-- terminal area -->
<div id="term"></div>
<div class="hdr" style="left:667px;width:833px;background:#2a2e32"></div>
<div class="hdr" style="left:1501px;width:832px;background:#25292b"></div>
<div class="abs" style="left:667px;top:318px;width:1666px;height:1px;background:#4a4e51"></div>
<div class="abs" style="left:1500px;top:318px;width:1.400px;height:998px;background:#f4f5f5"></div>
<!-- pane header icons -->
<svg class="abs" style="left:1384px;top:328px" width="108" height="24" viewBox="0 0 108 24"><g id="hi"><path d="M2 2h5.500l-5.500 5.500zM20.500 2h-5.500l5.500 5.500zM2 20.500h5.500l-5.500-5.500zM20.500 20.500h-5.500l5.500-5.500z" fill="#fcfcfc"/><path d="M5 5h12.500v12.500h-12.500z M7 8.500v7h8.500v-7z" fill="#fcfcfc" fill-rule="evenodd"/><path d="M44 2h6l0 0h6.500v3h5.500v8h-1.700v-6.300h-5.500v0h-6.300v-3h-2.800v14.800h8v1.800h-9.700z" fill="#fcfcfc"/><path d="M57.200 13.200h1.600v2.800h2.800v1.600h-2.800v2.800h-1.600v-2.800h-2.800v-1.600h2.800z" fill="#fcfcfc"/><circle cx="95" cy="11" r="9.500" fill="#da4453"/><path d="M91 7 L99 15 M99 7 L91 15" stroke="#2a2e32" stroke-width="1.700" fill="none"/></g></svg>
<svg class="abs" style="left:2218px;top:328px" width="108" height="24" viewBox="0 0 108 24"><use href="#hi"/></svg>
<!-- blue markers -->
<div class="abs" style="left:667px;top:1254px;width:5px;height:51px;background:#2c72aa"></div>
<div class="abs" style="left:1501.500px;top:361px;width:4px;height:944px;background:#2c72aa"></div>
<pre class="tt" style="left:673px">               python-fonttools-4.39.2-1  python-markdown-it-py-2
.2.0-1  python-more-itertools-9.1.1-1  python-platformdirs-3.1.0-
1  python-pydantic-1.10.6-2  python-pytz-2022.7.1-1
               python-setuptools-1:67.6.0-1  python-trove-classif
iers-2023.3.9-1  python-urllib3-1.26.13-1  qqc2-desktop-style-5.1
04.0-1  qt5-base-5.15.8+kde+r183-1  qt5-script-5.15.13-1
               qt5-wayland-5.15.8+kde+r63-1  qt5-webengine-5.15.1
3-1  raptor-2.0.16-2  rsync-3.2.7-4  rust-1:1.68.0-1  samba-4.18.
0-2  sddm-kcm-5.27.3-1  sdl2-2.26.4-1  smbclient-4.18.0-2  solid-
5.104.0-1
               sonnet-5.104.0-1  sqlite-3.41.1-1  squashfs-tools-
4.6-2  sudo-1.9.13.p3-1  syndication-5.104.0-1  syntax-highlighti
ng-5.104.0-1  systemd-253.1-3  systemd-libs-253.1-3
               systemd-sysvcompat-253.1-3  systemsettings-5.27.3-
1  thin-provisioning-tools-1.0.3-1  threadweaver-5.104.0-1  tinyc
ompress-1.2.8-2  tinyxml-2.6.2-10  uboot-asahi-2023.01.asahi3-1
               v4l-utils-1.24.1-1  vtk-9.2.6-3  wireplumber-0.4.1
4-1  xdg-desktop-portal-kde-5.27.3-1  xxhash-0.8.1-4  xz-5.4.2-1
 zxing-cpp-2.0.0-2

Total Download Size:    952.51 MiB
Total Installed Size:  3783.88 MiB
Net Upgrade Size:        -1.24 MiB

:: Proceed with installation? [Y/n] y
:: Retrieving packages...
 plasma-workspace-wallpapers-5.27.3-1-any
                                   2.5 MiB  3.88 MiB/s 00:22 [#--
 plasma-workspace-wallpapers-5.27.3-1-any              45.1 MiB
3.40 MiB/s 00:13 [#######################-----------------------]
 breeze-5.27.3-1-aarch64                               30.7 MiB
 breeze-5.27.3-1-...    70.7 MiB  3.23 MiB/s 00:22 [#######] 100%
 plasma-workspace...    79.8 MiB  1305 KiB/s 00:07 [######-]  88%
 rust-1:1.68.0-1-...    27.2 MiB  1448 KiB/s 00:25 [###----]  43%
 blender-17:3.4.1...    20.2 MiB  5.21 MiB/s 00:06 [##-----]  38%
 Total (  1/272)       197.4 MiB  7.78 MiB/s 01:37 [#------]  20%</pre>
<pre class="tt" style="left:1507px">processor       : 5
BogoMIPS        : 48.00
Features        : fp asimd evtstrm aes pmull sha1 sha2 crc32 atom
ics fphp asimdhp cpuid asimdrdm jscvt fcma lrcpc dcpop sha3 asimd
dp sha512 asimdfhm dit uscat ilrcpc flagm ssbs sb paca pacg dcpod
p flagm2 frint i8mm bf16 bti ecv
CPU implementer : 0x61
CPU architecture: 8
CPU variant     : 0x1
CPU part        : 0x033
CPU revision    : 0

processor       : 6
BogoMIPS        : 48.00
Features        : fp asimd evtstrm aes pmull sha1 sha2 crc32 atom
ics fphp asimdhp cpuid asimdrdm jscvt fcma lrcpc dcpop sha3 asimd
dp sha512 asimdfhm dit uscat ilrcpc flagm ssbs sb paca pacg dcpod
p flagm2 frint i8mm bf16 bti ecv
CPU implementer : 0x61
CPU architecture: 8
CPU variant     : 0x1
CPU part        : 0x033
CPU revision    : 0

processor       : 7
BogoMIPS        : 48.00
Features        : fp asimd evtstrm aes pmull sha1 sha2 crc32 atom
ics fphp asimdhp cpuid asimdrdm jscvt fcma lrcpc dcpop sha3 asimd
dp sha512 asimdfhm dit uscat ilrcpc flagm ssbs sb paca pacg dcpod
p flagm2 frint i8mm bf16 bti ecv
CPU implementer : 0x61
CPU architecture: 8
CPU variant     : 0x1
CPU part        : 0x033
CPU revision    : 0

<b class="g1">phoronix</b>@<b class="g2">phoronix-mac</b><b>:</b><b class="bl">~</b> -<span class="g3">$</span> </pre>
<div class="abs" style="left:1831px;top:1280px;width:12px;height:25px;background:#fcfcfc"></div>
<!-- scrollbars -->
<div class="abs" style="left:1479px;top:1092px;width:12px;height:214px;box-sizing:border-box;border:1.500px solid #8d9294;border-radius:6px;background:#484c4e"></div>
<div class="abs" style="left:2312px;top:954px;width:12px;height:352px;box-sizing:border-box;border:1.500px solid #8d9294;border-radius:6px;background:#484c4e"></div>
<div id="panel" class="abs" style="left:0;top:1530px;width:2560px;height:70px;background:#d3d6d9;box-shadow:inset 0 1px 0 #e6e8ea"></div>
<!-- task items -->
<div class="abs" style="left:386px;top:1530px;width:76px;height:70px;background:#e3b88f;border-top:3px solid #f08a37;box-sizing:border-box"></div>
<div class="abs" style="left:464px;top:1530px;width:76px;height:70px;background:#92c3e3;border-top:3px solid #48a9e6;box-sizing:border-box"></div>
<div class="abs" style="left:542px;top:1530px;width:76px;height:70px;background:#bfc3c6;border-top:3px solid #a0a4ab;box-sizing:border-box"></div>
<svg class="abs" style="left:0;top:1530px" width="640" height="70" viewBox="0 1530 640 70">
<defs>
<linearGradient id="dk" x1="0" y1="0" x2="1" y2="1"><stop offset="0" stop-color="#464c51"/><stop offset=".5" stop-color="#2d3236"/><stop offset="1" stop-color="#25292c"/></linearGradient>
<linearGradient id="bag" x1="0" y1="0" x2="0" y2="1"><stop offset="0" stop-color="#22a4f5"/><stop offset="1" stop-color="#1a7fe6"/></linearGradient>
<linearGradient id="fold" x1="0" y1="0" x2="1" y2="1"><stop offset="0" stop-color="#4db0e2"/><stop offset="1" stop-color="#2e8fc6"/></linearGradient>
<linearGradient id="ffx" x1=".75" y1=".05" x2=".25" y2=".95"><stop offset="0" stop-color="#fff36b"/><stop offset=".3" stop-color="#ffbd2e"/><stop offset=".6" stop-color="#ff6a2a"/><stop offset="1" stop-color="#ee1f77"/></linearGradient>
<radialGradient id="ffg" cx=".4" cy=".35" r=".7"><stop offset="0" stop-color="#9a5cf4"/><stop offset="1" stop-color="#5b2fc0"/></radialGradient>
<linearGradient id="eye" x1="0" y1="0" x2="0" y2="1"><stop offset="0" stop-color="#e45aa2"/><stop offset="1" stop-color="#cf3384"/></linearGradient>
</defs>
<!-- launcher -->
<g fill="#5b5e62"><circle cx="25.900" cy="1549.200" r="2.300"/><circle cx="20.600" cy="1564.200" r="3.800"/><circle cx="30.500" cy="1578.500" r="4.700"/><path d="M37.400 1552 L42 1547.300 L53.200 1558.300 L42 1569.300 L37.400 1564.600 L43.700 1558.300z"/></g>
<!-- system settings -->
<rect x="92" y="1545" width="40" height="40" fill="url(#dk)"/>
<path d="M97 1560h30M97 1570.300h30" stroke="#5a6065" stroke-width="2"/>
<path d="M97 1560h23M97 1570.300h11" stroke="#3daee9" stroke-width="2"/>
<circle cx="120" cy="1560" r="3.200" fill="#fcfcfc"/><circle cx="108" cy="1570.300" r="3.200" fill="#fcfcfc"/>
<!-- discover -->
<path d="M182.300 1557 V1552 a7.700 7.500 0 0 1 15.400 0 V1557" fill="none" stroke="#3daee9" stroke-width="1.300"/>
<path d="M175 1551.300 H205 L208 1555 V1585 H172 V1555z" fill="url(#bag)"/>
<path d="M175 1551.300 H205 L207 1554 H173z" fill="#1c6496"/>
<circle cx="182.300" cy="1557.500" r="1.200" fill="#bfe3fa"/><circle cx="197.600" cy="1557.500" r="1.200" fill="#bfe3fa"/>
<g fill="#8fcdf8"><circle cx="186" cy="1564.500" r="1.200"/><circle cx="183.500" cy="1571.500" r="1.800"/><circle cx="188" cy="1578" r="2.200"/><path d="M191.500 1565.500 L193.700 1563.300 L199.800 1569.300 L193.700 1575.300 L191.500 1573.100 L195.300 1569.300z" fill="#a5d6fa"/></g>
<!-- folder -->
<path d="M248 1547.500 H265 L267.500 1550.500 H288 V1582.500 H248z" fill="#2278a8"/>
<rect x="249" y="1554" width="38" height="9" fill="#f7f8f8"/>
<path d="M248 1561.500 H261 L263.500 1559 H288 V1582.500 H248z" fill="url(#fold)"/>
<rect x="248" y="1581.500" width="40" height="1.300" fill="#1f6f9c"/>
<!-- firefox -->
<path d="M346 1586.800 a22.500 22.500 0 0 1 -20 -32 c1.500 -3 3 -5 5 -6.500 c0 2 .6 3.500 1.600 4.700 c2.500 -4 6.500 -5.500 10.500 -5.300 c2 -3 5 -5.700 8 -7 c-.5 3.500 1 6 4 8.500 c6.500 4.500 13.200 10 13.200 19.500 a22.300 22.300 0 0 1 -22.300 18.100z" fill="url(#ffx)"/>
<circle cx="345.500" cy="1566" r="9.500" fill="url(#ffg)"/>
<path d="M330.500 1556 c3 -2.500 7 -3.500 10.500 -2 c-3 .5 -4.500 2 -5.500 4 c3 .5 6 1.500 7.500 3.500 c-3 0 -5 1.500 -6 3.500 c-1 3 1 6 4 7 c-5 1.500 -10.500 -1.500 -12 -7 c-.6 -3.200 0 -6.500 1.500 -9z" fill="#ff8a1f"/>
<!-- kde icon (task) -->
<path d="M430.300 1545.100 L442.900 1557.400 L430.300 1570 L426.400 1565.600 L434.400 1557.400 L426.400 1549.400z" fill="#232629"/>
<rect x="412.200" y="1546" width="3.800" height="3.800" rx="1" fill="#f7907b"/><circle cx="407.900" cy="1563.400" r="3.700" fill="#5fc124"/><circle cx="419.100" cy="1579.500" r="5" fill="#1f8de8"/>
<!-- konsole -->
<rect x="482" y="1545" width="40" height="40" rx="1.500" fill="url(#dk)"/>
<path d="M497.100 1556 L507.700 1565.100 L497.100 1574.200" fill="none" stroke="#b9bec1" stroke-width="1.800"/>
<!-- gwenview -->
<path d="M558.600 1565 C565 1553.500 573 1548.400 579.800 1548.400 C586.600 1548.400 594.500 1553.500 600.900 1565 C594.500 1576.500 586.600 1581.600 579.800 1581.600 C573 1581.600 565 1576.500 558.600 1565z" fill="url(#eye)"/>
<circle cx="579.800" cy="1565" r="12.200" fill="#fafafa"/>
<path d="M568.200 1568.500 L572.500 1561 L575.500 1566 L577.500 1563.500 L581 1568 L585.500 1562 L591.300 1569 A12.200 12.200 0 0 1 568.200 1568.500z" fill="#d2d3d4"/>
<circle cx="586.400" cy="1560.500" r="2.300" fill="#cfd0d1"/>
</svg>
<!-- system tray -->
<svg class="abs" style="left:1960px;top:1530px" width="380" height="70" viewBox="1960 1530 380 70" fill="none" stroke="#232629" stroke-width="1.400">
<circle cx="1984.800" cy="1559.500" r="5.100"/><path d="M1973.800 1577 a11 10.200 0 0 1 22 0"/>
<g stroke="#c3c6c9"><circle cx="2031.500" cy="1559.500" r="5.100"/><path d="M2020.500 1577 a11 10.200 0 0 1 13 -9.500"/></g>
<circle cx="2038.500" cy="1572.400" r="3.800" fill="#f4f5f5" stroke="none"/><path d="M2036.500 1572.400h4" stroke="#b0b3b6" stroke-width="1.200"/>
<!-- clipboard -->
<path d="M2074 1556 H2069.100 V1576.700 H2088.400 V1556 H2083.500"/><rect x="2073.900" y="1553.200" width="10.100" height="4.500" fill="#232629" stroke="none"/><path d="M2076.500 1554 v-1.400h5v1.400" fill="#232629" stroke="none"/>
<path d="M2071.800 1560.700h13.500 M2071.800 1563.800h13 M2071.800 1567.600h5.300 M2071.800 1571h6 M2071.800 1574.300h11.500" stroke-width="1.500"/>
<!-- muted speaker -->
<path d="M2113.100 1561.400h3.200v7.100h-3.200z M2117.300 1561.200 L2126.500 1553.200 V1577.100 L2117.300 1568.700z" fill="#232629" stroke="none"/>
<path d="M2129.500 1558.500 a9 9 0 0 1 0 13 M2131.800 1554.500 a14 14 0 0 1 0 21.300" stroke="#a9acaf" stroke-width="1.200"/>
<path d="M2113.100 1553.500 L2138.300 1577.200" stroke="#da4453" stroke-width="1.100"/>
<!-- bluetooth -->
<path d="M2166.300 1559.200 L2179 1571.500 L2172.800 1577 V1553.400 L2179 1559.200 L2166.300 1571.500" stroke-width="1.300"/>
<!-- wifi -->
<path d="M2204.300 1560.500 a21.200 21.200 0 0 1 30.200 0" stroke="#a0a3a6" stroke-width="1.300"/>
<path d="M2208.300 1565 a15.200 15.200 0 0 1 22.200 0 M2212.900 1569.700 a8.800 8.800 0 0 1 13 0" stroke-width="1.500"/>
<circle cx="2219.400" cy="1574.800" r="2.100" stroke-width="1.400"/>
<!-- speaker -->
<path d="M2254.100 1561.400h3.200v7.100h-3.200z M2258.300 1561.200 L2267.500 1553.200 V1577.100 L2258.300 1568.700z" fill="#232629" stroke="none"/>
<path d="M2270.500 1558.500 a9 9 0 0 1 0 13 M2272.800 1554.500 a14 14 0 0 1 0 21.300" stroke-width="1.300"/>
<!-- chevron -->
<path d="M2301.500 1569.300 L2310.500 1560.600 L2319.600 1569.300" stroke-width="1.700"/>
</svg>
<svg class="abs" style="left:2500px;top:1544px" width="44" height="44" viewBox="2500 1544 44 44" fill="none" stroke="#232629" stroke-width="1.900"><rect x="2504" y="1548.100" width="34" height="33.800"/><path d="M2507.300 1578h27.500" stroke-width="2"/></svg>

<!-- labels -->
<div class="t" id="title" style="left:1417.27px;top:172.00px;letter-spacing:0.129px">~ : zsh — Konsole</div>
<div class="t" id="m1" style="left:681.62px;top:215.20px;letter-spacing:0.064px">File</div>
<div class="t" id="m2" style="left:743.46px;top:215.20px;letter-spacing:0.171px">Edit</div>
<div class="t" id="m3" style="left:810.32px;top:215.20px;letter-spacing:-0.010px">View</div>
<div class="t" id="m4" style="left:884.46px;top:215.20px;letter-spacing:0.515px">Bookmarks</div>
<div class="t" id="m5" style="left:1018.62px;top:215.20px;letter-spacing:0.495px">Plugins</div>
<div class="t" id="m6" style="left:1116.89px;top:215.20px;letter-spacing:0.359px">Settings</div>
<div class="t" id="m7" style="left:1221.97px;top:215.20px;letter-spacing:0.716px">Help</div>
<div class="t" id="b1" style="left:728.24px;top:271.40px;letter-spacing:0.400px">New Tab</div>
<div class="t" id="b2" style="left:875.15px;top:271.40px;letter-spacing:-0.022px">Split View</div>
<div class="t dis" id="b3" style="left:2040.30px;top:271.40px;letter-spacing:0.045px">Copy</div>
<div class="t" id="b4" style="left:2152.86px;top:271.40px;letter-spacing:-0.097px">Paste</div>
<div class="t" id="b5" style="left:2270.03px;top:271.40px;letter-spacing:0.173px">Find</div>
<div class="t pt" id="h1" style="left:962.01px;top:327.80px;letter-spacing:0.177px">- : sudo pacman</div>
<div class="t pt" id="h2" style="left:1840.54px;top:327.80px;letter-spacing:-0.196px">~ : zsh</div>
<div class="t clk" id="clk" style="left:2349.14px;top:1541.40px;letter-spacing:0.897px">8:25 AM</div>
<div class="t dat" id="dat" style="left:2362.64px;top:1569.50px;letter-spacing:1.194px">3/21/23</div>
</body></html>
